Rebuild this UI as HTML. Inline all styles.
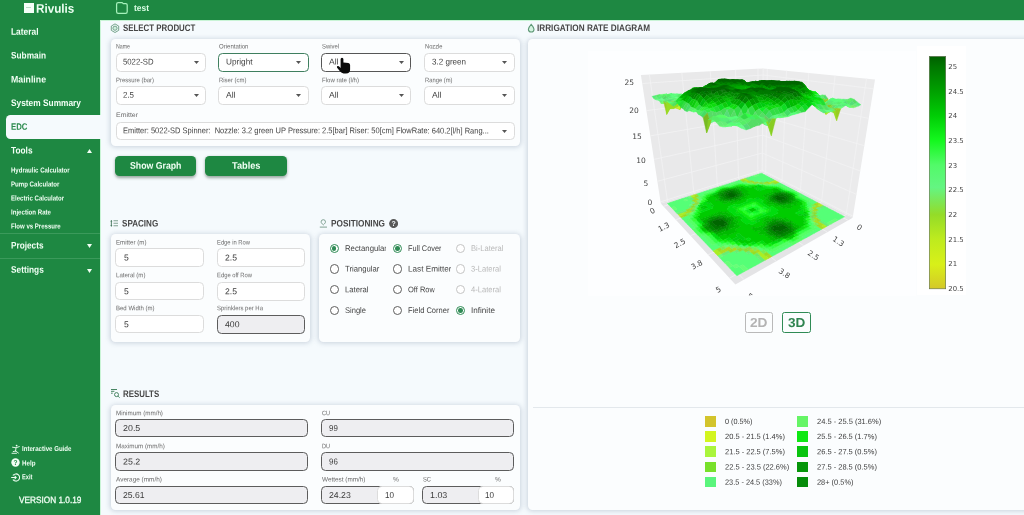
<!DOCTYPE html>
<html lang="en"><head><meta charset="utf-8"><title>Rivulis EDC</title><style>
html,body{margin:0;padding:0;background:#f5fafd;width:1024px;height:515px;overflow:hidden;}
#clip{position:absolute;left:0;top:0;width:1024px;height:515px;overflow:hidden;}
body{width:1024px;height:515px;overflow:hidden;position:relative;font-family:"Liberation Sans",sans-serif;}
#app{position:absolute;left:0;top:0;width:1024px;height:515px;will-change:transform;filter:blur(0.35px);}
.b{position:absolute;display:block;}
.t{position:absolute;white-space:pre;display:block;transform-origin:0 0;}
</style></head><body>
<div id="clip"><div id="app">
<div class="b " style="left:-6.00px;top:-6.00px;width:1040.00px;height:530.00px;background:#f5fafd;"></div>
<div class="b " style="left:-6.00px;top:-6.00px;width:1040.00px;height:25.60px;background:#1e8842;"></div>
<div class="b " style="left:100.00px;top:19.60px;width:934.00px;height:1.20px;background:#c9f4d6;"></div>
<div class="b " style="left:-6.00px;top:-6.00px;width:106.00px;height:530.00px;background:#1e8842;"></div>
<div class="b " style="left:100.00px;top:20.00px;width:1.20px;height:505.00px;background:#c9f4d6;"></div>
<div class="b " style="left:23.90px;top:2.90px;width:10.20px;height:10.20px;background:#f4fff7;"></div>
<div class="b " style="left:26.00px;top:7.20px;width:5.20px;height:0.90px;background:#b9dcc5;"></div>
<span class="t " style="left:35.80px;top:0px;font-size:12.50px;line-height:12.50px;font-weight:700;transform:translate(0,2.80px) scaleX(0.9345) rotate(0.03deg);color:#ecfff2;">Rivulis</span>
<svg class="b" style="left:115px;top:1px;width:14px;height:14px" viewBox="0 0 14 14"><path d="M3.2 1.6 H7.2 L8.2 2.6 H10.8 Q12.2 2.6 12.2 4 V10.8 Q12.2 12.4 10.6 12.4 H3.2 Q1.6 12.4 1.6 10.8 V3.2 Q1.6 1.6 3.2 1.6 Z" fill="none" stroke="#a6f2bb" stroke-width="1.25" stroke-linejoin="round"/></svg>
<span class="t " style="left:134.00px;top:1px;font-size:9.00px;line-height:9.00px;font-weight:700;transform:translate(0,2.90px) scaleX(0.9372) rotate(0.03deg);color:#dcffe6;">test</span>
<span class="t " style="left:10.80px;top:25px;font-size:9.50px;line-height:9.50px;font-weight:700;transform:translate(0,1.70px) scaleX(0.8827) rotate(0.03deg);color:#f1fff4;">Lateral</span>
<span class="t " style="left:10.80px;top:49px;font-size:9.50px;line-height:9.50px;font-weight:700;transform:translate(0,1.60px) scaleX(0.8725) rotate(0.03deg);color:#f1fff4;">Submain</span>
<span class="t " style="left:10.80px;top:72px;font-size:9.50px;line-height:9.50px;font-weight:700;transform:translate(0,2.40px) scaleX(0.9209) rotate(0.03deg);color:#f1fff4;">Mainline</span>
<span class="t " style="left:10.80px;top:96px;font-size:9.50px;line-height:9.50px;font-weight:700;transform:translate(0,1.90px) scaleX(0.8779) rotate(0.03deg);color:#f1fff4;">System Summary</span>
<div class="b " style="left:6.00px;top:115.20px;width:95.50px;height:23.80px;background:#f5fafd;border-radius:4.5px 0 0 4.5px;"></div>
<span class="t " style="left:11.00px;top:120px;font-size:9.30px;line-height:9.30px;font-weight:700;transform:translate(0,2.80px) scaleX(0.8403) rotate(0.03deg);color:#2a8a4c;">EDC</span>
<span class="t " style="left:11.00px;top:143px;font-size:9.50px;line-height:9.50px;font-weight:700;transform:translate(0,2.40px) scaleX(0.8730) rotate(0.03deg);color:#f1fff4;">Tools</span>
<svg class="b" style="left:87px;top:149.3px;width:5px;height:4px" viewBox="0 0 5 4"><path d="M0 4 L2.5 0 L5 4Z" fill="#f1fff4"/></svg>
<span class="t " style="left:10.90px;top:165px;font-size:7.20px;line-height:7.20px;font-weight:700;transform:translate(0,1.50px) scaleX(0.8383) rotate(0.03deg);color:#f1fff4;">Hydraulic Calculator</span>
<span class="t " style="left:10.90px;top:179px;font-size:7.20px;line-height:7.20px;font-weight:700;transform:translate(0,1.40px) scaleX(0.8477) rotate(0.03deg);color:#f1fff4;">Pump Calculator</span>
<span class="t " style="left:10.90px;top:193px;font-size:7.20px;line-height:7.20px;font-weight:700;transform:translate(0,1.40px) scaleX(0.8414) rotate(0.03deg);color:#f1fff4;">Electric Calculator</span>
<span class="t " style="left:10.90px;top:207px;font-size:7.20px;line-height:7.20px;font-weight:700;transform:translate(0,1.60px) scaleX(0.8473) rotate(0.03deg);color:#f1fff4;">Injection Rate</span>
<span class="t " style="left:10.90px;top:221px;font-size:7.20px;line-height:7.20px;font-weight:700;transform:translate(0,1.40px) scaleX(0.8408) rotate(0.03deg);color:#f1fff4;">Flow vs Pressure</span>
<div class="b " style="left:-6.00px;top:233.20px;width:106.00px;height:0.90px;background:#3b9a5b;"></div>
<span class="t " style="left:11.00px;top:238px;font-size:9.50px;line-height:9.50px;font-weight:700;transform:translate(0,2.40px) scaleX(0.8669) rotate(0.03deg);color:#f1fff4;">Projects</span>
<svg class="b" style="left:87px;top:244.3px;width:5px;height:4px" viewBox="0 0 5 4"><path d="M0 0 L2.5 4 L5 0Z" fill="#f1fff4"/></svg>
<div class="b " style="left:-6.00px;top:257.50px;width:106.00px;height:0.90px;background:#3b9a5b;"></div>
<span class="t " style="left:11.00px;top:263px;font-size:9.50px;line-height:9.50px;font-weight:700;transform:translate(0,1.70px) scaleX(0.8752) rotate(0.03deg);color:#f1fff4;">Settings</span>
<svg class="b" style="left:87px;top:268.6px;width:5px;height:4px" viewBox="0 0 5 4"><path d="M0 0 L2.5 4 L5 0Z" fill="#f1fff4"/></svg>
<span class="t " style="left:21.70px;top:443px;font-size:7.20px;line-height:7.20px;font-weight:700;transform:translate(0,2.00px) scaleX(0.8473) rotate(0.03deg);color:#f1fff4;">Interactive Guide</span>
<span class="t " style="left:21.70px;top:458px;font-size:7.20px;line-height:7.20px;font-weight:700;transform:translate(0,1.40px) scaleX(0.8652) rotate(0.03deg);color:#f1fff4;">Help</span>
<span class="t " style="left:21.70px;top:472px;font-size:7.20px;line-height:7.20px;font-weight:700;transform:translate(0,1.20px) scaleX(0.7951) rotate(0.03deg);color:#f1fff4;">Exit</span>
<span class="t " style="left:18.80px;top:493px;font-size:9.20px;line-height:9.20px;transform:translate(0,3.00px) scaleX(0.8987) rotate(0.03deg);color:#f1fff4;-webkit-text-stroke:0.3px #f1fff4;">VERSION 1.0.19</span>
<svg class="b" style="left:10.5px;top:443.5px;width:10px;height:10px" viewBox="0 0 10 10" fill="none" stroke="#f1fff4" stroke-width="0.9" stroke-linecap="round"><circle cx="5.6" cy="1.6" r="0.9" fill="#f1fff4" stroke="none"/><path d="M1.5 3.2 L5 3.8 L8.3 2.6 M5 3.8 L4.6 7 M4.6 7 L2.2 7.6 M4.6 7 L7.4 9 M1 9.3 H5.5"/></svg>
<svg class="b" style="left:10.5px;top:458px;width:9px;height:9px" viewBox="0 0 9 9"><circle cx="4.5" cy="4.5" r="4.2" fill="#f1fff4"/><text x="4.5" y="7" font-size="6.6" font-weight="700" text-anchor="middle" fill="#1e8842" font-family="Liberation Sans, sans-serif">?</text></svg>
<svg class="b" style="left:10.5px;top:472.5px;width:9px;height:9px" viewBox="0 0 9 9" fill="none" stroke="#f1fff4" stroke-width="1.05" stroke-linecap="round" stroke-linejoin="round"><path d="M2.2 2.2 A3.6 3.6 0 1 1 2.2 6.8"/><path d="M0.6 4.5 H5.2 M3.8 3 L5.3 4.5 L3.8 6"/></svg>
<span class="t " style="left:123.40px;top:21px;font-size:9.50px;line-height:9.50px;font-weight:700;transform:translate(0,2.00px) scaleX(0.8302) rotate(0.03deg);color:#454545;">SELECT PRODUCT</span>
<span class="t " style="left:121.90px;top:216px;font-size:9.50px;line-height:9.50px;font-weight:700;transform:translate(0,2.40px) scaleX(0.8502) rotate(0.03deg);color:#454545;">SPACING</span>
<span class="t " style="left:330.80px;top:216px;font-size:9.50px;line-height:9.50px;font-weight:700;transform:translate(0,2.40px) scaleX(0.8670) rotate(0.03deg);color:#454545;">POSITIONING</span>
<span class="t " style="left:123.40px;top:387px;font-size:9.50px;line-height:9.50px;font-weight:700;transform:translate(0,1.90px) scaleX(0.8296) rotate(0.03deg);color:#454545;">RESULTS</span>
<span class="t " style="left:537.30px;top:21px;font-size:9.50px;line-height:9.50px;font-weight:700;transform:translate(0,2.00px) scaleX(0.8622) rotate(0.03deg);color:#454545;">IRRIGATION RATE DIAGRAM</span>
<div class="b " style="left:110.50px;top:38.80px;width:409.50px;height:107.40px;background:#fbfdfe;border-radius:4.5px;box-shadow:0 0.5px 5px 0.5px rgba(100,120,145,.30);"></div>
<span class="t " style="left:116.10px;top:42px;font-size:6.60px;line-height:6.60px;transform:translate(0,1.60px) scaleX(0.7952) rotate(0.03deg);color:#6a6a6a;">Name</span>
<div class="b " style="left:115.70px;top:52.90px;width:90.20px;height:18.80px;background:#fff;border:1px solid #dcdcdc;border-radius:4.5px;box-sizing:border-box;"></div>
<span class="t " style="left:123.40px;top:56px;font-size:8.30px;line-height:8.30px;transform:translate(0,1.50px) scaleX(0.9341) rotate(0.03deg);color:#444;">5022-SD</span>
<svg class="b" style="left:193.70px;top:61.10px;width:5px;height:3px" viewBox="0 0 5 3"><path d="M0 0 H5 L2.5 3Z" fill="#555"/></svg>
<span class="t " style="left:218.80px;top:42px;font-size:6.60px;line-height:6.60px;transform:translate(0,1.60px) scaleX(0.9137) rotate(0.03deg);color:#6a6a6a;">Orientation</span>
<div class="b " style="left:218.40px;top:52.90px;width:90.20px;height:18.80px;background:#fff;border:1.5px solid #3f7f5f;border-radius:4.5px;box-sizing:border-box;"></div>
<span class="t " style="left:226.10px;top:56px;font-size:8.30px;line-height:8.30px;transform:translate(0,1.50px) scaleX(0.9904) rotate(0.03deg);color:#444;">Upright</span>
<svg class="b" style="left:296.40px;top:61.10px;width:5px;height:3px" viewBox="0 0 5 3"><path d="M0 0 H5 L2.5 3Z" fill="#555"/></svg>
<span class="t " style="left:321.50px;top:42px;font-size:6.60px;line-height:6.60px;transform:translate(0,1.60px) scaleX(0.8913) rotate(0.03deg);color:#6a6a6a;">Swivel</span>
<div class="b " style="left:321.10px;top:52.90px;width:90.20px;height:18.80px;background:#fff;border:1.25px solid #565656;border-radius:4.5px;box-sizing:border-box;"></div>
<span class="t " style="left:328.80px;top:56px;font-size:8.30px;line-height:8.30px;transform:translate(0,1.50px) scaleX(1.0298) rotate(0.03deg);color:#444;">All</span>
<svg class="b" style="left:399.10px;top:61.10px;width:5px;height:3px" viewBox="0 0 5 3"><path d="M0 0 H5 L2.5 3Z" fill="#555"/></svg>
<span class="t " style="left:424.80px;top:42px;font-size:6.60px;line-height:6.60px;transform:translate(0,1.60px) scaleX(0.8674) rotate(0.03deg);color:#6a6a6a;">Nozzle</span>
<div class="b " style="left:424.40px;top:52.90px;width:90.20px;height:18.80px;background:#fff;border:1px solid #dcdcdc;border-radius:4.5px;box-sizing:border-box;"></div>
<span class="t " style="left:432.10px;top:56px;font-size:8.30px;line-height:8.30px;transform:translate(0,1.50px) scaleX(0.9694) rotate(0.03deg);color:#444;">3.2 green</span>
<svg class="b" style="left:502.40px;top:61.10px;width:5px;height:3px" viewBox="0 0 5 3"><path d="M0 0 H5 L2.5 3Z" fill="#555"/></svg>
<span class="t " style="left:116.10px;top:75px;font-size:6.60px;line-height:6.60px;transform:translate(0,2.20px) scaleX(0.9009) rotate(0.03deg);color:#6a6a6a;">Pressure (bar)</span>
<div class="b " style="left:115.70px;top:86.10px;width:90.20px;height:18.70px;background:#fff;border:1px solid #dcdcdc;border-radius:4.5px;box-sizing:border-box;"></div>
<span class="t " style="left:123.40px;top:89px;font-size:8.30px;line-height:8.30px;transform:translate(0,1.70px) scaleX(0.9533) rotate(0.03deg);color:#444;">2.5</span>
<svg class="b" style="left:193.70px;top:94.30px;width:5px;height:3px" viewBox="0 0 5 3"><path d="M0 0 H5 L2.5 3Z" fill="#555"/></svg>
<span class="t " style="left:218.80px;top:75px;font-size:6.60px;line-height:6.60px;transform:translate(0,2.20px) scaleX(0.9037) rotate(0.03deg);color:#6a6a6a;">Riser (cm)</span>
<div class="b " style="left:218.40px;top:86.10px;width:90.20px;height:18.70px;background:#fff;border:1px solid #dcdcdc;border-radius:4.5px;box-sizing:border-box;"></div>
<span class="t " style="left:226.10px;top:89px;font-size:8.30px;line-height:8.30px;transform:translate(0,1.70px) scaleX(1.0298) rotate(0.03deg);color:#444;">All</span>
<svg class="b" style="left:296.40px;top:94.30px;width:5px;height:3px" viewBox="0 0 5 3"><path d="M0 0 H5 L2.5 3Z" fill="#555"/></svg>
<span class="t " style="left:321.50px;top:75px;font-size:6.60px;line-height:6.60px;transform:translate(0,2.20px) scaleX(0.9171) rotate(0.03deg);color:#6a6a6a;">Flow rate (l/h)</span>
<div class="b " style="left:321.10px;top:86.10px;width:90.20px;height:18.70px;background:#fff;border:1px solid #dcdcdc;border-radius:4.5px;box-sizing:border-box;"></div>
<span class="t " style="left:328.80px;top:89px;font-size:8.30px;line-height:8.30px;transform:translate(0,1.70px) scaleX(1.0298) rotate(0.03deg);color:#444;">All</span>
<svg class="b" style="left:399.10px;top:94.30px;width:5px;height:3px" viewBox="0 0 5 3"><path d="M0 0 H5 L2.5 3Z" fill="#555"/></svg>
<span class="t " style="left:424.80px;top:75px;font-size:6.60px;line-height:6.60px;transform:translate(0,2.20px) scaleX(0.8821) rotate(0.03deg);color:#6a6a6a;">Range (m)</span>
<div class="b " style="left:424.40px;top:86.10px;width:90.20px;height:18.70px;background:#fff;border:1px solid #dcdcdc;border-radius:4.5px;box-sizing:border-box;"></div>
<span class="t " style="left:432.10px;top:89px;font-size:8.30px;line-height:8.30px;transform:translate(0,1.70px) scaleX(1.0298) rotate(0.03deg);color:#444;">All</span>
<svg class="b" style="left:502.40px;top:94.30px;width:5px;height:3px" viewBox="0 0 5 3"><path d="M0 0 H5 L2.5 3Z" fill="#555"/></svg>
<span class="t " style="left:116.10px;top:110px;font-size:6.60px;line-height:6.60px;transform:translate(0,1.90px) scaleX(1.0525) rotate(0.03deg);color:#6a6a6a;">Emitter</span>
<div class="b " style="left:115.70px;top:121.60px;width:398.90px;height:18.20px;background:#fff;border:1px solid #dcdcdc;border-radius:4.5px;box-sizing:border-box;"></div>
<span class="t " style="left:123.40px;top:124px;font-size:8.30px;line-height:8.30px;transform:translate(0,2.20px) scaleX(0.9039) rotate(0.03deg);color:#444;">Emitter: 5022-SD Spinner:  Nozzle: 3.2 green UP Pressure: 2.5[bar] Riser: 50[cm] FlowRate: 640.2[l/h] Rang...</span>
<svg class="b" style="left:502.40px;top:129.80px;width:5px;height:3px" viewBox="0 0 5 3"><path d="M0 0 H5 L2.5 3Z" fill="#555"/></svg>
<div class="b " style="left:115.00px;top:155.50px;width:81.00px;height:20.40px;background:#1e8842;border-radius:4.5px;box-shadow:0 1.5px 3px rgba(40,70,50,.45);"></div>
<span class="t " style="left:129.70px;top:159px;font-size:9.60px;line-height:9.60px;font-weight:700;transform:translate(0,1.80px) scaleX(0.9109) rotate(0.03deg);color:#f1fff4;">Show Graph</span>
<div class="b " style="left:205.20px;top:155.50px;width:81.80px;height:20.40px;background:#1e8842;border-radius:4.5px;box-shadow:0 1.5px 3px rgba(40,70,50,.45);"></div>
<span class="t " style="left:231.70px;top:159px;font-size:9.60px;line-height:9.60px;font-weight:700;transform:translate(0,1.80px) scaleX(0.9596) rotate(0.03deg);color:#f1fff4;">Tables</span>
<svg class="b" style="left:110px;top:23px;width:10px;height:10.5px" viewBox="0 0 10 10.5" fill="none" stroke="#6f9f86" stroke-width="0.95"><path d="M5 0.9 L8.7 3.05 V7.35 L5 9.5 L1.3 7.35 V3.05 Z"/><circle cx="5" cy="5.2" r="2.1" fill="#cfeedd"/></svg>
<svg class="b" style="left:110px;top:219px;width:9px;height:9px" viewBox="0 0 9 9" fill="none"><path d="M1.35 1.6 V7.2" stroke="#3f7358" stroke-width="0.9"/><path d="M0.3 2.5 L1.35 1.1 L2.4 2.5 Z M0.3 6.3 L1.35 7.7 L2.4 6.3 Z" fill="#3f7358"/><path d="M3.5 1.75 H8 M3.5 4.25 H8 M3.5 6.75 H8" stroke="#7b9d8c" stroke-width="0.95"/></svg>
<svg class="b" style="left:319px;top:219px;width:9px;height:9px" viewBox="0 0 9 9" fill="none" stroke="#7a9d8d" stroke-width="0.95"><path d="M4.3 5.9 C2.6 4.4 2.1 3.6 2.1 2.9 A2.2 2.2 0 0 1 6.5 2.9 C6.5 3.6 6 4.4 4.3 5.9 Z"/><path d="M0.8 8.1 H8"/></svg>
<svg class="b" style="left:110px;top:388px;width:11px;height:11px" viewBox="0 0 11 11" fill="none" stroke="#3f7f5c" stroke-width="0.95"><path d="M1 1.5 H7 M1 3.3 H4.4 M1 5.2 H2.7"/><circle cx="6.5" cy="6.6" r="2"/><path d="M8 8.1 L9.6 9.7"/></svg>
<svg class="b" style="left:527px;top:23px;width:9px;height:10px" viewBox="0 0 9 10" fill="#d4f3e0" stroke="#5f9977" stroke-width="1.1"><path d="M4.2 1.4 C5.6 3 7 4.6 7 6.2 A2.8 2.8 0 0 1 1.4 6.2 C1.4 4.6 2.8 3 4.2 1.4 Z"/></svg>
<svg class="b" style="left:335px;top:56px;width:17px;height:19px" viewBox="335 56 17 19"><path d="M340.6 59.2 Q340.6 57.7 342 57.7 Q343.4 57.7 343.4 59.2 L343.4 62.5 L348.4 63.1 Q350.1 63.4 350.1 65.1 L350.1 69.4 Q350.1 73.4 346 73.4 L343.6 73.4 Q341.5 73.4 340.2 71.6 L337.1 67.7 Q336.5 66.6 337.5 66.1 Q338.6 65.8 339.4 66.7 L340.6 67.9 Z" fill="#0a0a0a"/></svg>
<div class="b " style="left:110.50px;top:234.20px;width:199.60px;height:108.00px;background:#fbfdfe;border-radius:4.5px;box-shadow:0 0.5px 5px 0.5px rgba(100,120,145,.30);"></div>
<span class="t " style="left:116.00px;top:237px;font-size:6.60px;line-height:6.60px;transform:translate(0,2.40px) scaleX(0.9347) rotate(0.03deg);color:#6a6a6a;">Emitter (m)</span>
<span class="t " style="left:217.00px;top:237px;font-size:6.60px;line-height:6.60px;transform:translate(0,2.40px) scaleX(0.8818) rotate(0.03deg);color:#6a6a6a;">Edge in Row</span>
<div class="b " style="left:115.20px;top:248.20px;width:88.70px;height:18.40px;background:#fff;border:1px solid #dcdcdc;border-radius:4.5px;box-sizing:border-box;"></div>
<span class="t " style="left:123.50px;top:251px;font-size:8.60px;line-height:8.60px;transform:translate(0,2.40px) scaleX(1.0000) rotate(0.03deg);color:#3c3c3c;">5</span>
<div class="b " style="left:216.50px;top:248.20px;width:88.70px;height:18.50px;background:#fff;border:1px solid #dcdcdc;border-radius:4.5px;box-sizing:border-box;"></div>
<span class="t " style="left:224.60px;top:251px;font-size:8.60px;line-height:8.60px;transform:translate(0,2.45px) scaleX(1.0037) rotate(0.03deg);color:#3c3c3c;">2.5</span>
<span class="t " style="left:116.00px;top:270px;font-size:6.60px;line-height:6.60px;transform:translate(0,2.30px) scaleX(0.9245) rotate(0.03deg);color:#6a6a6a;">Lateral (m)</span>
<span class="t " style="left:217.00px;top:270px;font-size:6.60px;line-height:6.60px;transform:translate(0,2.30px) scaleX(0.8860) rotate(0.03deg);color:#6a6a6a;">Edge off Row</span>
<div class="b " style="left:115.20px;top:282.10px;width:88.70px;height:18.40px;background:#fff;border:1px solid #dcdcdc;border-radius:4.5px;box-sizing:border-box;"></div>
<span class="t " style="left:123.50px;top:285px;font-size:8.60px;line-height:8.60px;transform:translate(0,2.30px) scaleX(1.0000) rotate(0.03deg);color:#3c3c3c;">5</span>
<div class="b " style="left:216.50px;top:282.10px;width:88.70px;height:18.50px;background:#fff;border:1px solid #dcdcdc;border-radius:4.5px;box-sizing:border-box;"></div>
<span class="t " style="left:224.60px;top:285px;font-size:8.60px;line-height:8.60px;transform:translate(0,2.35px) scaleX(1.0037) rotate(0.03deg);color:#3c3c3c;">2.5</span>
<span class="t " style="left:116.00px;top:303px;font-size:6.60px;line-height:6.60px;transform:translate(0,2.20px) scaleX(0.9128) rotate(0.03deg);color:#6a6a6a;">Bed Width (m)</span>
<span class="t " style="left:217.00px;top:303px;font-size:6.60px;line-height:6.60px;transform:translate(0,2.20px) scaleX(0.9022) rotate(0.03deg);color:#6a6a6a;">Sprinklers per Ha</span>
<div class="b " style="left:115.20px;top:315.10px;width:88.70px;height:18.40px;background:#fff;border:1px solid #dcdcdc;border-radius:4.5px;box-sizing:border-box;"></div>
<span class="t " style="left:123.50px;top:318px;font-size:8.60px;line-height:8.60px;transform:translate(0,2.30px) scaleX(1.0000) rotate(0.03deg);color:#3c3c3c;">5</span>
<div class="b " style="left:216.50px;top:315.10px;width:88.70px;height:18.50px;background:#eeeef1;border:1.1px solid #5c5c5c;border-radius:4.5px;box-sizing:border-box;"></div>
<span class="t " style="left:224.60px;top:318px;font-size:8.60px;line-height:8.60px;transform:translate(0,2.35px) scaleX(1.0105) rotate(0.03deg);color:#3c3c3c;">400</span>
<div class="b " style="left:319.00px;top:234.20px;width:201.00px;height:108.00px;background:#fbfdfe;border-radius:4.5px;box-shadow:0 0.5px 5px 0.5px rgba(100,120,145,.30);"></div>
<div class="b " style="left:329.60px;top:243.70px;width:9.20px;height:9.20px;border:1.1px solid #2f8b55;border-radius:50%;box-sizing:border-box;background:#fff;"></div>
<div class="b " style="left:331.90px;top:246.00px;width:4.60px;height:4.60px;border-radius:50%;background:#2f8b55;"></div>
<span class="t " style="left:344.70px;top:242px;font-size:8.20px;line-height:8.20px;transform:translate(0,2.90px) scaleX(0.9499) rotate(0.03deg);color:#444;max-width:43.48px;overflow:hidden;">Rectangular</span>
<div class="b " style="left:392.70px;top:243.70px;width:9.20px;height:9.20px;border:1.1px solid #2f8b55;border-radius:50%;box-sizing:border-box;background:#fff;"></div>
<div class="b " style="left:395.00px;top:246.00px;width:4.60px;height:4.60px;border-radius:50%;background:#2f8b55;"></div>
<span class="t " style="left:408.00px;top:242px;font-size:8.20px;line-height:8.20px;transform:translate(0,2.90px) scaleX(0.8965) rotate(0.03deg);color:#444;max-width:47.29px;overflow:hidden;">Full Cover</span>
<div class="b " style="left:456.00px;top:243.70px;width:9.20px;height:9.20px;border:1.1px solid #c4c4c4;border-radius:50%;box-sizing:border-box;background:#fff;"></div>
<span class="t " style="left:471.00px;top:242px;font-size:8.20px;line-height:8.20px;transform:translate(0,2.90px) scaleX(0.9260) rotate(0.03deg);color:#b9b9b9;">Bi-Lateral</span>
<div class="b " style="left:329.60px;top:264.40px;width:9.20px;height:9.20px;border:1.1px solid #5e5e5e;border-radius:50%;box-sizing:border-box;background:#fff;"></div>
<span class="t " style="left:344.70px;top:263px;font-size:8.20px;line-height:8.20px;transform:translate(0,2.60px) scaleX(0.9423) rotate(0.03deg);color:#444;max-width:43.83px;overflow:hidden;">Triangular</span>
<div class="b " style="left:392.70px;top:264.40px;width:9.20px;height:9.20px;border:1.1px solid #5e5e5e;border-radius:50%;box-sizing:border-box;background:#fff;"></div>
<span class="t " style="left:408.00px;top:263px;font-size:8.20px;line-height:8.20px;transform:translate(0,2.60px) scaleX(0.9966) rotate(0.03deg);color:#444;max-width:42.54px;overflow:hidden;">Last Emitter</span>
<div class="b " style="left:456.00px;top:264.40px;width:9.20px;height:9.20px;border:1.1px solid #c4c4c4;border-radius:50%;box-sizing:border-box;background:#fff;"></div>
<span class="t " style="left:471.00px;top:263px;font-size:8.20px;line-height:8.20px;transform:translate(0,2.60px) scaleX(0.9269) rotate(0.03deg);color:#b9b9b9;">3-Lateral</span>
<div class="b " style="left:329.60px;top:285.10px;width:9.20px;height:9.20px;border:1.1px solid #5e5e5e;border-radius:50%;box-sizing:border-box;background:#fff;"></div>
<span class="t " style="left:344.70px;top:284px;font-size:8.20px;line-height:8.20px;transform:translate(0,2.30px) scaleX(0.9372) rotate(0.03deg);color:#444;max-width:44.07px;overflow:hidden;">Lateral</span>
<div class="b " style="left:392.70px;top:285.10px;width:9.20px;height:9.20px;border:1.1px solid #5e5e5e;border-radius:50%;box-sizing:border-box;background:#fff;"></div>
<span class="t " style="left:408.00px;top:284px;font-size:8.20px;line-height:8.20px;transform:translate(0,2.30px) scaleX(0.9162) rotate(0.03deg);color:#444;max-width:46.28px;overflow:hidden;">Off Row</span>
<div class="b " style="left:456.00px;top:285.10px;width:9.20px;height:9.20px;border:1.1px solid #c4c4c4;border-radius:50%;box-sizing:border-box;background:#fff;"></div>
<span class="t " style="left:471.00px;top:284px;font-size:8.20px;line-height:8.20px;transform:translate(0,2.30px) scaleX(0.9269) rotate(0.03deg);color:#b9b9b9;">4-Lateral</span>
<div class="b " style="left:329.60px;top:305.80px;width:9.20px;height:9.20px;border:1.1px solid #5e5e5e;border-radius:50%;box-sizing:border-box;background:#fff;"></div>
<span class="t " style="left:344.70px;top:304px;font-size:8.20px;line-height:8.20px;transform:translate(0,3.00px) scaleX(0.9212) rotate(0.03deg);color:#444;max-width:44.83px;overflow:hidden;">Single</span>
<div class="b " style="left:392.70px;top:305.80px;width:9.20px;height:9.20px;border:1.1px solid #5e5e5e;border-radius:50%;box-sizing:border-box;background:#fff;"></div>
<span class="t " style="left:408.00px;top:304px;font-size:8.20px;line-height:8.20px;transform:translate(0,3.00px) scaleX(0.9198) rotate(0.03deg);color:#444;max-width:46.10px;overflow:hidden;">Field Corner</span>
<div class="b " style="left:456.00px;top:305.80px;width:9.20px;height:9.20px;border:1.1px solid #2f8b55;border-radius:50%;box-sizing:border-box;background:#fff;"></div>
<div class="b " style="left:458.30px;top:308.10px;width:4.60px;height:4.60px;border-radius:50%;background:#2f8b55;"></div>
<span class="t " style="left:471.00px;top:304px;font-size:8.20px;line-height:8.20px;transform:translate(0,3.00px) scaleX(0.9934) rotate(0.03deg);color:#444;">Infinite</span>
<svg class="b" style="left:388.5px;top:219.2px;width:9.2px;height:9.2px" viewBox="0 0 9 9"><circle cx="4.5" cy="4.5" r="4.4" fill="#595959"/><text x="4.5" y="7" font-size="6.8" font-weight="700" text-anchor="middle" fill="#f5fafd" font-family="Liberation Sans, sans-serif">?</text></svg>
<div class="b " style="left:110.50px;top:405.00px;width:409.00px;height:105.40px;background:#fbfdfe;border-radius:4.5px;box-shadow:0 0.5px 5px 0.5px rgba(100,120,145,.30);"></div>
<span class="t " style="left:116.00px;top:408px;font-size:6.60px;line-height:6.60px;transform:translate(0,2.20px) scaleX(0.9495) rotate(0.03deg);color:#6a6a6a;">Minimum (mm/h)</span>
<div class="b " style="left:115.20px;top:418.60px;width:193.20px;height:18.90px;background:#eeeef1;border:1.1px solid #5c5c5c;border-radius:4.5px;box-sizing:border-box;"></div>
<span class="t " style="left:123.40px;top:422px;font-size:8.60px;line-height:8.60px;transform:translate(0,2.05px) scaleX(1.0336) rotate(0.03deg);color:#3c3c3c;">20.5</span>
<span class="t " style="left:321.60px;top:408px;font-size:6.60px;line-height:6.60px;transform:translate(0,2.20px) scaleX(0.8392) rotate(0.03deg);color:#6a6a6a;">CU</span>
<div class="b " style="left:320.80px;top:418.60px;width:193.60px;height:18.90px;background:#eeeef1;border:1.1px solid #5c5c5c;border-radius:4.5px;box-sizing:border-box;"></div>
<span class="t " style="left:328.90px;top:422px;font-size:8.60px;line-height:8.60px;transform:translate(0,2.05px) scaleX(0.9199) rotate(0.03deg);color:#3c3c3c;">99</span>
<span class="t " style="left:116.00px;top:441px;font-size:6.60px;line-height:6.60px;transform:translate(0,2.30px) scaleX(0.9546) rotate(0.03deg);color:#6a6a6a;">Maximum (mm/h)</span>
<div class="b " style="left:115.20px;top:452.10px;width:193.20px;height:18.90px;background:#eeeef1;border:1.1px solid #5c5c5c;border-radius:4.5px;box-sizing:border-box;"></div>
<span class="t " style="left:123.40px;top:455px;font-size:8.60px;line-height:8.60px;transform:translate(0,2.55px) scaleX(1.0336) rotate(0.03deg);color:#3c3c3c;">25.2</span>
<span class="t " style="left:321.60px;top:441px;font-size:6.60px;line-height:6.60px;transform:translate(0,2.30px) scaleX(0.8392) rotate(0.03deg);color:#6a6a6a;">DU</span>
<div class="b " style="left:320.80px;top:452.10px;width:193.60px;height:18.90px;background:#eeeef1;border:1.1px solid #5c5c5c;border-radius:4.5px;box-sizing:border-box;"></div>
<span class="t " style="left:328.90px;top:455px;font-size:8.60px;line-height:8.60px;transform:translate(0,2.55px) scaleX(0.9199) rotate(0.03deg);color:#3c3c3c;">96</span>
<span class="t " style="left:116.00px;top:474px;font-size:6.60px;line-height:6.60px;transform:translate(0,2.40px) scaleX(0.9747) rotate(0.03deg);color:#6a6a6a;">Average (mm/h)</span>
<div class="b " style="left:115.20px;top:485.60px;width:193.20px;height:18.90px;background:#eeeef1;border:1.1px solid #5c5c5c;border-radius:4.5px;box-sizing:border-box;"></div>
<span class="t " style="left:123.40px;top:489px;font-size:8.60px;line-height:8.60px;transform:translate(0,2.05px) scaleX(0.9990) rotate(0.03deg);color:#3c3c3c;">25.61</span>
<span class="t " style="left:321.60px;top:474px;font-size:6.60px;line-height:6.60px;transform:translate(0,2.40px) scaleX(0.9670) rotate(0.03deg);color:#6a6a6a;">Wettest (mm/h)</span>
<span class="t " style="left:393.30px;top:474px;font-size:6.60px;line-height:6.60px;transform:translate(0,2.40px) scaleX(1.0000) rotate(0.03deg);color:#6a6a6a;">%</span>
<span class="t " style="left:422.60px;top:474px;font-size:6.60px;line-height:6.60px;transform:translate(0,2.40px) scaleX(0.8725) rotate(0.03deg);color:#6a6a6a;">SC</span>
<span class="t " style="left:495.20px;top:474px;font-size:6.60px;line-height:6.60px;transform:translate(0,2.40px) scaleX(1.0000) rotate(0.03deg);color:#6a6a6a;">%</span>
<div class="b " style="left:320.80px;top:485.60px;width:92.80px;height:18.90px;background:#eeeef1;border:1.1px solid #5c5c5c;border-radius:4.5px;box-sizing:border-box;"></div>
<span class="t " style="left:328.90px;top:489px;font-size:8.60px;line-height:8.60px;transform:translate(0,2.05px) scaleX(1.0129) rotate(0.03deg);color:#3c3c3c;">24.23</span>
<div class="b " style="left:377.30px;top:485.60px;width:36.30px;height:18.90px;background:#fff;border:1px solid #dcdcdc;border-radius:4.5px;box-sizing:border-box;"></div>
<span class="t " style="left:384.60px;top:489px;font-size:8.60px;line-height:8.60px;transform:translate(0,2.10px) scaleX(0.9408) rotate(0.03deg);color:#3c3c3c;">10</span>
<div class="b " style="left:422.00px;top:485.60px;width:92.40px;height:18.90px;background:#eeeef1;border:1.1px solid #5c5c5c;border-radius:4.5px;box-sizing:border-box;"></div>
<span class="t " style="left:430.10px;top:489px;font-size:8.60px;line-height:8.60px;transform:translate(0,2.05px) scaleX(1.0336) rotate(0.03deg);color:#3c3c3c;">1.03</span>
<div class="b " style="left:478.10px;top:485.60px;width:36.30px;height:18.90px;background:#fff;border:1px solid #dcdcdc;border-radius:4.5px;box-sizing:border-box;"></div>
<span class="t " style="left:485.40px;top:489px;font-size:8.60px;line-height:8.60px;transform:translate(0,2.10px) scaleX(0.9408) rotate(0.03deg);color:#3c3c3c;">10</span>
<div class="b " style="left:527.70px;top:38.80px;width:510.00px;height:471.40px;background:#fbfdfe;border-radius:4.5px;box-shadow:0 0.5px 5px 0.5px rgba(100,120,145,.30);"></div>
<div class="b " style="left:587.50px;top:50.50px;width:328.50px;height:245.50px;background:#fdfeff;"></div>
<div class="b " style="left:917.00px;top:46.00px;width:49.00px;height:249.00px;background:#fff;"></div>
<div class="b " style="left:744.60px;top:312.20px;width:28.50px;height:20.50px;border:1.1px solid #b9b9b9;border-radius:2.5px;box-sizing:border-box;"></div>
<span class="t " style="left:750.00px;top:314px;font-size:13.00px;line-height:13.00px;font-weight:700;transform:translate(0,2.00px) scaleX(1.0530) rotate(0.03deg);color:#b3b3b3;">2D</span>
<div class="b " style="left:781.80px;top:312.20px;width:29.40px;height:20.50px;border:1.5px solid #2f8b55;border-radius:2.5px;box-sizing:border-box;"></div>
<span class="t " style="left:787.80px;top:314px;font-size:13.00px;line-height:13.00px;font-weight:700;transform:translate(0,2.00px) scaleX(1.0410) rotate(0.03deg);color:#2f8450;">3D</span>
<div class="b " style="left:533.00px;top:406.70px;width:500.00px;height:1.00px;background:#e3e8ec;"></div>
<div class="b " style="left:704.80px;top:416.00px;width:11.10px;height:10.70px;background:#d3c42c;"></div>
<span class="t " style="left:724.70px;top:416px;font-size:7.70px;line-height:7.70px;transform:translate(0,1.90px) scaleX(0.9450) rotate(0.03deg);color:#3c3c3c;">0 (0.5%)</span>
<div class="b " style="left:797.40px;top:416.00px;width:11.10px;height:10.70px;background:#66f566;"></div>
<span class="t " style="left:817.30px;top:416px;font-size:7.70px;line-height:7.70px;transform:translate(0,1.90px) scaleX(0.9755) rotate(0.03deg);color:#3c3c3c;">24.5 - 25.5 (31.6%)</span>
<div class="b " style="left:704.80px;top:431.20px;width:11.10px;height:10.70px;background:#d3f51f;"></div>
<span class="t " style="left:724.70px;top:431px;font-size:7.70px;line-height:7.70px;transform:translate(0,2.10px) scaleX(0.9735) rotate(0.03deg);color:#3c3c3c;">20.5 - 21.5 (1.4%)</span>
<div class="b " style="left:797.40px;top:431.20px;width:11.10px;height:10.70px;background:#0fe814;"></div>
<span class="t " style="left:817.30px;top:431px;font-size:7.70px;line-height:7.70px;transform:translate(0,2.10px) scaleX(0.9735) rotate(0.03deg);color:#3c3c3c;">25.5 - 26.5 (1.7%)</span>
<div class="b " style="left:704.80px;top:446.40px;width:11.10px;height:10.70px;background:#aaf53c;"></div>
<span class="t " style="left:724.70px;top:446px;font-size:7.70px;line-height:7.70px;transform:translate(0,2.30px) scaleX(0.9735) rotate(0.03deg);color:#3c3c3c;">21.5 - 22.5 (7.5%)</span>
<div class="b " style="left:797.40px;top:446.40px;width:11.10px;height:10.70px;background:#0ac40f;"></div>
<span class="t " style="left:817.30px;top:446px;font-size:7.70px;line-height:7.70px;transform:translate(0,2.30px) scaleX(0.9735) rotate(0.03deg);color:#3c3c3c;">26.5 - 27.5 (0.5%)</span>
<div class="b " style="left:704.80px;top:461.60px;width:11.10px;height:10.70px;background:#78e02a;"></div>
<span class="t " style="left:724.70px;top:461px;font-size:7.70px;line-height:7.70px;transform:translate(0,2.50px) scaleX(0.9755) rotate(0.03deg);color:#3c3c3c;">22.5 - 23.5 (22.6%)</span>
<div class="b " style="left:797.40px;top:461.60px;width:11.10px;height:10.70px;background:#06960a;"></div>
<span class="t " style="left:817.30px;top:461px;font-size:7.70px;line-height:7.70px;transform:translate(0,2.50px) scaleX(0.9735) rotate(0.03deg);color:#3c3c3c;">27.5 - 28.5 (0.5%)</span>
<div class="b " style="left:704.80px;top:476.80px;width:11.10px;height:10.70px;background:#5af57c;"></div>
<span class="t " style="left:724.70px;top:477px;font-size:7.70px;line-height:7.70px;transform:translate(0,1.70px) scaleX(0.9581) rotate(0.03deg);color:#3c3c3c;">23.5 - 24.5 (33%)</span>
<div class="b " style="left:797.40px;top:476.80px;width:11.10px;height:10.70px;background:#068c0a;"></div>
<span class="t " style="left:817.30px;top:477px;font-size:7.70px;line-height:7.70px;transform:translate(0,1.70px) scaleX(0.9636) rotate(0.03deg);color:#3c3c3c;">28+ (0.5%)</span>
<svg class="b" style="left:0;top:0;width:1024px;height:515px" viewBox="0 0 1024 515"><defs><filter id="pb" x="-5%" y="-5%" width="110%" height="110%"><feGaussianBlur stdDeviation="0.7"/></filter></defs><g filter="url(#pb)"><path d="M762.1 171.3 L763.1 68.4 L640.9 74.9 L660.8 203.4 Z" fill="#e9e9ea"/><path d="M762.1 171.3 L763.1 68.4 L875.0 79.4 L852.7 217.8 Z" fill="#ebebec"/><path d="M762.1 171.3 L852.7 217.8 L735.4 284.5 L660.8 203.4 Z" fill="#e4e4e6"/><path d="M762.1 170.0 L660.6 201.8 M762.1 170.0 L853.0 216.2 M762.3 153.0 L657.4 181.3 M762.3 153.0 L856.5 194.4 M762.5 135.1 L654.0 159.4 M762.5 135.1 L860.3 171.0 M762.6 116.2 L650.3 135.9 M762.6 116.2 L864.3 145.7 M762.8 96.2 L646.4 110.6 M762.8 96.2 L868.7 118.4 M763.0 75.0 L642.2 83.5 M763.0 75.0 L873.5 88.8 M757.8 172.7 L758.0 68.7 M765.7 173.2 L767.3 68.9 M757.8 172.7 L848.2 220.4 M765.7 173.2 L663.5 206.4 M738.5 178.8 L735.5 69.9 M782.0 181.5 L786.5 70.7 M738.5 178.8 L827.4 232.2 M782.0 181.5 L675.9 219.8 M717.3 185.5 L710.3 71.2 M800.4 191.0 L808.8 72.9 M717.3 185.5 L803.7 245.7 M800.4 191.0 L690.5 235.7 M693.8 193.0 L681.8 72.8 M821.6 201.9 L835.1 75.5 M693.8 193.0 L776.2 261.3 M821.6 201.9 L708.1 254.8 M667.5 201.3 L649.4 74.5 M846.2 214.5 L866.5 78.6 M667.5 201.3 L744.0 279.6 M846.2 214.5 L729.5 278.1 M762.1 171.3 L763.1 68.4" stroke="#f3f3f4" stroke-width="0.8" fill="none"/><g><path d="M761.4 173.3 L763.0 174.1 L761.0 174.8 L759.4 173.9 ZM759.4 173.9 L761.0 174.8 L759.0 175.4 L757.3 174.5 ZM753.2 175.9 L754.9 176.8 L752.8 177.4 L751.1 176.5 ZM751.1 176.5 L752.8 177.4 L750.6 178.1 L749.0 177.2 ZM749.0 177.2 L750.6 178.1 L748.5 178.8 L746.9 177.9 ZM740.4 180.0 L742.0 181.0 L739.7 181.7 L738.1 180.7 ZM738.1 180.7 L739.7 181.7 L737.5 182.4 L735.9 181.4 ZM735.9 181.4 L737.5 182.4 L735.2 183.2 L733.6 182.2 ZM733.6 182.2 L735.2 183.2 L732.9 183.9 L731.3 182.9 ZM731.3 182.9 L732.9 183.9 L730.5 184.7 L729.0 183.7 ZM729.0 183.7 L730.5 184.7 L728.2 185.4 L726.6 184.4 ZM726.6 184.4 L728.2 185.4 L725.8 186.2 L724.3 185.2 ZM712.0 189.1 L713.5 190.2 L710.9 191.0 L709.4 189.9 ZM709.4 189.9 L710.9 191.0 L708.3 191.9 L706.8 190.8 ZM706.8 190.8 L708.3 191.9 L705.7 192.7 L704.2 191.6 ZM704.2 191.6 L705.7 192.7 L703.1 193.6 L701.6 192.4 ZM701.6 192.4 L703.1 193.6 L700.4 194.5 L698.9 193.3 ZM698.9 193.3 L700.4 194.5 L697.7 195.3 L696.2 194.2 ZM688.0 196.8 L689.3 198.0 L686.5 199.0 L685.1 197.7 ZM685.1 197.7 L686.5 199.0 L683.6 199.9 L682.3 198.6 ZM682.3 198.6 L683.6 199.9 L680.7 200.8 L679.4 199.6 ZM679.4 199.6 L680.7 200.8 L677.7 201.8 L676.4 200.5 ZM676.4 200.5 L677.7 201.8 L674.8 202.8 L673.4 201.5 ZM673.4 201.5 L674.8 202.8 L671.7 203.7 L670.4 202.4 ZM670.4 202.4 L671.7 203.7 L668.7 204.7 L667.4 203.4 ZM763.0 174.1 L764.7 175.0 L762.7 175.7 L761.0 174.8 ZM761.0 174.8 L762.7 175.7 L760.6 176.3 L759.0 175.4 ZM759.0 175.4 L760.6 176.3 L758.6 177.0 L756.9 176.1 ZM756.9 176.1 L758.6 177.0 L756.5 177.7 L754.9 176.8 ZM754.9 176.8 L756.5 177.7 L754.4 178.4 L752.8 177.4 ZM752.8 177.4 L754.4 178.4 L752.3 179.1 L750.6 178.1 ZM750.6 178.1 L752.3 179.1 L750.1 179.8 L748.5 178.8 ZM742.0 181.0 L743.6 181.9 L741.3 182.7 L739.7 181.7 ZM739.7 181.7 L741.3 182.7 L739.1 183.4 L737.5 182.4 ZM703.1 193.6 L704.5 194.7 L701.8 195.6 L700.4 194.5 ZM700.4 194.5 L701.8 195.6 L699.1 196.5 L697.7 195.3 ZM689.3 198.0 L690.7 199.3 L687.9 200.2 L686.5 199.0 ZM683.6 199.9 L685.0 201.2 L682.1 202.1 L680.7 200.8 ZM680.7 200.8 L682.1 202.1 L679.1 203.1 L677.7 201.8 ZM677.7 201.8 L679.1 203.1 L676.1 204.1 L674.8 202.8 ZM674.8 202.8 L676.1 204.1 L673.0 205.1 L671.7 203.7 ZM671.7 203.7 L673.0 205.1 L670.0 206.1 L668.7 204.7 ZM764.7 175.0 L766.4 175.9 L764.4 176.5 L762.7 175.7 ZM762.7 175.7 L764.4 176.5 L762.3 177.2 L760.6 176.3 ZM760.6 176.3 L762.3 177.2 L760.3 177.9 L758.6 177.0 ZM758.6 177.0 L760.3 177.9 L758.2 178.6 L756.5 177.7 ZM756.5 177.7 L758.2 178.6 L756.1 179.3 L754.4 178.4 ZM754.4 178.4 L756.1 179.3 L753.9 180.0 L752.3 179.1 ZM752.3 179.1 L753.9 180.0 L751.8 180.7 L750.1 179.8 ZM690.7 199.3 L692.2 200.5 L689.3 201.5 L687.9 200.2 ZM687.9 200.2 L689.3 201.5 L686.4 202.4 L685.0 201.2 ZM685.0 201.2 L686.4 202.4 L683.4 203.4 L682.1 202.1 ZM682.1 202.1 L683.4 203.4 L680.4 204.4 L679.1 203.1 ZM679.1 203.1 L680.4 204.4 L677.4 205.4 L676.1 204.1 ZM676.1 204.1 L677.4 205.4 L674.4 206.4 L673.0 205.1 ZM673.0 205.1 L674.4 206.4 L671.3 207.4 L670.0 206.1 ZM766.4 175.9 L768.1 176.8 L766.1 177.5 L764.4 176.5 ZM764.4 176.5 L766.1 177.5 L764.0 178.1 L762.3 177.2 ZM762.3 177.2 L764.0 178.1 L762.0 178.8 L760.3 177.9 ZM760.3 177.9 L762.0 178.8 L759.9 179.5 L758.2 178.6 ZM758.2 178.6 L759.9 179.5 L757.8 180.2 L756.1 179.3 ZM756.1 179.3 L757.8 180.2 L755.6 181.0 L753.9 180.0 ZM753.9 180.0 L755.6 181.0 L753.5 181.7 L751.8 180.7 ZM700.6 197.7 L702.1 198.9 L699.3 199.9 L697.8 198.6 ZM692.2 200.5 L693.6 201.8 L690.7 202.8 L689.3 201.5 ZM689.3 201.5 L690.7 202.8 L687.8 203.7 L686.4 202.4 ZM686.4 202.4 L687.8 203.7 L684.8 204.7 L683.4 203.4 ZM683.4 203.4 L684.8 204.7 L681.8 205.7 L680.4 204.4 ZM680.4 204.4 L681.8 205.7 L678.8 206.8 L677.4 205.4 ZM677.4 205.4 L678.8 206.8 L675.7 207.8 L674.4 206.4 ZM768.1 176.8 L769.8 177.7 L767.8 178.4 L766.1 177.5 ZM766.1 177.5 L767.8 178.4 L765.8 179.1 L764.0 178.1 ZM764.0 178.1 L765.8 179.1 L763.7 179.8 L762.0 178.8 ZM762.0 178.8 L763.7 179.8 L761.6 180.5 L759.9 179.5 ZM759.9 179.5 L761.6 180.5 L759.5 181.2 L757.8 180.2 ZM757.8 180.2 L759.5 181.2 L757.3 181.9 L755.6 181.0 ZM690.7 202.8 L692.2 204.1 L689.2 205.1 L687.8 203.7 ZM687.8 203.7 L689.2 205.1 L686.3 206.1 L684.8 204.7 ZM684.8 204.7 L686.3 206.1 L683.2 207.1 L681.8 205.7 ZM681.8 205.7 L683.2 207.1 L680.2 208.1 L678.8 206.8 ZM678.8 206.8 L680.2 208.1 L677.1 209.2 L675.7 207.8 ZM769.8 177.7 L771.6 178.6 L769.6 179.3 L767.8 178.4 ZM767.8 178.4 L769.6 179.3 L767.5 180.0 L765.8 179.1 ZM765.8 179.1 L767.5 180.0 L765.4 180.7 L763.7 179.8 ZM763.7 179.8 L765.4 180.7 L763.3 181.4 L761.6 180.5 ZM761.6 180.5 L763.3 181.4 L761.2 182.2 L759.5 181.2 ZM689.2 205.1 L690.7 206.4 L687.7 207.4 L686.3 206.1 ZM686.3 206.1 L687.7 207.4 L684.7 208.5 L683.2 207.1 ZM683.2 207.1 L684.7 208.5 L681.6 209.5 L680.2 208.1 ZM680.2 208.1 L681.6 209.5 L678.5 210.6 L677.1 209.2 ZM677.1 209.2 L678.5 210.6 L675.3 211.7 L674.0 210.2 ZM771.6 178.6 L773.4 179.5 L771.4 180.2 L769.6 179.3 ZM769.6 179.3 L771.4 180.2 L769.3 181.0 L767.5 180.0 ZM767.5 180.0 L769.3 181.0 L767.2 181.7 L765.4 180.7 ZM765.4 180.7 L767.2 181.7 L765.1 182.4 L763.3 181.4 ZM687.7 207.4 L689.2 208.8 L686.1 209.9 L684.7 208.5 ZM684.7 208.5 L686.1 209.9 L683.0 211.0 L681.6 209.5 ZM681.6 209.5 L683.0 211.0 L679.9 212.0 L678.5 210.6 ZM678.5 210.6 L679.9 212.0 L676.7 213.1 L675.3 211.7 ZM778.9 182.4 L780.8 183.4 L778.7 184.2 L776.9 183.2 ZM776.9 183.2 L778.7 184.2 L776.7 184.9 L774.8 183.9 ZM687.5 215.4 L689.1 216.9 L685.9 218.1 L684.3 216.5 ZM684.3 216.5 L685.9 218.1 L682.6 219.2 L681.1 217.7 ZM780.8 183.4 L782.7 184.4 L780.7 185.2 L778.7 184.2 ZM689.1 216.9 L690.6 218.4 L687.4 219.6 L685.9 218.1 ZM685.9 218.1 L687.4 219.6 L684.2 220.8 L682.6 219.2 ZM782.7 184.4 L784.7 185.4 L782.6 186.2 L780.7 185.2 ZM687.4 219.6 L689.0 221.2 L685.7 222.5 L684.2 220.8 ZM784.7 185.4 L786.6 186.5 L784.6 187.2 L782.6 186.2 ZM689.0 221.2 L690.6 222.9 L687.3 224.1 L685.7 222.5 ZM786.6 186.5 L788.6 187.5 L786.6 188.3 L784.6 187.2 ZM690.6 222.9 L692.2 224.5 L688.9 225.8 L687.3 224.1 ZM788.6 187.5 L790.7 188.6 L788.6 189.4 L786.6 188.3 ZM692.2 224.5 L693.9 226.2 L690.6 227.5 L688.9 225.8 ZM790.7 188.6 L792.7 189.6 L790.6 190.5 L788.6 189.4 ZM693.9 226.2 L695.6 228.0 L692.3 229.3 L690.6 227.5 ZM801.3 194.1 L803.5 195.3 L801.4 196.2 L799.2 195.0 ZM702.8 235.2 L704.7 237.1 L701.2 238.6 L699.3 236.6 ZM803.5 195.3 L805.8 196.5 L803.7 197.4 L801.4 196.2 ZM704.7 237.1 L706.6 239.0 L703.1 240.5 L701.2 238.6 ZM805.8 196.5 L808.1 197.7 L806.0 198.6 L803.7 197.4 ZM706.6 239.0 L708.5 241.0 L705.0 242.5 L703.1 240.5 ZM808.1 197.7 L810.4 198.9 L808.3 199.8 L806.0 198.6 ZM708.5 241.0 L710.5 243.0 L707.0 244.6 L705.0 242.5 ZM810.4 198.9 L812.8 200.1 L810.7 201.1 L808.3 199.8 ZM710.5 243.0 L712.5 245.1 L709.0 246.7 L707.0 244.6 ZM812.8 200.1 L815.2 201.4 L813.1 202.3 L810.7 201.1 ZM810.7 201.1 L813.1 202.3 L810.9 203.3 L808.5 202.0 ZM716.0 243.5 L718.1 245.6 L714.6 247.2 L712.5 245.1 ZM712.5 245.1 L714.6 247.2 L711.1 248.8 L709.0 246.7 ZM815.2 201.4 L817.6 202.7 L815.5 203.6 L813.1 202.3 ZM813.1 202.3 L815.5 203.6 L813.4 204.6 L810.9 203.3 ZM718.1 245.6 L720.3 247.7 L716.7 249.3 L714.6 247.2 ZM714.6 247.2 L716.7 249.3 L713.2 251.0 L711.1 248.8 ZM811.2 205.6 L813.7 207.0 L811.5 208.0 L809.0 206.6 ZM825.2 206.6 L827.8 208.0 L825.7 209.0 L823.1 207.6 ZM823.1 207.6 L825.7 209.0 L823.6 210.1 L821.0 208.7 ZM821.0 208.7 L823.6 210.1 L821.4 211.2 L818.8 209.7 ZM818.8 209.7 L821.4 211.2 L819.2 212.2 L816.6 210.8 ZM733.9 250.9 L736.3 253.2 L732.8 254.9 L730.5 252.6 ZM730.5 252.6 L732.8 254.9 L729.3 256.6 L727.0 254.3 ZM727.0 254.3 L729.3 256.6 L725.7 258.4 L723.4 256.1 ZM723.4 256.1 L725.7 258.4 L722.0 260.2 L719.7 257.8 ZM827.8 208.0 L830.5 209.4 L828.4 210.4 L825.7 209.0 ZM825.7 209.0 L828.4 210.4 L826.2 211.5 L823.6 210.1 ZM823.6 210.1 L826.2 211.5 L824.1 212.6 L821.4 211.2 ZM821.4 211.2 L824.1 212.6 L821.9 213.7 L819.2 212.2 ZM819.2 212.2 L821.9 213.7 L819.6 214.8 L817.0 213.3 ZM817.0 213.3 L819.6 214.8 L817.4 216.0 L814.7 214.5 ZM743.1 249.8 L745.5 252.0 L742.2 253.7 L739.7 251.5 ZM739.7 251.5 L742.2 253.7 L738.7 255.4 L736.3 253.2 ZM736.3 253.2 L738.7 255.4 L735.2 257.2 L732.8 254.9 ZM732.8 254.9 L735.2 257.2 L731.7 259.0 L729.3 256.6 ZM729.3 256.6 L731.7 259.0 L728.1 260.8 L725.7 258.4 ZM725.7 258.4 L728.1 260.8 L724.4 262.7 L722.0 260.2 ZM830.5 209.4 L833.2 210.8 L831.1 211.9 L828.4 210.4 ZM828.4 210.4 L831.1 211.9 L828.9 213.0 L826.2 211.5 ZM826.2 211.5 L828.9 213.0 L826.8 214.1 L824.1 212.6 ZM824.1 212.6 L826.8 214.1 L824.6 215.2 L821.9 213.7 ZM821.9 213.7 L824.6 215.2 L822.3 216.3 L819.6 214.8 ZM819.6 214.8 L822.3 216.3 L820.1 217.5 L817.4 216.0 ZM745.5 252.0 L748.1 254.3 L744.7 256.0 L742.2 253.7 ZM742.2 253.7 L744.7 256.0 L741.2 257.8 L738.7 255.4 ZM738.7 255.4 L741.2 257.8 L737.7 259.6 L735.2 257.2 ZM735.2 257.2 L737.7 259.6 L734.1 261.4 L731.7 259.0 ZM731.7 259.0 L734.1 261.4 L730.5 263.3 L728.1 260.8 ZM833.2 210.8 L835.9 212.2 L833.8 213.3 L831.1 211.9 ZM831.1 211.9 L833.8 213.3 L831.7 214.4 L828.9 213.0 ZM828.9 213.0 L831.7 214.4 L829.5 215.6 L826.8 214.1 ZM826.8 214.1 L829.5 215.6 L827.3 216.7 L824.6 215.2 ZM824.6 215.2 L827.3 216.7 L825.1 217.9 L822.3 216.3 ZM822.3 216.3 L825.1 217.9 L822.8 219.0 L820.1 217.5 ZM820.1 217.5 L822.8 219.0 L820.5 220.2 L817.8 218.7 ZM761.1 247.6 L763.7 249.8 L760.5 251.4 L757.9 249.2 ZM751.4 252.6 L754.0 254.8 L750.6 256.6 L748.1 254.3 ZM748.1 254.3 L750.6 256.6 L747.2 258.3 L744.7 256.0 ZM744.7 256.0 L747.2 258.3 L743.7 260.2 L741.2 257.8 ZM741.2 257.8 L743.7 260.2 L740.2 262.0 L737.7 259.6 ZM737.7 259.6 L740.2 262.0 L736.6 263.9 L734.1 261.4 ZM734.1 261.4 L736.6 263.9 L732.9 265.8 L730.5 263.3 ZM835.9 212.2 L838.7 213.7 L836.6 214.8 L833.8 213.3 ZM833.8 213.3 L836.6 214.8 L834.5 215.9 L831.7 214.4 ZM831.7 214.4 L834.5 215.9 L832.3 217.1 L829.5 215.6 ZM829.5 215.6 L832.3 217.1 L830.1 218.2 L827.3 216.7 ZM827.3 216.7 L830.1 218.2 L827.9 219.4 L825.1 217.9 ZM825.1 217.9 L827.9 219.4 L825.6 220.6 L822.8 219.0 ZM822.8 219.0 L825.6 220.6 L823.3 221.8 L820.5 220.2 ZM754.0 254.8 L756.6 257.1 L753.2 258.9 L750.6 256.6 ZM750.6 256.6 L753.2 258.9 L749.8 260.7 L747.2 258.3 ZM747.2 258.3 L749.8 260.7 L746.3 262.6 L743.7 260.2 ZM743.7 260.2 L746.3 262.6 L742.8 264.5 L740.2 262.0 ZM740.2 262.0 L742.8 264.5 L739.1 266.4 L736.6 263.9 ZM732.9 265.8 L735.5 268.3 L731.7 270.3 L729.2 267.7 ZM838.7 213.7 L841.6 215.2 L839.5 216.3 L836.6 214.8 ZM836.6 214.8 L839.5 216.3 L837.3 217.5 L834.5 215.9 ZM834.5 215.9 L837.3 217.5 L835.1 218.6 L832.3 217.1 ZM832.3 217.1 L835.1 218.6 L832.9 219.8 L830.1 218.2 ZM830.1 218.2 L832.9 219.8 L830.7 221.0 L827.9 219.4 ZM827.9 219.4 L830.7 221.0 L828.4 222.2 L825.6 220.6 ZM825.6 220.6 L828.4 222.2 L826.2 223.5 L823.3 221.8 ZM816.2 225.6 L819.1 227.3 L816.6 228.6 L813.8 226.9 ZM769.5 250.3 L772.3 252.5 L769.1 254.2 L766.4 252.0 ZM756.6 257.1 L759.3 259.5 L755.9 261.3 L753.2 258.9 ZM753.2 258.9 L755.9 261.3 L752.5 263.2 L749.8 260.7 ZM749.8 260.7 L752.5 263.2 L749.0 265.1 L746.3 262.6 ZM746.3 262.6 L749.0 265.1 L745.4 267.0 L742.8 264.5 ZM739.1 266.4 L741.8 268.9 L738.1 270.9 L735.5 268.3 ZM735.5 268.3 L738.1 270.9 L734.3 273.0 L731.7 270.3 ZM841.6 215.2 L844.5 216.7 L842.4 217.8 L839.5 216.3 ZM839.5 216.3 L842.4 217.8 L840.2 219.0 L837.3 217.5 ZM837.3 217.5 L840.2 219.0 L838.0 220.2 L835.1 218.6 ZM819.1 227.3 L822.0 229.0 L819.5 230.4 L816.6 228.6 ZM816.6 228.6 L819.5 230.4 L817.1 231.7 L814.2 229.9 ZM814.2 229.9 L817.1 231.7 L814.6 233.1 L811.7 231.3 ZM811.7 231.3 L814.6 233.1 L812.0 234.5 L809.1 232.7 ZM809.1 232.7 L812.0 234.5 L809.4 235.9 L806.5 234.0 ZM806.5 234.0 L809.4 235.9 L806.8 237.4 L803.9 235.5 ZM803.9 235.5 L806.8 237.4 L804.1 238.8 L801.3 236.9 ZM790.2 242.8 L793.1 244.9 L790.2 246.5 L787.3 244.4 ZM787.3 244.4 L790.2 246.5 L787.3 248.1 L784.4 246.0 ZM784.4 246.0 L787.3 248.1 L784.3 249.7 L781.5 247.6 ZM781.5 247.6 L784.3 249.7 L781.3 251.4 L778.4 249.2 ZM778.4 249.2 L781.3 251.4 L778.2 253.0 L775.4 250.8 ZM775.4 250.8 L778.2 253.0 L775.1 254.8 L772.3 252.5 ZM772.3 252.5 L775.1 254.8 L771.9 256.5 L769.1 254.2 ZM759.3 259.5 L762.0 261.9 L758.6 263.8 L755.9 261.3 ZM755.9 261.3 L758.6 263.8 L755.2 265.7 L752.5 263.2 ZM752.5 263.2 L755.2 265.7 L751.7 267.6 L749.0 265.1 ZM749.0 265.1 L751.7 267.6 L748.1 269.6 L745.4 267.0 ZM741.8 268.9 L744.4 271.6 L740.7 273.6 L738.1 270.9 ZM738.1 270.9 L740.7 273.6 L736.9 275.7 L734.3 273.0 Z" fill="#5f7" stroke="#5f7" stroke-width="0.5"/><path d="M757.3 174.5 L759.0 175.4 L756.9 176.1 L755.3 175.2 ZM755.3 175.2 L756.9 176.1 L754.9 176.8 L753.2 175.9 ZM690.8 195.9 L692.1 197.1 L689.3 198.0 L688.0 196.8 ZM686.5 199.0 L687.9 200.2 L685.0 201.2 L683.6 199.9 ZM747.4 182.2 L749.1 183.2 L746.9 183.9 L745.2 182.9 ZM674.4 206.4 L675.7 207.8 L672.6 208.8 L671.3 207.4 ZM675.7 207.8 L677.1 209.2 L674.0 210.2 L672.6 208.8 ZM759.5 181.2 L761.2 182.2 L759.1 182.9 L757.3 181.9 ZM692.2 204.1 L693.6 205.4 L690.7 206.4 L689.2 205.1 ZM770.8 183.7 L772.7 184.7 L770.6 185.4 L768.7 184.4 ZM692.2 211.7 L693.7 213.1 L690.7 214.2 L689.1 212.8 ZM727.1 244.5 L729.4 246.6 L725.9 248.2 L723.7 246.1 ZM721.1 253.8 L723.4 256.1 L719.7 257.8 L717.5 255.5 ZM728.1 260.8 L730.5 263.3 L726.8 265.1 L724.4 262.7 ZM813.1 221.0 L815.8 222.7 L813.4 223.9 L810.7 222.3 ZM730.5 263.3 L732.9 265.8 L729.2 267.7 L726.8 265.1 ZM736.6 263.9 L739.1 266.4 L735.5 268.3 L732.9 265.8 ZM742.8 264.5 L745.4 267.0 L741.8 268.9 L739.1 266.4 ZM835.1 218.6 L838.0 220.2 L835.8 221.4 L832.9 219.8 ZM832.9 219.8 L835.8 221.4 L833.6 222.6 L830.7 221.0 ZM830.7 221.0 L833.6 222.6 L831.3 223.9 L828.4 222.2 ZM828.4 222.2 L831.3 223.9 L829.0 225.1 L826.2 223.5 ZM745.4 267.0 L748.1 269.6 L744.4 271.6 L741.8 268.9 Z" fill="#6f7" stroke="#6f7" stroke-width="0.5"/><path d="M746.9 177.9 L748.5 178.8 L746.3 179.5 L744.7 178.6 ZM748.5 178.8 L750.1 179.8 L748.0 180.5 L746.3 179.5 ZM692.1 197.1 L693.6 198.3 L690.7 199.3 L689.3 198.0 ZM750.1 179.8 L751.8 180.7 L749.6 181.4 L748.0 180.5 ZM693.6 198.3 L695.0 199.6 L692.2 200.5 L690.7 199.3 ZM755.6 181.0 L757.3 181.9 L755.2 182.7 L753.5 181.7 ZM763.3 181.4 L765.1 182.4 L763.0 183.2 L761.2 182.2 ZM690.7 206.4 L692.2 207.8 L689.2 208.8 L687.7 207.4 ZM773.4 179.5 L775.2 180.5 L773.2 181.2 L771.4 180.2 ZM771.4 180.2 L773.2 181.2 L771.1 181.9 L769.3 181.0 ZM769.3 181.0 L771.1 181.9 L769.0 182.7 L767.2 181.7 ZM686.1 209.9 L687.6 211.3 L684.5 212.4 L683.0 211.0 ZM683.0 211.0 L684.5 212.4 L681.4 213.5 L679.9 212.0 ZM679.9 212.0 L681.4 213.5 L678.2 214.6 L676.7 213.1 ZM822.6 205.3 L825.2 206.6 L823.1 207.6 L820.5 206.3 ZM820.5 206.3 L823.1 207.6 L821.0 208.7 L818.4 207.3 ZM728.2 250.4 L730.5 252.6 L727.0 254.3 L724.7 252.1 ZM724.7 252.1 L727.0 254.3 L723.4 256.1 L721.1 253.8 ZM816.6 210.8 L819.2 212.2 L817.0 213.3 L814.4 211.9 ZM737.3 249.3 L739.7 251.5 L736.3 253.2 L733.9 250.9 ZM817.4 216.0 L820.1 217.5 L817.8 218.7 L815.1 217.1 ZM748.9 250.4 L751.4 252.6 L748.1 254.3 L745.5 252.0 ZM820.5 220.2 L823.3 221.8 L821.0 223.1 L818.2 221.4 ZM823.3 221.8 L826.2 223.5 L823.8 224.7 L821.0 223.1 ZM759.9 255.4 L762.6 257.7 L759.3 259.5 L756.6 257.1 ZM826.2 223.5 L829.0 225.1 L826.7 226.4 L823.8 224.7 ZM762.6 257.7 L765.4 260.1 L762.0 261.9 L759.3 259.5 Z" fill="#6e7" stroke="#6e7" stroke-width="0.5"/><path d="M744.7 178.6 L746.3 179.5 L744.2 180.2 L742.6 179.3 Z" fill="#be2" stroke="#be2" stroke-width="0.5"/><path d="M742.6 179.3 L744.2 180.2 L742.0 181.0 L740.4 180.0 ZM696.2 194.2 L697.7 195.3 L694.9 196.2 L693.5 195.0 ZM694.9 196.2 L696.3 197.4 L693.6 198.3 L692.1 197.1 ZM748.0 180.5 L749.6 181.4 L747.4 182.2 L745.8 181.2 ZM696.3 197.4 L697.8 198.6 L695.0 199.6 L693.6 198.3 ZM749.6 181.4 L751.3 182.4 L749.1 183.2 L747.4 182.2 ZM697.8 198.6 L699.3 199.9 L696.5 200.8 L695.0 199.6 ZM753.5 181.7 L755.2 182.7 L753.0 183.4 L751.3 182.4 ZM696.5 200.8 L697.9 202.1 L695.1 203.1 L693.6 201.8 ZM765.1 182.4 L766.9 183.4 L764.8 184.2 L763.0 183.2 ZM692.2 207.8 L693.7 209.2 L690.7 210.2 L689.2 208.8 ZM769.0 182.7 L770.8 183.7 L768.7 184.4 L766.9 183.4 ZM690.7 210.2 L692.2 211.7 L689.1 212.8 L687.6 211.3 ZM687.6 211.3 L689.1 212.8 L686.0 213.9 L684.5 212.4 ZM777.0 181.4 L778.9 182.4 L776.9 183.2 L775.0 182.2 ZM682.8 215.0 L684.3 216.5 L681.1 217.7 L679.6 216.1 ZM817.6 202.7 L820.1 204.0 L818.0 204.9 L815.5 203.6 ZM818.0 204.9 L820.5 206.3 L818.4 207.3 L815.9 206.0 ZM815.9 206.0 L818.4 207.3 L816.2 208.3 L813.7 207.0 ZM813.7 207.0 L816.2 208.3 L814.0 209.4 L811.5 208.0 ZM729.4 246.6 L731.6 248.8 L728.2 250.4 L725.9 248.2 ZM725.9 248.2 L728.2 250.4 L724.7 252.1 L722.4 249.9 ZM722.4 249.9 L724.7 252.1 L721.1 253.8 L718.9 251.5 ZM814.0 209.4 L816.6 210.8 L814.4 211.9 L811.8 210.5 ZM735.0 247.1 L737.3 249.3 L733.9 250.9 L731.6 248.8 ZM815.1 217.1 L817.8 218.7 L815.4 219.8 L812.8 218.3 ZM752.1 248.7 L754.7 250.9 L751.4 252.6 L748.9 250.4 ZM815.4 219.8 L818.2 221.4 L815.8 222.7 L813.1 221.0 ZM757.9 249.2 L760.5 251.4 L757.3 253.1 L754.7 250.9 ZM818.2 221.4 L821.0 223.1 L818.6 224.3 L815.8 222.7 ZM821.0 223.1 L823.8 224.7 L821.5 226.0 L818.6 224.3 ZM821.5 226.0 L824.4 227.7 L822.0 229.0 L819.1 227.3 ZM769.1 254.2 L771.9 256.5 L768.7 258.3 L765.9 255.9 Z" fill="#ad2" stroke="#ad2" stroke-width="0.5"/><path d="M724.3 185.2 L725.8 186.2 L723.4 187.0 L721.9 185.9 ZM721.9 185.9 L723.4 187.0 L720.9 187.8 L719.4 186.7 ZM719.4 186.7 L720.9 187.8 L718.5 188.6 L717.0 187.5 ZM717.0 187.5 L718.5 188.6 L716.0 189.4 L714.5 188.3 ZM714.5 188.3 L716.0 189.4 L713.5 190.2 L712.0 189.1 ZM737.5 182.4 L739.1 183.4 L736.8 184.2 L735.2 183.2 ZM735.2 183.2 L736.8 184.2 L734.5 184.9 L732.9 183.9 ZM732.9 183.9 L734.5 184.9 L732.1 185.7 L730.5 184.7 ZM730.5 184.7 L732.1 185.7 L729.7 186.5 L728.2 185.4 ZM728.2 185.4 L729.7 186.5 L727.4 187.2 L725.8 186.2 ZM716.0 189.4 L717.5 190.5 L715.0 191.3 L713.5 190.2 ZM713.5 190.2 L715.0 191.3 L712.4 192.2 L710.9 191.0 ZM710.9 191.0 L712.4 192.2 L709.8 193.0 L708.3 191.9 ZM708.3 191.9 L709.8 193.0 L707.2 193.9 L705.7 192.7 ZM705.7 192.7 L707.2 193.9 L704.5 194.7 L703.1 193.6 ZM743.6 181.9 L745.2 182.9 L743.0 183.7 L741.3 182.7 ZM741.3 182.7 L743.0 183.7 L740.7 184.4 L739.1 183.4 ZM704.5 194.7 L706.0 195.9 L703.3 196.8 L701.8 195.6 ZM701.8 195.6 L703.3 196.8 L700.6 197.7 L699.1 196.5 ZM749.1 183.2 L750.8 184.2 L748.5 184.9 L746.9 183.9 ZM702.1 198.9 L703.6 200.2 L700.8 201.1 L699.3 199.9 ZM753.0 183.4 L754.7 184.4 L752.5 185.2 L750.8 184.2 ZM700.8 201.1 L702.3 202.4 L699.4 203.4 L697.9 202.1 ZM699.4 203.4 L701.0 204.7 L698.1 205.7 L696.6 204.4 ZM764.8 184.2 L766.6 185.2 L764.4 185.9 L762.6 184.9 ZM696.7 208.1 L698.2 209.5 L695.2 210.6 L693.7 209.2 ZM768.7 184.4 L770.6 185.4 L768.4 186.2 L766.6 185.2 ZM695.2 210.6 L696.8 212.0 L693.7 213.1 L692.2 211.7 ZM774.8 183.9 L776.7 184.9 L774.6 185.7 L772.7 184.7 ZM693.7 213.1 L695.3 214.6 L692.2 215.7 L690.7 214.2 ZM690.7 214.2 L692.2 215.7 L689.1 216.9 L687.5 215.4 ZM778.7 184.2 L780.7 185.2 L778.6 185.9 L776.7 184.9 ZM692.2 215.7 L693.8 217.3 L690.6 218.4 L689.1 216.9 ZM780.7 185.2 L782.6 186.2 L780.5 187.0 L778.6 185.9 ZM690.6 218.4 L692.2 220.0 L689.0 221.2 L687.4 219.6 ZM782.6 186.2 L784.6 187.2 L782.5 188.0 L780.5 187.0 ZM692.2 220.0 L693.9 221.6 L690.6 222.9 L689.0 221.2 ZM784.6 187.2 L786.6 188.3 L784.5 189.1 L782.5 188.0 ZM693.9 221.6 L695.5 223.3 L692.2 224.5 L690.6 222.9 ZM786.6 188.3 L788.6 189.4 L786.5 190.2 L784.5 189.1 ZM695.5 223.3 L697.2 224.9 L693.9 226.2 L692.2 224.5 ZM788.6 189.4 L790.6 190.5 L788.5 191.3 L786.5 190.2 ZM697.2 224.9 L698.9 226.6 L695.6 228.0 L693.9 226.2 ZM792.7 189.6 L794.8 190.7 L792.7 191.6 L790.6 190.5 ZM695.6 228.0 L697.4 229.7 L694.0 231.1 L692.3 229.3 ZM794.8 190.7 L796.9 191.8 L794.9 192.7 L792.7 191.6 ZM697.4 229.7 L699.1 231.5 L695.7 232.9 L694.0 231.1 ZM796.9 191.8 L799.1 193.0 L797.0 193.8 L794.9 192.7 ZM699.1 231.5 L700.9 233.3 L697.5 234.7 L695.7 232.9 ZM799.1 193.0 L801.3 194.1 L799.2 195.0 L797.0 193.8 ZM700.9 233.3 L702.8 235.2 L699.3 236.6 L697.5 234.7 ZM799.2 195.0 L801.4 196.2 L799.3 197.1 L797.1 195.9 ZM706.2 233.8 L708.1 235.7 L704.7 237.1 L702.8 235.2 ZM801.4 196.2 L803.7 197.4 L801.6 198.3 L799.3 197.1 ZM708.1 235.7 L710.0 237.6 L706.6 239.0 L704.7 237.1 ZM803.7 197.4 L806.0 198.6 L803.8 199.5 L801.6 198.3 ZM710.0 237.6 L712.0 239.5 L708.5 241.0 L706.6 239.0 ZM806.0 198.6 L808.3 199.8 L806.2 200.8 L803.8 199.5 ZM712.0 239.5 L714.0 241.5 L710.5 243.0 L708.5 241.0 ZM808.3 199.8 L810.7 201.1 L808.5 202.0 L806.2 200.8 ZM714.0 241.5 L716.0 243.5 L712.5 245.1 L710.5 243.0 ZM810.9 203.3 L813.4 204.6 L811.2 205.6 L808.8 204.3 ZM725.0 242.5 L727.1 244.5 L723.7 246.1 L721.6 244.0 ZM721.6 244.0 L723.7 246.1 L720.3 247.7 L718.1 245.6 ZM809.0 206.6 L811.5 208.0 L809.3 209.0 L806.8 207.7 ZM730.5 243.0 L732.7 245.0 L729.4 246.6 L727.1 244.5 ZM809.3 209.0 L811.8 210.5 L809.6 211.5 L807.0 210.1 ZM736.0 243.5 L738.3 245.6 L735.0 247.1 L732.7 245.0 ZM809.8 214.1 L812.4 215.6 L810.1 216.7 L807.5 215.2 ZM810.1 216.7 L812.8 218.3 L810.4 219.5 L807.8 217.9 ZM752.9 245.0 L755.4 247.1 L752.1 248.7 L749.7 246.6 ZM810.4 219.5 L813.1 221.0 L810.7 222.3 L808.0 220.7 ZM758.5 245.5 L761.1 247.6 L757.9 249.2 L755.4 247.1 ZM813.4 223.9 L816.2 225.6 L813.8 226.9 L811.0 225.2 ZM811.0 225.2 L813.8 226.9 L811.3 228.2 L808.6 226.5 ZM766.9 248.1 L769.5 250.3 L766.4 252.0 L763.7 249.8 ZM813.8 226.9 L816.6 228.6 L814.2 229.9 L811.3 228.2 ZM811.3 228.2 L814.2 229.9 L811.7 231.3 L808.8 229.5 ZM808.8 229.5 L811.7 231.3 L809.1 232.7 L806.3 230.8 ZM806.3 230.8 L809.1 232.7 L806.5 234.0 L803.7 232.2 ZM803.7 232.2 L806.5 234.0 L803.9 235.5 L801.1 233.6 ZM801.1 233.6 L803.9 235.5 L801.3 236.9 L798.5 235.0 ZM787.4 240.8 L790.2 242.8 L787.3 244.4 L784.6 242.3 ZM784.6 242.3 L787.3 244.4 L784.4 246.0 L781.7 243.9 ZM781.7 243.9 L784.4 246.0 L781.5 247.6 L778.7 245.4 ZM778.7 245.4 L781.5 247.6 L778.4 249.2 L775.7 247.0 ZM775.7 247.0 L778.4 249.2 L775.4 250.8 L772.6 248.7 ZM772.6 248.7 L775.4 250.8 L772.3 252.5 L769.5 250.3 ZM801.3 236.9 L804.1 238.8 L801.4 240.3 L798.6 238.3 ZM798.6 238.3 L801.4 240.3 L798.7 241.8 L795.8 239.8 ZM795.8 239.8 L798.7 241.8 L795.9 243.3 L793.0 241.3 ZM793.0 241.3 L795.9 243.3 L793.1 244.9 L790.2 242.8 Z" fill="#5f6" stroke="#5f6" stroke-width="0.5"/><path d="M693.5 195.0 L694.9 196.2 L692.1 197.1 L690.8 195.9 ZM746.3 179.5 L748.0 180.5 L745.8 181.2 L744.2 180.2 ZM775.2 180.5 L777.0 181.4 L775.0 182.2 L773.2 181.2 ZM773.2 181.2 L775.0 182.2 L772.9 182.9 L771.1 181.9 ZM771.1 181.9 L772.9 182.9 L770.8 183.7 L769.0 182.7 ZM684.5 212.4 L686.0 213.9 L682.8 215.0 L681.4 213.5 ZM681.4 213.5 L682.8 215.0 L679.6 216.1 L678.2 214.6 ZM716.7 249.3 L718.9 251.5 L715.3 253.2 L713.2 251.0 ZM820.1 204.0 L822.6 205.3 L820.5 206.3 L818.0 204.9 ZM718.9 251.5 L721.1 253.8 L717.5 255.5 L715.3 253.2 ZM760.5 251.4 L763.2 253.7 L759.9 255.4 L757.3 253.1 ZM763.2 253.7 L765.9 255.9 L762.6 257.7 L759.9 255.4 ZM823.8 224.7 L826.7 226.4 L824.4 227.7 L821.5 226.0 ZM765.9 255.9 L768.7 258.3 L765.4 260.1 L762.6 257.7 Z" fill="#ae2" stroke="#ae2" stroke-width="0.5"/><path d="M744.2 180.2 L745.8 181.2 L743.6 181.9 L742.0 181.0 ZM697.7 195.3 L699.1 196.5 L696.3 197.4 L694.9 196.2 ZM751.8 180.7 L753.5 181.7 L751.3 182.4 L749.6 181.4 ZM695.0 199.6 L696.5 200.8 L693.6 201.8 L692.2 200.5 ZM757.3 181.9 L759.1 182.9 L756.9 183.7 L755.2 182.7 ZM695.1 203.1 L696.6 204.4 L693.6 205.4 L692.2 204.1 ZM767.2 181.7 L769.0 182.7 L766.9 183.4 L765.1 182.4 ZM689.2 208.8 L690.7 210.2 L687.6 211.3 L686.1 209.9 ZM775.0 182.2 L776.9 183.2 L774.8 183.9 L772.9 182.9 ZM686.0 213.9 L687.5 215.4 L684.3 216.5 L682.8 215.0 ZM815.5 203.6 L818.0 204.9 L815.9 206.0 L813.4 204.6 ZM720.3 247.7 L722.4 249.9 L718.9 251.5 L716.7 249.3 ZM816.2 208.3 L818.8 209.7 L816.6 210.8 L814.0 209.4 ZM731.6 248.8 L733.9 250.9 L730.5 252.6 L728.2 250.4 ZM817.8 218.7 L820.5 220.2 L818.2 221.4 L815.4 219.8 ZM754.7 250.9 L757.3 253.1 L754.0 254.8 L751.4 252.6 ZM818.6 224.3 L821.5 226.0 L819.1 227.3 L816.2 225.6 ZM766.4 252.0 L769.1 254.2 L765.9 255.9 L763.2 253.7 Z" fill="#9d2" stroke="#9d2" stroke-width="0.5"/><path d="M725.8 186.2 L727.4 187.2 L724.9 188.0 L723.4 187.0 ZM703.3 196.8 L704.8 198.0 L702.1 198.9 L700.6 197.7 ZM704.3 232.0 L706.2 233.8 L702.8 235.2 L700.9 233.3 ZM806.2 200.8 L808.5 202.0 L806.4 203.0 L804.0 201.7 ZM764.2 246.0 L766.9 248.1 L763.7 249.8 L761.1 247.6 ZM769.9 246.5 L772.6 248.7 L769.5 250.3 L766.9 248.1 ZM798.5 235.0 L801.3 236.9 L798.6 238.3 L795.8 236.4 ZM790.2 239.3 L793.0 241.3 L790.2 242.8 L787.4 240.8 Z" fill="#4f5" stroke="#4f5" stroke-width="0.5"/><path d="M723.4 187.0 L724.9 188.0 L722.5 188.8 L720.9 187.8 ZM720.9 187.8 L722.5 188.8 L720.0 189.7 L718.5 188.6 ZM729.7 186.5 L731.3 187.5 L728.9 188.3 L727.4 187.2 ZM743.0 183.7 L744.6 184.7 L742.3 185.4 L740.7 184.4 ZM706.0 195.9 L707.5 197.1 L704.8 198.0 L703.3 196.8 ZM750.8 184.2 L752.5 185.2 L750.2 185.9 L748.5 184.9 ZM766.6 185.2 L768.4 186.2 L766.3 187.0 L764.4 185.9 ZM698.2 209.5 L699.8 210.9 L696.8 212.0 L695.2 210.6 ZM696.8 212.0 L698.4 213.5 L695.3 214.6 L693.7 213.1 ZM774.6 185.7 L776.5 186.7 L774.3 187.5 L772.4 186.5 ZM695.3 214.6 L696.9 216.1 L693.8 217.3 L692.2 215.7 ZM751.8 203.7 L753.8 205.0 L751.2 206.0 L749.3 204.7 ZM744.1 206.7 L746.0 208.1 L743.4 209.1 L741.5 207.7 ZM756.3 204.0 L758.3 205.3 L755.8 206.3 L753.8 205.0 ZM743.4 209.1 L745.3 210.5 L742.6 211.6 L740.7 210.2 ZM792.7 191.6 L794.9 192.7 L792.8 193.5 L790.6 192.4 ZM758.3 205.3 L760.4 206.7 L757.8 207.7 L755.8 206.3 ZM700.7 228.4 L702.5 230.2 L699.1 231.5 L697.4 229.7 ZM794.9 192.7 L797.0 193.8 L794.9 194.7 L792.8 193.5 ZM760.4 206.7 L762.4 208.1 L759.9 209.1 L757.8 207.7 ZM702.5 230.2 L704.3 232.0 L700.9 233.3 L699.1 231.5 ZM762.4 208.1 L764.5 209.4 L762.0 210.5 L759.9 209.1 ZM749.4 213.4 L751.4 214.9 L748.7 216.0 L746.6 214.5 ZM759.4 211.6 L761.5 213.0 L758.9 214.2 L756.8 212.7 ZM756.8 212.7 L758.9 214.2 L756.2 215.3 L754.1 213.8 ZM754.1 213.8 L756.2 215.3 L753.5 216.4 L751.4 214.9 ZM806.4 203.0 L808.8 204.3 L806.6 205.3 L804.2 204.0 ZM722.8 240.5 L725.0 242.5 L721.6 244.0 L719.5 242.0 ZM806.8 207.7 L809.3 209.0 L807.0 210.1 L804.6 208.7 ZM756.0 243.4 L758.5 245.5 L755.4 247.1 L752.9 245.0 ZM808.0 220.7 L810.7 222.3 L808.3 223.5 L805.6 221.9 ZM808.3 223.5 L811.0 225.2 L808.6 226.5 L805.8 224.8 ZM767.3 244.4 L769.9 246.5 L766.9 248.1 L764.2 246.0 ZM798.3 231.8 L801.1 233.6 L798.5 235.0 L795.7 233.1 ZM793.0 237.9 L795.8 239.8 L793.0 241.3 L790.2 239.3 Z" fill="#2f3" stroke="#2f3" stroke-width="0.5"/><path d="M718.5 188.6 L720.0 189.7 L717.5 190.5 L716.0 189.4 ZM736.8 184.2 L738.4 185.2 L736.1 185.9 L734.5 184.9 ZM734.5 184.9 L736.1 185.9 L733.7 186.7 L732.1 185.7 ZM732.1 185.7 L733.7 186.7 L731.3 187.5 L729.7 186.5 ZM715.0 191.3 L716.5 192.4 L713.9 193.3 L712.4 192.2 ZM712.4 192.2 L713.9 193.3 L711.3 194.2 L709.8 193.0 ZM709.8 193.0 L711.3 194.2 L708.7 195.0 L707.2 193.9 ZM707.2 193.9 L708.7 195.0 L706.0 195.9 L704.5 194.7 ZM770.6 185.4 L772.4 186.5 L770.3 187.2 L768.4 186.2 ZM778.6 185.9 L780.5 187.0 L778.4 187.8 L776.5 186.7 ZM693.8 217.3 L695.4 218.8 L692.2 220.0 L690.6 218.4 ZM780.5 187.0 L782.5 188.0 L780.4 188.8 L778.4 187.8 ZM782.5 188.0 L784.5 189.1 L782.3 189.9 L780.4 188.8 ZM697.1 220.4 L698.7 222.0 L695.5 223.3 L693.9 221.6 ZM784.5 189.1 L786.5 190.2 L784.4 191.0 L782.3 189.9 ZM698.7 222.0 L700.5 223.7 L697.2 224.9 L695.5 223.3 ZM790.6 190.5 L792.7 191.6 L790.6 192.4 L788.5 191.3 ZM753.8 205.0 L755.8 206.3 L753.2 207.4 L751.2 206.0 ZM746.0 208.1 L748.0 209.5 L745.3 210.5 L743.4 209.1 ZM698.9 226.6 L700.7 228.4 L697.4 229.7 L695.6 228.0 ZM797.0 193.8 L799.2 195.0 L797.1 195.9 L794.9 194.7 ZM752.0 212.3 L754.1 213.8 L751.4 214.9 L749.4 213.4 ZM799.3 197.1 L801.6 198.3 L799.4 199.2 L797.2 198.0 ZM711.4 234.2 L713.4 236.1 L710.0 237.6 L708.1 235.7 ZM801.6 198.3 L803.8 199.5 L801.7 200.4 L799.4 199.2 ZM713.4 236.1 L715.3 238.0 L712.0 239.5 L710.0 237.6 ZM803.8 199.5 L806.2 200.8 L804.0 201.7 L801.7 200.4 ZM715.3 238.0 L717.4 240.0 L714.0 241.5 L712.0 239.5 ZM717.4 240.0 L719.5 242.0 L716.0 243.5 L714.0 241.5 ZM806.6 205.3 L809.0 206.6 L806.8 207.7 L804.4 206.3 ZM728.3 241.0 L730.5 243.0 L727.1 244.5 L725.0 242.5 ZM808.6 226.5 L811.3 228.2 L808.8 229.5 L806.1 227.8 ZM806.1 227.8 L808.8 229.5 L806.3 230.8 L803.5 229.1 ZM803.5 229.1 L806.3 230.8 L803.7 232.2 L800.9 230.4 ZM800.9 230.4 L803.7 232.2 L801.1 233.6 L798.3 231.8 ZM781.8 240.3 L784.6 242.3 L781.7 243.9 L778.9 241.9 ZM778.9 241.9 L781.7 243.9 L778.7 245.4 L776.0 243.4 ZM773.0 244.9 L775.7 247.0 L772.6 248.7 L769.9 246.5 Z" fill="#3f4" stroke="#3f4" stroke-width="0.5"/><path d="M745.8 181.2 L747.4 182.2 L745.2 182.9 L743.6 181.9 ZM751.3 182.4 L753.0 183.4 L750.8 184.2 L749.1 183.2 ZM763.0 183.2 L764.8 184.2 L762.6 184.9 L760.8 183.9 ZM695.2 206.7 L696.7 208.1 L693.7 209.2 L692.2 207.8 ZM766.9 183.4 L768.7 184.4 L766.6 185.2 L764.8 184.2 ZM772.9 182.9 L774.8 183.9 L772.7 184.7 L770.8 183.7 ZM689.1 212.8 L690.7 214.2 L687.5 215.4 L686.0 213.9 ZM813.4 204.6 L815.9 206.0 L813.7 207.0 L811.2 205.6 ZM723.7 246.1 L725.9 248.2 L722.4 249.9 L720.3 247.7 ZM811.8 210.5 L814.4 211.9 L812.1 213.0 L809.6 211.5 ZM738.3 245.6 L740.7 247.7 L737.3 249.3 L735.0 247.1 ZM812.8 218.3 L815.4 219.8 L813.1 221.0 L810.4 219.5 ZM755.4 247.1 L757.9 249.2 L754.7 250.9 L752.1 248.7 ZM815.8 222.7 L818.6 224.3 L816.2 225.6 L813.4 223.9 ZM763.7 249.8 L766.4 252.0 L763.2 253.7 L760.5 251.4 Z" fill="#7e5" stroke="#7e5" stroke-width="0.5"/><path d="M739.1 183.4 L740.7 184.4 L738.4 185.2 L736.8 184.2 Z" fill="#3f5" stroke="#3f5" stroke-width="0.5"/><path d="M727.4 187.2 L728.9 188.3 L726.5 189.1 L724.9 188.0 ZM720.0 189.7 L721.6 190.8 L719.0 191.6 L717.5 190.5 ZM738.4 185.2 L740.0 186.2 L737.7 187.0 L736.1 185.9 ZM736.1 185.9 L737.7 187.0 L735.3 187.8 L733.7 186.7 ZM711.3 194.2 L712.8 195.3 L710.2 196.2 L708.7 195.0 ZM707.5 197.1 L709.0 198.3 L706.3 199.3 L704.8 198.0 ZM752.5 185.2 L754.2 186.2 L752.0 187.0 L750.2 185.9 ZM764.4 185.9 L766.3 187.0 L764.1 187.8 L762.2 186.7 ZM701.2 208.5 L702.8 209.9 L699.8 210.9 L698.2 209.5 ZM778.4 187.8 L780.4 188.8 L778.2 189.6 L776.3 188.6 ZM735.0 206.0 L736.9 207.4 L734.2 208.4 L732.3 207.0 ZM754.9 200.5 L756.8 201.7 L754.3 202.7 L752.4 201.4 ZM736.9 207.4 L738.8 208.8 L736.1 209.8 L734.2 208.4 ZM738.0 211.3 L739.9 212.7 L737.1 213.8 L735.2 212.3 ZM702.2 225.4 L704.0 227.1 L700.7 228.4 L698.9 226.6 ZM707.6 230.6 L709.5 232.4 L706.2 233.8 L704.3 232.0 ZM769.6 207.4 L771.7 208.7 L769.2 209.8 L767.1 208.4 ZM769.2 209.8 L771.4 211.2 L768.9 212.3 L766.7 210.9 ZM755.7 218.0 L757.9 219.5 L755.1 220.7 L752.9 219.1 ZM752.9 219.1 L755.1 220.7 L752.3 222.0 L750.1 220.3 ZM801.7 200.4 L804.0 201.7 L801.8 202.7 L799.5 201.4 ZM804.6 208.7 L807.0 210.1 L804.8 211.2 L802.3 209.8 ZM807.3 212.6 L809.8 214.1 L807.5 215.2 L805.0 213.7 ZM805.4 219.1 L808.0 220.7 L805.6 221.9 L803.0 220.3 ZM805.6 221.9 L808.3 223.5 L805.8 224.8 L803.1 223.1 ZM764.7 242.4 L767.3 244.4 L764.2 246.0 L761.7 243.9 ZM803.3 226.0 L806.1 227.8 L803.5 229.1 L800.8 227.3 ZM800.8 227.3 L803.5 229.1 L800.9 230.4 L798.2 228.6 ZM787.5 237.4 L790.2 239.3 L787.4 240.8 L784.7 238.9 Z" fill="#1d1" stroke="#1d1" stroke-width="0.5"/><path d="M724.9 188.0 L726.5 189.1 L724.0 189.9 L722.5 188.8 ZM722.5 188.8 L724.0 189.9 L721.6 190.8 L720.0 189.7 ZM731.3 187.5 L732.9 188.6 L730.5 189.4 L728.9 188.3 ZM742.3 185.4 L744.0 186.5 L741.7 187.2 L740.0 186.2 ZM740.0 186.2 L741.7 187.2 L739.3 188.0 L737.7 187.0 ZM712.8 195.3 L714.4 196.5 L711.7 197.4 L710.2 196.2 ZM710.2 196.2 L711.7 197.4 L709.0 198.3 L707.5 197.1 ZM744.0 186.5 L745.7 187.5 L743.4 188.3 L741.7 187.2 ZM714.4 196.5 L716.0 197.7 L713.3 198.6 L711.7 197.4 ZM711.7 197.4 L713.3 198.6 L710.6 199.6 L709.0 198.3 ZM709.0 198.3 L710.6 199.6 L707.9 200.5 L706.3 199.3 ZM748.0 186.7 L749.7 187.8 L747.4 188.6 L745.7 187.5 ZM745.7 187.5 L747.4 188.6 L745.1 189.4 L743.4 188.3 ZM716.0 197.7 L717.6 198.9 L714.9 199.9 L713.3 198.6 ZM713.3 198.6 L714.9 199.9 L712.2 200.8 L710.6 199.6 ZM710.6 199.6 L712.2 200.8 L709.4 201.8 L707.9 200.5 ZM707.9 200.5 L709.4 201.8 L706.7 202.7 L705.1 201.5 ZM756.5 185.4 L758.2 186.5 L756.0 187.2 L754.2 186.2 ZM754.2 186.2 L756.0 187.2 L753.7 188.0 L752.0 187.0 ZM752.0 187.0 L753.7 188.0 L751.5 188.8 L749.7 187.8 ZM749.7 187.8 L751.5 188.8 L749.1 189.7 L747.4 188.6 ZM747.4 188.6 L749.1 189.7 L746.8 190.5 L745.1 189.4 ZM714.9 199.9 L716.5 201.1 L713.8 202.1 L712.2 200.8 ZM712.2 200.8 L713.8 202.1 L711.0 203.1 L709.4 201.8 ZM753.7 188.0 L755.5 189.1 L753.2 189.9 L751.5 188.8 ZM751.5 188.8 L753.2 189.9 L750.9 190.7 L749.1 189.7 ZM749.1 189.7 L750.9 190.7 L748.6 191.6 L746.8 190.5 ZM719.2 200.2 L720.9 201.4 L718.2 202.4 L716.5 201.1 ZM716.5 201.1 L718.2 202.4 L715.4 203.4 L713.8 202.1 ZM713.8 202.1 L715.4 203.4 L712.7 204.4 L711.0 203.1 ZM705.4 205.0 L707.0 206.4 L704.1 207.4 L702.5 206.1 ZM702.5 206.1 L704.1 207.4 L701.2 208.5 L699.6 207.1 ZM755.5 189.1 L757.3 190.2 L755.0 191.0 L753.2 189.9 ZM753.2 189.9 L755.0 191.0 L752.7 191.9 L750.9 190.7 ZM750.9 190.7 L752.7 191.9 L750.4 192.7 L748.6 191.6 ZM748.6 191.6 L750.4 192.7 L748.0 193.6 L746.2 192.4 ZM720.9 201.4 L722.6 202.7 L719.9 203.7 L718.2 202.4 ZM718.2 202.4 L719.9 203.7 L717.1 204.7 L715.4 203.4 ZM715.4 203.4 L717.1 204.7 L714.3 205.7 L712.7 204.4 ZM707.0 206.4 L708.6 207.8 L705.7 208.8 L704.1 207.4 ZM757.3 190.2 L759.2 191.3 L756.9 192.1 L755.0 191.0 ZM755.0 191.0 L756.9 192.1 L754.5 193.0 L752.7 191.9 ZM752.7 191.9 L754.5 193.0 L752.2 193.9 L750.4 192.7 ZM750.4 192.7 L752.2 193.9 L749.8 194.7 L748.0 193.6 ZM722.6 202.7 L724.3 204.0 L721.6 205.0 L719.9 203.7 ZM719.9 203.7 L721.6 205.0 L718.8 206.0 L717.1 204.7 ZM717.1 204.7 L718.8 206.0 L716.0 207.1 L714.3 205.7 ZM714.3 205.7 L716.0 207.1 L713.2 208.1 L711.5 206.7 ZM768.1 188.0 L770.0 189.1 L767.8 189.9 L765.9 188.8 ZM765.9 188.8 L767.8 189.9 L765.6 190.7 L763.7 189.6 ZM763.7 189.6 L765.6 190.7 L763.3 191.6 L761.4 190.5 ZM761.4 190.5 L763.3 191.6 L761.0 192.4 L759.2 191.3 ZM759.2 191.3 L761.0 192.4 L758.7 193.3 L756.9 192.1 ZM756.9 192.1 L758.7 193.3 L756.4 194.1 L754.5 193.0 ZM754.5 193.0 L756.4 194.1 L754.0 195.0 L752.2 193.9 ZM752.2 193.9 L754.0 195.0 L751.6 195.9 L749.8 194.7 ZM749.8 194.7 L751.6 195.9 L749.2 196.8 L747.4 195.6 ZM747.4 195.6 L749.2 196.8 L746.8 197.7 L744.9 196.5 ZM729.6 202.1 L731.4 203.4 L728.7 204.4 L727.0 203.1 ZM727.0 203.1 L728.7 204.4 L726.0 205.4 L724.3 204.0 ZM724.3 204.0 L726.0 205.4 L723.3 206.4 L721.6 205.0 ZM721.6 205.0 L723.3 206.4 L720.5 207.4 L718.8 206.0 ZM718.8 206.0 L720.5 207.4 L717.7 208.4 L716.0 207.1 ZM716.0 207.1 L717.7 208.4 L714.9 209.5 L713.2 208.1 ZM713.2 208.1 L714.9 209.5 L712.0 210.6 L710.3 209.1 ZM710.3 209.1 L712.0 210.6 L709.0 211.6 L707.4 210.2 ZM707.4 210.2 L709.0 211.6 L706.1 212.7 L704.4 211.3 ZM704.4 211.3 L706.1 212.7 L703.1 213.9 L701.4 212.4 ZM701.4 212.4 L703.1 213.9 L700.0 215.0 L698.4 213.5 ZM774.3 187.5 L776.3 188.6 L774.1 189.4 L772.2 188.3 ZM772.2 188.3 L774.1 189.4 L771.9 190.2 L770.0 189.1 ZM770.0 189.1 L771.9 190.2 L769.7 191.0 L767.8 189.9 ZM767.8 189.9 L769.7 191.0 L767.5 191.9 L765.6 190.7 ZM765.6 190.7 L767.5 191.9 L765.2 192.7 L763.3 191.6 ZM763.3 191.6 L765.2 192.7 L762.9 193.6 L761.0 192.4 ZM761.0 192.4 L762.9 193.6 L760.6 194.4 L758.7 193.3 ZM758.7 193.3 L760.6 194.4 L758.3 195.3 L756.4 194.1 ZM756.4 194.1 L758.3 195.3 L755.9 196.2 L754.0 195.0 ZM754.0 195.0 L755.9 196.2 L753.5 197.1 L751.6 195.9 ZM751.6 195.9 L753.5 197.1 L751.1 198.0 L749.2 196.8 ZM749.2 196.8 L751.1 198.0 L748.6 198.9 L746.8 197.7 ZM746.8 197.7 L748.6 198.9 L746.1 199.9 L744.3 198.6 ZM744.3 198.6 L746.1 199.9 L743.6 200.8 L741.8 199.5 ZM741.8 199.5 L743.6 200.8 L741.1 201.7 L739.2 200.5 ZM739.2 200.5 L741.1 201.7 L738.5 202.7 L736.7 201.4 ZM736.7 201.4 L738.5 202.7 L735.9 203.7 L734.0 202.4 ZM734.0 202.4 L735.9 203.7 L733.2 204.7 L731.4 203.4 ZM731.4 203.4 L733.2 204.7 L730.5 205.7 L728.7 204.4 ZM728.7 204.4 L730.5 205.7 L727.8 206.7 L726.0 205.4 ZM726.0 205.4 L727.8 206.7 L725.1 207.7 L723.3 206.4 ZM723.3 206.4 L725.1 207.7 L722.3 208.8 L720.5 207.4 ZM720.5 207.4 L722.3 208.8 L719.4 209.8 L717.7 208.4 ZM717.7 208.4 L719.4 209.8 L716.6 210.9 L714.9 209.5 ZM714.9 209.5 L716.6 210.9 L713.7 212.0 L712.0 210.6 ZM712.0 210.6 L713.7 212.0 L710.7 213.1 L709.0 211.6 ZM709.0 211.6 L710.7 213.1 L707.8 214.2 L706.1 212.7 ZM706.1 212.7 L707.8 214.2 L704.7 215.3 L703.1 213.9 ZM703.1 213.9 L704.7 215.3 L701.7 216.5 L700.0 215.0 ZM700.0 215.0 L701.7 216.5 L698.6 217.7 L696.9 216.1 ZM771.9 190.2 L773.9 191.3 L771.7 192.1 L769.7 191.0 ZM769.7 191.0 L771.7 192.1 L769.4 193.0 L767.5 191.9 ZM767.5 191.9 L769.4 193.0 L767.1 193.8 L765.2 192.7 ZM765.2 192.7 L767.1 193.8 L764.9 194.7 L762.9 193.6 ZM762.9 193.6 L764.9 194.7 L762.5 195.6 L760.6 194.4 ZM760.6 194.4 L762.5 195.6 L760.2 196.5 L758.3 195.3 ZM758.3 195.3 L760.2 196.5 L757.8 197.4 L755.9 196.2 ZM755.9 196.2 L757.8 197.4 L755.4 198.3 L753.5 197.1 ZM753.5 197.1 L755.4 198.3 L753.0 199.2 L751.1 198.0 ZM746.1 199.9 L748.0 201.1 L745.5 202.1 L743.6 200.8 ZM743.6 200.8 L745.5 202.1 L742.9 203.0 L741.1 201.7 ZM741.1 201.7 L742.9 203.0 L740.3 204.0 L738.5 202.7 ZM738.5 202.7 L740.3 204.0 L737.7 205.0 L735.9 203.7 ZM727.8 206.7 L729.6 208.1 L726.8 209.1 L725.1 207.7 ZM725.1 207.7 L726.8 209.1 L724.0 210.2 L722.3 208.8 ZM722.3 208.8 L724.0 210.2 L721.2 211.3 L719.4 209.8 ZM719.4 209.8 L721.2 211.3 L718.3 212.4 L716.6 210.9 ZM716.6 210.9 L718.3 212.4 L715.4 213.5 L713.7 212.0 ZM713.7 212.0 L715.4 213.5 L712.5 214.6 L710.7 213.1 ZM710.7 213.1 L712.5 214.6 L709.5 215.7 L707.8 214.2 ZM707.8 214.2 L709.5 215.7 L706.4 216.9 L704.7 215.3 ZM704.7 215.3 L706.4 216.9 L703.4 218.0 L701.7 216.5 ZM701.7 216.5 L703.4 218.0 L700.2 219.2 L698.6 217.7 ZM762.5 195.6 L764.5 196.8 L762.1 197.7 L760.2 196.5 ZM760.2 196.5 L762.1 197.7 L759.7 198.6 L757.8 197.4 ZM726.8 209.1 L728.7 210.5 L725.9 211.6 L724.0 210.2 ZM724.0 210.2 L725.9 211.6 L723.0 212.7 L721.2 211.3 ZM764.5 196.8 L766.5 198.0 L764.1 198.9 L762.1 197.7 ZM762.1 197.7 L764.1 198.9 L761.7 199.8 L759.7 198.6 ZM728.7 210.5 L730.5 212.0 L727.7 213.1 L725.9 211.6 ZM764.1 198.9 L766.1 200.2 L763.7 201.1 L761.7 199.8 ZM730.5 212.0 L732.4 213.4 L729.6 214.6 L727.7 213.1 ZM703.7 222.4 L705.4 224.1 L702.2 225.4 L700.5 223.7 ZM766.1 200.2 L768.1 201.4 L765.7 202.4 L763.7 201.1 ZM763.7 201.1 L765.7 202.4 L763.3 203.3 L761.3 202.1 ZM732.4 213.4 L734.3 214.9 L731.5 216.1 L729.6 214.6 ZM790.6 192.4 L792.8 193.5 L790.6 194.4 L788.5 193.3 ZM765.7 202.4 L767.8 203.7 L765.3 204.7 L763.3 203.3 ZM753.2 207.4 L755.3 208.8 L752.6 209.8 L750.6 208.4 ZM750.6 208.4 L752.6 209.8 L750.0 210.9 L748.0 209.5 ZM734.3 214.9 L736.3 216.4 L733.4 217.6 L731.5 216.1 ZM704.0 227.1 L705.8 228.8 L702.5 230.2 L700.7 228.4 ZM792.8 193.5 L794.9 194.7 L792.8 195.6 L790.6 194.4 ZM767.8 203.7 L769.9 205.0 L767.4 206.0 L765.3 204.7 ZM755.3 208.8 L757.3 210.2 L754.7 211.2 L752.6 209.8 ZM752.6 209.8 L754.7 211.2 L752.0 212.3 L750.0 210.9 ZM739.1 215.3 L741.1 216.8 L738.3 218.0 L736.3 216.4 ZM705.8 228.8 L707.6 230.6 L704.3 232.0 L702.5 230.2 ZM772.3 204.0 L774.4 205.3 L772.0 206.3 L769.9 205.0 ZM769.9 205.0 L772.0 206.3 L769.6 207.4 L767.4 206.0 ZM741.1 216.8 L743.1 218.4 L740.3 219.6 L738.3 218.0 ZM738.3 218.0 L740.3 219.6 L737.4 220.8 L735.4 219.2 ZM794.9 196.8 L797.2 198.0 L795.0 198.9 L792.8 197.7 ZM774.4 205.3 L776.6 206.7 L774.2 207.7 L772.0 206.3 ZM740.3 219.6 L742.3 221.2 L739.4 222.4 L737.4 220.8 ZM712.8 231.0 L714.7 232.8 L711.4 234.2 L709.5 232.4 ZM779.0 205.7 L781.2 207.0 L778.8 208.0 L776.6 206.7 ZM776.6 206.7 L778.8 208.0 L776.4 209.1 L774.2 207.7 ZM742.3 221.2 L744.4 222.8 L741.5 224.0 L739.4 222.4 ZM739.4 222.4 L741.5 224.0 L738.6 225.3 L736.5 223.6 ZM781.2 207.0 L783.5 208.4 L781.1 209.4 L778.8 208.0 ZM778.8 208.0 L781.1 209.4 L778.6 210.5 L776.4 209.1 ZM744.4 222.8 L746.6 224.4 L743.7 225.7 L741.5 224.0 ZM741.5 224.0 L743.7 225.7 L740.7 227.0 L738.6 225.3 ZM799.5 201.4 L801.8 202.7 L799.6 203.6 L797.3 202.4 ZM797.3 202.4 L799.6 203.6 L797.4 204.6 L795.1 203.3 ZM792.8 204.3 L795.1 205.6 L792.8 206.7 L790.5 205.3 ZM785.9 207.3 L788.2 208.7 L785.8 209.8 L783.5 208.4 ZM783.5 208.4 L785.8 209.8 L783.4 210.8 L781.1 209.4 ZM781.1 209.4 L783.4 210.8 L780.9 211.9 L778.6 210.5 ZM778.6 210.5 L780.9 211.9 L778.4 213.0 L776.1 211.6 ZM768.5 214.9 L770.8 216.4 L768.1 217.6 L765.9 216.0 ZM765.9 216.0 L768.1 217.6 L765.5 218.7 L763.3 217.2 ZM763.3 217.2 L765.5 218.7 L762.8 219.9 L760.6 218.3 ZM760.6 218.3 L762.8 219.9 L760.1 221.1 L757.9 219.5 ZM749.5 223.2 L751.6 224.9 L748.8 226.1 L746.6 224.4 ZM746.6 224.4 L748.8 226.1 L745.8 227.4 L743.7 225.7 ZM743.7 225.7 L745.8 227.4 L742.8 228.7 L740.7 227.0 ZM740.7 227.0 L742.8 228.7 L739.8 230.1 L737.7 228.3 ZM737.7 228.3 L739.8 230.1 L736.8 231.4 L734.6 229.6 ZM725.2 233.7 L727.3 235.6 L724.0 237.1 L722.0 235.2 ZM722.0 235.2 L724.0 237.1 L720.7 238.5 L718.7 236.6 ZM801.8 202.7 L804.2 204.0 L802.0 205.0 L799.6 203.6 ZM799.6 203.6 L802.0 205.0 L799.7 206.0 L797.4 204.6 ZM797.4 204.6 L799.7 206.0 L797.5 207.0 L795.1 205.6 ZM795.1 205.6 L797.5 207.0 L795.2 208.0 L792.8 206.7 ZM792.8 206.7 L795.2 208.0 L792.8 209.1 L790.5 207.7 ZM790.5 207.7 L792.8 209.1 L790.5 210.1 L788.2 208.7 ZM788.2 208.7 L790.5 210.1 L788.1 211.2 L785.8 209.8 ZM785.8 209.8 L788.1 211.2 L785.7 212.3 L783.4 210.8 ZM783.4 210.8 L785.7 212.3 L783.2 213.4 L780.9 211.9 ZM780.9 211.9 L783.2 213.4 L780.7 214.5 L778.4 213.0 ZM778.4 213.0 L780.7 214.5 L778.2 215.6 L775.9 214.1 ZM775.9 214.1 L778.2 215.6 L775.7 216.8 L773.4 215.3 ZM773.4 215.3 L775.7 216.8 L773.1 217.9 L770.8 216.4 ZM770.8 216.4 L773.1 217.9 L770.4 219.1 L768.1 217.6 ZM762.8 219.9 L765.1 221.5 L762.3 222.8 L760.1 221.1 ZM760.1 221.1 L762.3 222.8 L759.5 224.0 L757.3 222.4 ZM757.3 222.4 L759.5 224.0 L756.7 225.3 L754.5 223.6 ZM754.5 223.6 L756.7 225.3 L753.9 226.6 L751.6 224.9 ZM751.6 224.9 L753.9 226.6 L751.0 227.9 L748.8 226.1 ZM748.8 226.1 L751.0 227.9 L748.0 229.2 L745.8 227.4 ZM745.8 227.4 L748.0 229.2 L745.0 230.5 L742.8 228.7 ZM742.8 228.7 L745.0 230.5 L742.0 231.9 L739.8 230.1 ZM739.8 230.1 L742.0 231.9 L738.9 233.3 L736.8 231.4 ZM736.8 231.4 L738.9 233.3 L735.8 234.7 L733.7 232.8 ZM733.7 232.8 L735.8 234.7 L732.6 236.1 L730.5 234.2 ZM730.5 234.2 L732.6 236.1 L729.4 237.5 L727.3 235.6 ZM727.3 235.6 L729.4 237.5 L726.1 239.0 L724.0 237.1 ZM724.0 237.1 L726.1 239.0 L722.8 240.5 L720.7 238.5 ZM799.7 206.0 L802.1 207.3 L799.9 208.4 L797.5 207.0 ZM797.5 207.0 L799.9 208.4 L797.6 209.4 L795.2 208.0 ZM795.2 208.0 L797.6 209.4 L795.2 210.5 L792.8 209.1 ZM792.8 209.1 L795.2 210.5 L792.9 211.5 L790.5 210.1 ZM790.5 210.1 L792.9 211.5 L790.5 212.6 L788.1 211.2 ZM788.1 211.2 L790.5 212.6 L788.0 213.7 L785.7 212.3 ZM785.7 212.3 L788.0 213.7 L785.6 214.9 L783.2 213.4 ZM783.2 213.4 L785.6 214.9 L783.1 216.0 L780.7 214.5 ZM780.7 214.5 L783.1 216.0 L780.6 217.2 L778.2 215.6 ZM778.2 215.6 L780.6 217.2 L778.0 218.3 L775.7 216.8 ZM762.3 222.8 L764.6 224.4 L761.8 225.7 L759.5 224.0 ZM759.5 224.0 L761.8 225.7 L759.0 227.0 L756.7 225.3 ZM756.7 225.3 L759.0 227.0 L756.1 228.3 L753.9 226.6 ZM751.0 227.9 L753.2 229.6 L750.3 231.0 L748.0 229.2 ZM748.0 229.2 L750.3 231.0 L747.3 232.3 L745.0 230.5 ZM745.0 230.5 L747.3 232.3 L744.2 233.7 L742.0 231.9 ZM742.0 231.9 L744.2 233.7 L741.1 235.1 L738.9 233.3 ZM735.8 234.7 L738.0 236.5 L734.8 238.0 L732.6 236.1 ZM732.6 236.1 L734.8 238.0 L731.6 239.5 L729.4 237.5 ZM797.6 209.4 L800.0 210.8 L797.6 211.9 L795.2 210.5 ZM795.2 210.5 L797.6 211.9 L795.3 213.0 L792.9 211.5 ZM792.9 211.5 L795.3 213.0 L792.9 214.1 L790.5 212.6 ZM790.5 212.6 L792.9 214.1 L790.4 215.2 L788.0 213.7 ZM788.0 213.7 L790.4 215.2 L788.0 216.4 L785.6 214.9 ZM785.6 214.9 L788.0 216.4 L785.5 217.5 L783.1 216.0 ZM783.1 216.0 L785.5 217.5 L782.9 218.7 L780.6 217.2 ZM753.2 229.6 L755.5 231.4 L752.6 232.8 L750.3 231.0 ZM750.3 231.0 L752.6 232.8 L749.6 234.2 L747.3 232.3 ZM747.3 232.3 L749.6 234.2 L746.5 235.6 L744.2 233.7 ZM744.2 233.7 L746.5 235.6 L743.4 237.0 L741.1 235.1 ZM795.3 213.0 L797.7 214.5 L795.3 215.6 L792.9 214.1 ZM792.9 214.1 L795.3 215.6 L792.9 216.8 L790.4 215.2 ZM790.4 215.2 L792.9 216.8 L790.4 217.9 L788.0 216.4 ZM788.0 216.4 L790.4 217.9 L787.9 219.1 L785.5 217.5 ZM758.5 230.0 L760.8 231.8 L757.9 233.2 L755.5 231.4 ZM755.5 231.4 L757.9 233.2 L754.9 234.6 L752.6 232.8 ZM752.6 232.8 L754.9 234.6 L751.9 236.0 L749.6 234.2 ZM749.6 234.2 L751.9 236.0 L748.8 237.5 L746.5 235.6 ZM746.5 235.6 L748.8 237.5 L745.7 238.9 L743.4 237.0 ZM740.2 238.5 L742.5 240.4 L739.3 241.9 L737.0 240.0 ZM804.8 211.2 L807.3 212.6 L805.0 213.7 L802.4 212.3 ZM797.7 214.5 L800.2 216.0 L797.8 217.1 L795.3 215.6 ZM795.3 215.6 L797.8 217.1 L795.4 218.3 L792.9 216.8 ZM792.9 216.8 L795.4 218.3 L792.9 219.5 L790.4 217.9 ZM790.4 217.9 L792.9 219.5 L790.4 220.7 L787.9 219.1 ZM757.9 233.2 L760.3 235.1 L757.3 236.5 L754.9 234.6 ZM754.9 234.6 L757.3 236.5 L754.3 238.0 L751.9 236.0 ZM751.9 236.0 L754.3 238.0 L751.2 239.4 L748.8 237.5 ZM745.7 238.9 L748.0 240.9 L744.9 242.4 L742.5 240.4 ZM742.5 240.4 L744.9 242.4 L741.6 244.0 L739.3 241.9 ZM802.6 214.8 L805.2 216.4 L802.8 217.5 L800.2 216.0 ZM800.2 216.0 L802.8 217.5 L800.4 218.7 L797.8 217.1 ZM797.8 217.1 L800.4 218.7 L797.9 219.9 L795.4 218.3 ZM795.4 218.3 L797.9 219.9 L795.4 221.1 L792.9 219.5 ZM792.9 219.5 L795.4 221.1 L792.9 222.3 L790.4 220.7 ZM763.2 233.7 L765.7 235.5 L762.7 237.0 L760.3 235.1 ZM760.3 235.1 L762.7 237.0 L759.7 238.4 L757.3 236.5 ZM757.3 236.5 L759.7 238.4 L756.7 239.9 L754.3 238.0 ZM754.3 238.0 L756.7 239.9 L753.6 241.4 L751.2 239.4 ZM751.2 239.4 L753.6 241.4 L750.4 242.9 L748.0 240.9 ZM748.0 240.9 L750.4 242.9 L747.2 244.5 L744.9 242.4 ZM802.8 217.5 L805.4 219.1 L803.0 220.3 L800.4 218.7 ZM800.4 218.7 L803.0 220.3 L800.5 221.5 L797.9 219.9 ZM797.9 219.9 L800.5 221.5 L798.0 222.7 L795.4 221.1 ZM795.4 221.1 L798.0 222.7 L795.5 223.9 L792.9 222.3 ZM765.7 235.5 L768.2 237.4 L765.2 238.9 L762.7 237.0 ZM762.7 237.0 L765.2 238.9 L762.2 240.4 L759.7 238.4 ZM759.7 238.4 L762.2 240.4 L759.1 241.9 L756.7 239.9 ZM756.7 239.9 L759.1 241.9 L756.0 243.4 L753.6 241.4 ZM803.0 220.3 L805.6 221.9 L803.1 223.1 L800.5 221.5 ZM800.5 221.5 L803.1 223.1 L800.7 224.4 L798.0 222.7 ZM798.0 222.7 L800.7 224.4 L798.1 225.6 L795.5 223.9 ZM768.2 237.4 L770.7 239.4 L767.7 240.9 L765.2 238.9 ZM765.2 238.9 L767.7 240.9 L764.7 242.4 L762.2 240.4 ZM803.1 223.1 L805.8 224.8 L803.3 226.0 L800.7 224.4 ZM800.7 224.4 L803.3 226.0 L800.8 227.3 L798.1 225.6 ZM770.7 239.4 L773.3 241.4 L770.3 242.9 L767.7 240.9 ZM767.7 240.9 L770.3 242.9 L767.3 244.4 L764.7 242.4 ZM795.6 230.0 L798.3 231.8 L795.7 233.1 L793.0 231.3 ZM782.0 236.9 L784.7 238.9 L781.8 240.3 L779.2 238.4 ZM793.0 234.5 L795.8 236.4 L793.0 237.9 L790.3 236.0 ZM790.3 236.0 L793.0 237.9 L790.2 239.3 L787.5 237.4 Z" fill="#0c0" stroke="#0c0" stroke-width="0.5"/><path d="M717.5 190.5 L719.0 191.6 L716.5 192.4 L715.0 191.3 ZM786.5 190.2 L788.5 191.3 L786.4 192.1 L784.4 191.0 ZM700.5 223.7 L702.2 225.4 L698.9 226.6 L697.2 224.9 ZM751.2 206.0 L753.2 207.4 L750.6 208.4 L748.7 207.0 ZM748.7 207.0 L750.6 208.4 L748.0 209.5 L746.0 208.1 ZM755.8 206.3 L757.8 207.7 L755.3 208.8 L753.2 207.4 ZM754.7 211.2 L756.8 212.7 L754.1 213.8 L752.0 212.3 Z" fill="#1f2" stroke="#1f2" stroke-width="0.5"/><path d="M699.1 196.5 L700.6 197.7 L697.8 198.6 L696.3 197.4 ZM699.3 199.9 L700.8 201.1 L697.9 202.1 L696.5 200.8 ZM759.1 182.9 L760.8 183.9 L758.7 184.7 L756.9 183.7 ZM696.6 204.4 L698.1 205.7 L695.2 206.7 L693.6 205.4 ZM811.5 208.0 L814.0 209.4 L811.8 210.5 L809.3 209.0 ZM732.7 245.0 L735.0 247.1 L731.6 248.8 L729.4 246.6 ZM812.1 213.0 L814.7 214.5 L812.4 215.6 L809.8 214.1 ZM744.0 246.1 L746.4 248.2 L743.1 249.8 L740.7 247.7 Z" fill="#7e6" stroke="#7e6" stroke-width="0.5"/><path d="M745.2 182.9 L746.9 183.9 L744.6 184.7 L743.0 183.7 ZM756.9 183.7 L758.7 184.7 L756.5 185.4 L754.7 184.4 ZM760.8 183.9 L762.6 184.9 L760.4 185.7 L758.7 184.7 ZM698.1 205.7 L699.6 207.1 L696.7 208.1 L695.2 206.7 ZM772.7 184.7 L774.6 185.7 L772.4 186.5 L770.6 185.4 ZM776.7 184.9 L778.6 185.9 L776.5 186.7 L774.6 185.7 ZM808.5 202.0 L810.9 203.3 L808.8 204.3 L806.4 203.0 ZM719.5 242.0 L721.6 244.0 L718.1 245.6 L716.0 243.5 ZM808.8 204.3 L811.2 205.6 L809.0 206.6 L806.6 205.3 ZM809.6 211.5 L812.1 213.0 L809.8 214.1 L807.3 212.6 ZM741.6 244.0 L744.0 246.1 L740.7 247.7 L738.3 245.6 ZM747.2 244.5 L749.7 246.6 L746.4 248.2 L744.0 246.1 ZM810.7 222.3 L813.4 223.9 L811.0 225.2 L808.3 223.5 Z" fill="#4f6" stroke="#4f6" stroke-width="0.5"/><path d="M740.7 184.4 L742.3 185.4 L740.0 186.2 L738.4 185.2 ZM708.7 195.0 L710.2 196.2 L707.5 197.1 L706.0 195.9 ZM744.6 184.7 L746.3 185.7 L744.0 186.5 L742.3 185.4 ZM748.5 184.9 L750.2 185.9 L748.0 186.7 L746.3 185.7 ZM706.3 199.3 L707.9 200.5 L705.1 201.5 L703.6 200.2 ZM754.7 184.4 L756.5 185.4 L754.2 186.2 L752.5 185.2 ZM702.3 202.4 L703.8 203.7 L701.0 204.7 L699.4 203.4 ZM762.6 184.9 L764.4 185.9 L762.2 186.7 L760.4 185.7 ZM699.6 207.1 L701.2 208.5 L698.2 209.5 L696.7 208.1 ZM768.4 186.2 L770.3 187.2 L768.1 188.0 L766.3 187.0 ZM699.8 210.9 L701.4 212.4 L698.4 213.5 L696.8 212.0 ZM772.4 186.5 L774.3 187.5 L772.2 188.3 L770.3 187.2 ZM698.4 213.5 L700.0 215.0 L696.9 216.1 L695.3 214.6 ZM776.5 186.7 L778.4 187.8 L776.3 188.6 L774.3 187.5 ZM696.9 216.1 L698.6 217.7 L695.4 218.8 L693.8 217.3 ZM752.4 201.4 L754.3 202.7 L751.8 203.7 L749.9 202.4 ZM749.9 202.4 L751.8 203.7 L749.3 204.7 L747.4 203.4 ZM747.4 203.4 L749.3 204.7 L746.7 205.7 L744.8 204.3 ZM744.8 204.3 L746.7 205.7 L744.1 206.7 L742.2 205.3 ZM742.2 205.3 L744.1 206.7 L741.5 207.7 L739.6 206.4 ZM739.6 206.4 L741.5 207.7 L738.8 208.8 L736.9 207.4 ZM756.8 201.7 L758.8 203.0 L756.3 204.0 L754.3 202.7 ZM738.8 208.8 L740.7 210.2 L738.0 211.3 L736.1 209.8 ZM758.8 203.0 L760.8 204.3 L758.3 205.3 L756.3 204.0 ZM740.7 210.2 L742.6 211.6 L739.9 212.7 L738.0 211.3 ZM760.8 204.3 L762.9 205.7 L760.4 206.7 L758.3 205.3 ZM742.6 211.6 L744.6 213.1 L741.9 214.2 L739.9 212.7 ZM762.9 205.7 L765.0 207.0 L762.4 208.1 L760.4 206.7 ZM744.6 213.1 L746.6 214.5 L743.9 215.7 L741.9 214.2 ZM746.6 214.5 L748.7 216.0 L745.9 217.2 L743.9 215.7 ZM767.1 208.4 L769.2 209.8 L766.7 210.9 L764.5 209.4 ZM748.7 216.0 L750.8 217.6 L748.0 218.8 L745.9 217.2 ZM766.7 210.9 L768.9 212.3 L766.3 213.4 L764.1 211.9 ZM761.5 213.0 L763.7 214.5 L761.1 215.7 L758.9 214.2 ZM758.9 214.2 L761.1 215.7 L758.4 216.8 L756.2 215.3 ZM756.2 215.3 L758.4 216.8 L755.7 218.0 L753.5 216.4 ZM753.5 216.4 L755.7 218.0 L752.9 219.1 L750.8 217.6 ZM750.8 217.6 L752.9 219.1 L750.1 220.3 L748.0 218.8 ZM804.0 201.7 L806.4 203.0 L804.2 204.0 L801.8 202.7 ZM720.7 238.5 L722.8 240.5 L719.5 242.0 L717.4 240.0 ZM804.2 204.0 L806.6 205.3 L804.4 206.3 L802.0 205.0 ZM726.1 239.0 L728.3 241.0 L725.0 242.5 L722.8 240.5 ZM804.4 206.3 L806.8 207.7 L804.6 208.7 L802.1 207.3 ZM731.6 239.5 L733.8 241.5 L730.5 243.0 L728.3 241.0 ZM807.0 210.1 L809.6 211.5 L807.3 212.6 L804.8 211.2 ZM739.3 241.9 L741.6 244.0 L738.3 245.6 L736.0 243.5 ZM807.5 215.2 L810.1 216.7 L807.8 217.9 L805.2 216.4 ZM750.4 242.9 L752.9 245.0 L749.7 246.6 L747.2 244.5 ZM759.1 241.9 L761.7 243.9 L758.5 245.5 L756.0 243.4 ZM805.8 224.8 L808.6 226.5 L806.1 227.8 L803.3 226.0 ZM770.3 242.9 L773.0 244.9 L769.9 246.5 L767.3 244.4 ZM795.7 233.1 L798.5 235.0 L795.8 236.4 L793.0 234.5 Z" fill="#1e1" stroke="#1e1" stroke-width="0.5"/><path d="M733.7 186.7 L735.3 187.8 L732.9 188.6 L731.3 187.5 ZM713.9 193.3 L715.5 194.4 L712.8 195.3 L711.3 194.2 ZM746.3 185.7 L748.0 186.7 L745.7 187.5 L744.0 186.5 ZM750.2 185.9 L752.0 187.0 L749.7 187.8 L748.0 186.7 ZM705.1 201.5 L706.7 202.7 L703.8 203.7 L702.3 202.4 ZM758.7 184.7 L760.4 185.7 L758.2 186.5 L756.5 185.4 ZM706.7 202.7 L708.2 204.0 L705.4 205.0 L703.8 203.7 ZM703.8 203.7 L705.4 205.0 L702.5 206.1 L701.0 204.7 ZM701.0 204.7 L702.5 206.1 L699.6 207.1 L698.1 205.7 ZM758.2 186.5 L760.0 187.5 L757.8 188.3 L756.0 187.2 ZM711.0 203.1 L712.7 204.4 L709.9 205.4 L708.2 204.0 ZM708.2 204.0 L709.9 205.4 L707.0 206.4 L705.4 205.0 ZM762.2 186.7 L764.1 187.8 L761.8 188.6 L760.0 187.5 ZM760.0 187.5 L761.8 188.6 L759.6 189.4 L757.8 188.3 ZM757.8 188.3 L759.6 189.4 L757.3 190.2 L755.5 189.1 ZM709.9 205.4 L711.5 206.7 L708.6 207.8 L707.0 206.4 ZM766.3 187.0 L768.1 188.0 L765.9 188.8 L764.1 187.8 ZM764.1 187.8 L765.9 188.8 L763.7 189.6 L761.8 188.6 ZM761.8 188.6 L763.7 189.6 L761.4 190.5 L759.6 189.4 ZM711.5 206.7 L713.2 208.1 L710.3 209.1 L708.6 207.8 ZM708.6 207.8 L710.3 209.1 L707.4 210.2 L705.7 208.8 ZM705.7 208.8 L707.4 210.2 L704.4 211.3 L702.8 209.9 ZM702.8 209.9 L704.4 211.3 L701.4 212.4 L699.8 210.9 ZM770.3 187.2 L772.2 188.3 L770.0 189.1 L768.1 188.0 ZM751.1 198.0 L753.0 199.2 L750.5 200.2 L748.6 198.9 ZM748.6 198.9 L750.5 200.2 L748.0 201.1 L746.1 199.9 ZM735.9 203.7 L737.7 205.0 L735.0 206.0 L733.2 204.7 ZM733.2 204.7 L735.0 206.0 L732.3 207.0 L730.5 205.7 ZM730.5 205.7 L732.3 207.0 L729.6 208.1 L727.8 206.7 ZM698.6 217.7 L700.2 219.2 L697.1 220.4 L695.4 218.8 ZM780.4 188.8 L782.3 189.9 L780.2 190.7 L778.2 189.6 ZM755.4 198.3 L757.3 199.5 L754.9 200.5 L753.0 199.2 ZM753.0 199.2 L754.9 200.5 L752.4 201.4 L750.5 200.2 ZM750.5 200.2 L752.4 201.4 L749.9 202.4 L748.0 201.1 ZM748.0 201.1 L749.9 202.4 L747.4 203.4 L745.5 202.1 ZM745.5 202.1 L747.4 203.4 L744.8 204.3 L742.9 203.0 ZM742.9 203.0 L744.8 204.3 L742.2 205.3 L740.3 204.0 ZM740.3 204.0 L742.2 205.3 L739.6 206.4 L737.7 205.0 ZM737.7 205.0 L739.6 206.4 L736.9 207.4 L735.0 206.0 ZM732.3 207.0 L734.2 208.4 L731.4 209.5 L729.6 208.1 ZM729.6 208.1 L731.4 209.5 L728.7 210.5 L726.8 209.1 ZM700.2 219.2 L701.9 220.8 L698.7 222.0 L697.1 220.4 ZM759.7 198.6 L761.7 199.8 L759.3 200.8 L757.3 199.5 ZM757.3 199.5 L759.3 200.8 L756.8 201.7 L754.9 200.5 ZM734.2 208.4 L736.1 209.8 L733.3 210.9 L731.4 209.5 ZM731.4 209.5 L733.3 210.9 L730.5 212.0 L728.7 210.5 ZM701.9 220.8 L703.7 222.4 L700.5 223.7 L698.7 222.0 ZM761.7 199.8 L763.7 201.1 L761.3 202.1 L759.3 200.8 ZM759.3 200.8 L761.3 202.1 L758.8 203.0 L756.8 201.7 ZM736.1 209.8 L738.0 211.3 L735.2 212.3 L733.3 210.9 ZM733.3 210.9 L735.2 212.3 L732.4 213.4 L730.5 212.0 ZM788.5 191.3 L790.6 192.4 L788.5 193.3 L786.4 192.1 ZM761.3 202.1 L763.3 203.3 L760.8 204.3 L758.8 203.0 ZM735.2 212.3 L737.1 213.8 L734.3 214.9 L732.4 213.4 ZM763.3 203.3 L765.3 204.7 L762.9 205.7 L760.8 204.3 ZM739.9 212.7 L741.9 214.2 L739.1 215.3 L737.1 213.8 ZM737.1 213.8 L739.1 215.3 L736.3 216.4 L734.3 214.9 ZM765.3 204.7 L767.4 206.0 L765.0 207.0 L762.9 205.7 ZM741.9 214.2 L743.9 215.7 L741.1 216.8 L739.1 215.3 ZM794.9 194.7 L797.1 195.9 L794.9 196.8 L792.8 195.6 ZM767.4 206.0 L769.6 207.4 L767.1 208.4 L765.0 207.0 ZM743.9 215.7 L745.9 217.2 L743.1 218.4 L741.1 216.8 ZM772.0 206.3 L774.2 207.7 L771.7 208.7 L769.6 207.4 ZM745.9 217.2 L748.0 218.8 L745.2 220.0 L743.1 218.4 ZM743.1 218.4 L745.2 220.0 L742.3 221.2 L740.3 219.6 ZM797.2 198.0 L799.4 199.2 L797.2 200.1 L795.0 198.9 ZM774.2 207.7 L776.4 209.1 L773.9 210.1 L771.7 208.7 ZM771.7 208.7 L773.9 210.1 L771.4 211.2 L769.2 209.8 ZM748.0 218.8 L750.1 220.3 L747.3 221.6 L745.2 220.0 ZM745.2 220.0 L747.3 221.6 L744.4 222.8 L742.3 221.2 ZM714.7 232.8 L716.7 234.7 L713.4 236.1 L711.4 234.2 ZM799.4 199.2 L801.7 200.4 L799.5 201.4 L797.2 200.1 ZM776.4 209.1 L778.6 210.5 L776.1 211.6 L773.9 210.1 ZM773.9 210.1 L776.1 211.6 L773.6 212.7 L771.4 211.2 ZM771.4 211.2 L773.6 212.7 L771.1 213.8 L768.9 212.3 ZM768.9 212.3 L771.1 213.8 L768.5 214.9 L766.3 213.4 ZM766.3 213.4 L768.5 214.9 L765.9 216.0 L763.7 214.5 ZM763.7 214.5 L765.9 216.0 L763.3 217.2 L761.1 215.7 ZM761.1 215.7 L763.3 217.2 L760.6 218.3 L758.4 216.8 ZM758.4 216.8 L760.6 218.3 L757.9 219.5 L755.7 218.0 ZM750.1 220.3 L752.3 222.0 L749.5 223.2 L747.3 221.6 ZM747.3 221.6 L749.5 223.2 L746.6 224.4 L744.4 222.8 ZM716.7 234.7 L718.7 236.6 L715.3 238.0 L713.4 236.1 ZM776.1 211.6 L778.4 213.0 L775.9 214.1 L773.6 212.7 ZM773.6 212.7 L775.9 214.1 L773.4 215.3 L771.1 213.8 ZM771.1 213.8 L773.4 215.3 L770.8 216.4 L768.5 214.9 ZM755.1 220.7 L757.3 222.4 L754.5 223.6 L752.3 222.0 ZM752.3 222.0 L754.5 223.6 L751.6 224.9 L749.5 223.2 ZM718.7 236.6 L720.7 238.5 L717.4 240.0 L715.3 238.0 ZM802.0 205.0 L804.4 206.3 L802.1 207.3 L799.7 206.0 ZM729.4 237.5 L731.6 239.5 L728.3 241.0 L726.1 239.0 ZM802.1 207.3 L804.6 208.7 L802.3 209.8 L799.9 208.4 ZM802.3 209.8 L804.8 211.2 L802.4 212.3 L800.0 210.8 ZM800.0 210.8 L802.4 212.3 L800.1 213.4 L797.6 211.9 ZM797.6 211.9 L800.1 213.4 L797.7 214.5 L795.3 213.0 ZM737.0 240.0 L739.3 241.9 L736.0 243.5 L733.8 241.5 ZM802.4 212.3 L805.0 213.7 L802.6 214.8 L800.1 213.4 ZM748.8 237.5 L751.2 239.4 L748.0 240.9 L745.7 238.9 ZM744.9 242.4 L747.2 244.5 L744.0 246.1 L741.6 244.0 ZM805.2 216.4 L807.8 217.9 L805.4 219.1 L802.8 217.5 ZM753.6 241.4 L756.0 243.4 L752.9 245.0 L750.4 242.9 ZM762.2 240.4 L764.7 242.4 L761.7 243.9 L759.1 241.9 ZM798.2 228.6 L800.9 230.4 L798.3 231.8 L795.6 230.0 ZM776.3 239.9 L778.9 241.9 L776.0 243.4 L773.3 241.4 ZM773.3 241.4 L776.0 243.4 L773.0 244.9 L770.3 242.9 Z" fill="#0d1" stroke="#0d1" stroke-width="0.5"/><path d="M728.9 188.3 L730.5 189.4 L728.1 190.2 L726.5 189.1 ZM726.5 189.1 L728.1 190.2 L725.6 191.0 L724.0 189.9 ZM724.0 189.9 L725.6 191.0 L723.1 191.9 L721.6 190.8 ZM721.6 190.8 L723.1 191.9 L720.6 192.7 L719.0 191.6 ZM735.3 187.8 L737.0 188.8 L734.6 189.7 L732.9 188.6 ZM718.0 193.6 L719.6 194.7 L717.0 195.6 L715.5 194.4 ZM739.3 188.0 L741.0 189.1 L738.6 189.9 L737.0 188.8 ZM719.6 194.7 L721.2 195.9 L718.6 196.8 L717.0 195.6 ZM720.2 198.0 L721.9 199.2 L719.2 200.2 L717.6 198.9 ZM742.1 192.1 L743.8 193.3 L741.4 194.1 L739.6 193.0 ZM721.9 199.2 L723.6 200.5 L720.9 201.4 L719.2 200.2 ZM743.8 193.3 L745.6 194.4 L743.1 195.3 L741.4 194.1 ZM726.2 199.6 L727.9 200.8 L725.3 201.8 L723.6 200.5 ZM743.1 195.3 L744.9 196.5 L742.5 197.4 L740.7 196.2 ZM740.7 196.2 L742.5 197.4 L740.0 198.3 L738.2 197.1 ZM733.1 198.9 L734.9 200.2 L732.3 201.1 L730.5 199.9 ZM730.5 199.9 L732.3 201.1 L729.6 202.1 L727.9 200.8 ZM740.0 198.3 L741.8 199.5 L739.2 200.5 L737.4 199.2 ZM780.2 190.7 L782.2 191.9 L780.0 192.7 L778.0 191.6 ZM778.0 191.6 L780.0 192.7 L777.8 193.6 L775.8 192.4 ZM773.6 193.3 L775.6 194.4 L773.4 195.3 L771.4 194.1 ZM771.4 194.1 L773.4 195.3 L771.1 196.2 L769.1 195.0 ZM769.1 195.0 L771.1 196.2 L768.8 197.1 L766.8 195.9 ZM720.1 213.8 L721.9 215.3 L719.0 216.5 L717.2 215.0 ZM717.2 215.0 L719.0 216.5 L716.0 217.6 L714.2 216.1 ZM708.2 218.4 L709.9 220.0 L706.8 221.2 L705.1 219.6 ZM705.1 219.6 L706.8 221.2 L703.7 222.4 L701.9 220.8 ZM768.8 197.1 L770.8 198.3 L768.5 199.2 L766.5 198.0 ZM724.8 214.2 L726.7 215.7 L723.8 216.8 L721.9 215.3 ZM706.8 221.2 L708.6 222.8 L705.4 224.1 L703.7 222.4 ZM786.4 192.1 L788.5 193.3 L786.3 194.1 L784.3 193.0 ZM726.7 215.7 L728.6 217.2 L725.7 218.4 L723.8 216.8 ZM705.4 224.1 L707.2 225.8 L704.0 227.1 L702.2 225.4 ZM770.5 200.5 L772.6 201.7 L770.2 202.7 L768.1 201.4 ZM731.5 216.1 L733.4 217.6 L730.5 218.8 L728.6 217.2 ZM733.4 217.6 L735.4 219.2 L732.5 220.4 L730.5 218.8 ZM792.8 195.6 L794.9 196.8 L792.8 197.7 L790.6 196.5 ZM777.0 202.0 L779.2 203.3 L776.8 204.3 L774.7 203.0 ZM732.5 220.4 L734.5 222.0 L731.5 223.2 L729.5 221.6 ZM710.9 229.2 L712.8 231.0 L709.5 232.4 L707.6 230.6 ZM779.2 203.3 L781.4 204.6 L779.0 205.7 L776.8 204.3 ZM734.5 222.0 L736.5 223.6 L733.5 224.9 L731.5 223.2 ZM731.5 223.2 L733.5 224.9 L730.5 226.2 L728.5 224.5 ZM795.0 198.9 L797.2 200.1 L795.0 201.1 L792.8 199.8 ZM792.8 199.8 L795.0 201.1 L792.8 202.0 L790.6 200.8 ZM786.0 202.7 L788.3 204.0 L785.9 205.0 L783.7 203.7 ZM783.7 203.7 L785.9 205.0 L783.6 206.0 L781.4 204.6 ZM733.5 224.9 L735.6 226.6 L732.6 227.9 L730.5 226.2 ZM730.5 226.2 L732.6 227.9 L729.5 229.2 L727.4 227.5 ZM724.3 228.8 L726.3 230.6 L723.2 231.9 L721.2 230.1 ZM721.2 230.1 L723.2 231.9 L719.9 233.3 L718.0 231.5 ZM718.0 231.5 L719.9 233.3 L716.7 234.7 L714.7 232.8 ZM773.1 217.9 L775.4 219.5 L772.8 220.7 L770.4 219.1 ZM767.8 220.3 L770.1 221.9 L767.4 223.2 L765.1 221.5 ZM778.0 218.3 L780.4 219.9 L777.8 221.1 L775.4 219.5 ZM767.4 223.2 L769.7 224.8 L767.0 226.1 L764.6 224.4 ZM782.9 218.7 L785.4 220.3 L782.8 221.5 L780.4 219.9 ZM764.2 227.4 L766.6 229.1 L763.7 230.5 L761.3 228.7 ZM785.4 220.3 L787.9 221.9 L785.3 223.1 L782.8 221.5 ZM766.6 229.1 L769.0 230.9 L766.1 232.3 L763.7 230.5 ZM790.4 220.7 L792.9 222.3 L790.4 223.5 L787.9 221.9 ZM792.9 225.2 L795.6 226.9 L793.0 228.2 L790.4 226.5 ZM774.0 234.6 L776.5 236.5 L773.7 237.9 L771.1 236.0 ZM795.6 226.9 L798.2 228.6 L795.6 230.0 L793.0 228.2 ZM776.5 236.5 L779.2 238.4 L776.3 239.9 L773.7 237.9 ZM793.0 231.3 L795.7 233.1 L793.0 234.5 L790.3 232.7 ZM790.3 232.7 L793.0 234.5 L790.3 236.0 L787.6 234.1 ZM787.6 234.1 L790.3 236.0 L787.5 237.4 L784.8 235.5 ZM784.8 235.5 L787.5 237.4 L784.7 238.9 L782.0 236.9 Z" fill="#0a0" stroke="#0a0" stroke-width="0.5"/><path d="M719.0 191.6 L720.6 192.7 L718.0 193.6 L716.5 192.4 ZM737.7 187.0 L739.3 188.0 L737.0 188.8 L735.3 187.8 ZM715.5 194.4 L717.0 195.6 L714.4 196.5 L712.8 195.3 ZM741.7 187.2 L743.4 188.3 L741.0 189.1 L739.3 188.0 ZM717.0 195.6 L718.6 196.8 L716.0 197.7 L714.4 196.5 ZM743.4 188.3 L745.1 189.4 L742.7 190.2 L741.0 189.1 ZM741.0 189.1 L742.7 190.2 L740.3 191.0 L738.6 189.9 ZM718.6 196.8 L720.2 198.0 L717.6 198.9 L716.0 197.7 ZM745.1 189.4 L746.8 190.5 L744.5 191.3 L742.7 190.2 ZM742.7 190.2 L744.5 191.3 L742.1 192.1 L740.3 191.0 ZM717.6 198.9 L719.2 200.2 L716.5 201.1 L714.9 199.9 ZM746.8 190.5 L748.6 191.6 L746.2 192.4 L744.5 191.3 ZM744.5 191.3 L746.2 192.4 L743.8 193.3 L742.1 192.1 ZM746.2 192.4 L748.0 193.6 L745.6 194.4 L743.8 193.3 ZM723.6 200.5 L725.3 201.8 L722.6 202.7 L720.9 201.4 ZM748.0 193.6 L749.8 194.7 L747.4 195.6 L745.6 194.4 ZM745.6 194.4 L747.4 195.6 L744.9 196.5 L743.1 195.3 ZM727.9 200.8 L729.6 202.1 L727.0 203.1 L725.3 201.8 ZM725.3 201.8 L727.0 203.1 L724.3 204.0 L722.6 202.7 ZM744.9 196.5 L746.8 197.7 L744.3 198.6 L742.5 197.4 ZM742.5 197.4 L744.3 198.6 L741.8 199.5 L740.0 198.3 ZM737.4 199.2 L739.2 200.5 L736.7 201.4 L734.9 200.2 ZM734.9 200.2 L736.7 201.4 L734.0 202.4 L732.3 201.1 ZM732.3 201.1 L734.0 202.4 L731.4 203.4 L729.6 202.1 ZM776.3 188.6 L778.2 189.6 L776.1 190.5 L774.1 189.4 ZM774.1 189.4 L776.1 190.5 L773.9 191.3 L771.9 190.2 ZM778.2 189.6 L780.2 190.7 L778.0 191.6 L776.1 190.5 ZM776.1 190.5 L778.0 191.6 L775.8 192.4 L773.9 191.3 ZM773.9 191.3 L775.8 192.4 L773.6 193.3 L771.7 192.1 ZM771.7 192.1 L773.6 193.3 L771.4 194.1 L769.4 193.0 ZM769.4 193.0 L771.4 194.1 L769.1 195.0 L767.1 193.8 ZM767.1 193.8 L769.1 195.0 L766.8 195.9 L764.9 194.7 ZM764.9 194.7 L766.8 195.9 L764.5 196.8 L762.5 195.6 ZM721.2 211.3 L723.0 212.7 L720.1 213.8 L718.3 212.4 ZM718.3 212.4 L720.1 213.8 L717.2 215.0 L715.4 213.5 ZM715.4 213.5 L717.2 215.0 L714.2 216.1 L712.5 214.6 ZM712.5 214.6 L714.2 216.1 L711.2 217.3 L709.5 215.7 ZM709.5 215.7 L711.2 217.3 L708.2 218.4 L706.4 216.9 ZM706.4 216.9 L708.2 218.4 L705.1 219.6 L703.4 218.0 ZM703.4 218.0 L705.1 219.6 L701.9 220.8 L700.2 219.2 ZM766.8 195.9 L768.8 197.1 L766.5 198.0 L764.5 196.8 ZM725.9 211.6 L727.7 213.1 L724.8 214.2 L723.0 212.7 ZM723.0 212.7 L724.8 214.2 L721.9 215.3 L720.1 213.8 ZM784.4 191.0 L786.4 192.1 L784.3 193.0 L782.2 191.9 ZM766.5 198.0 L768.5 199.2 L766.1 200.2 L764.1 198.9 ZM727.7 213.1 L729.6 214.6 L726.7 215.7 L724.8 214.2 ZM768.5 199.2 L770.5 200.5 L768.1 201.4 L766.1 200.2 ZM729.6 214.6 L731.5 216.1 L728.6 217.2 L726.7 215.7 ZM768.1 201.4 L770.2 202.7 L767.8 203.7 L765.7 202.4 ZM772.6 201.7 L774.7 203.0 L772.3 204.0 L770.2 202.7 ZM770.2 202.7 L772.3 204.0 L769.9 205.0 L767.8 203.7 ZM736.3 216.4 L738.3 218.0 L735.4 219.2 L733.4 217.6 ZM774.7 203.0 L776.8 204.3 L774.4 205.3 L772.3 204.0 ZM735.4 219.2 L737.4 220.8 L734.5 222.0 L732.5 220.4 ZM776.8 204.3 L779.0 205.7 L776.6 206.7 L774.4 205.3 ZM737.4 220.8 L739.4 222.4 L736.5 223.6 L734.5 222.0 ZM781.4 204.6 L783.6 206.0 L781.2 207.0 L779.0 205.7 ZM736.5 223.6 L738.6 225.3 L735.6 226.6 L733.5 224.9 ZM797.2 200.1 L799.5 201.4 L797.3 202.4 L795.0 201.1 ZM795.0 201.1 L797.3 202.4 L795.1 203.3 L792.8 202.0 ZM792.8 202.0 L795.1 203.3 L792.8 204.3 L790.5 203.0 ZM790.5 203.0 L792.8 204.3 L790.5 205.3 L788.3 204.0 ZM788.3 204.0 L790.5 205.3 L788.2 206.3 L785.9 205.0 ZM785.9 205.0 L788.2 206.3 L785.9 207.3 L783.6 206.0 ZM783.6 206.0 L785.9 207.3 L783.5 208.4 L781.2 207.0 ZM738.6 225.3 L740.7 227.0 L737.7 228.3 L735.6 226.6 ZM735.6 226.6 L737.7 228.3 L734.6 229.6 L732.6 227.9 ZM732.6 227.9 L734.6 229.6 L731.5 231.0 L729.5 229.2 ZM729.5 229.2 L731.5 231.0 L728.4 232.4 L726.3 230.6 ZM726.3 230.6 L728.4 232.4 L725.2 233.7 L723.2 231.9 ZM723.2 231.9 L725.2 233.7 L722.0 235.2 L719.9 233.3 ZM719.9 233.3 L722.0 235.2 L718.7 236.6 L716.7 234.7 ZM795.1 203.3 L797.4 204.6 L795.1 205.6 L792.8 204.3 ZM790.5 205.3 L792.8 206.7 L790.5 207.7 L788.2 206.3 ZM788.2 206.3 L790.5 207.7 L788.2 208.7 L785.9 207.3 ZM734.6 229.6 L736.8 231.4 L733.7 232.8 L731.5 231.0 ZM731.5 231.0 L733.7 232.8 L730.5 234.2 L728.4 232.4 ZM728.4 232.4 L730.5 234.2 L727.3 235.6 L725.2 233.7 ZM768.1 217.6 L770.4 219.1 L767.8 220.3 L765.5 218.7 ZM765.5 218.7 L767.8 220.3 L765.1 221.5 L762.8 219.9 ZM775.7 216.8 L778.0 218.3 L775.4 219.5 L773.1 217.9 ZM770.4 219.1 L772.8 220.7 L770.1 221.9 L767.8 220.3 ZM765.1 221.5 L767.4 223.2 L764.6 224.4 L762.3 222.8 ZM753.9 226.6 L756.1 228.3 L753.2 229.6 L751.0 227.9 ZM780.6 217.2 L782.9 218.7 L780.4 219.9 L778.0 218.3 ZM764.6 224.4 L767.0 226.1 L764.2 227.4 L761.8 225.7 ZM761.8 225.7 L764.2 227.4 L761.3 228.7 L759.0 227.0 ZM759.0 227.0 L761.3 228.7 L758.5 230.0 L756.1 228.3 ZM756.1 228.3 L758.5 230.0 L755.5 231.4 L753.2 229.6 ZM785.5 217.5 L787.9 219.1 L785.4 220.3 L782.9 218.7 ZM761.3 228.7 L763.7 230.5 L760.8 231.8 L758.5 230.0 ZM787.9 219.1 L790.4 220.7 L787.9 221.9 L785.4 220.3 ZM763.7 230.5 L766.1 232.3 L763.2 233.7 L760.8 231.8 ZM760.8 231.8 L763.2 233.7 L760.3 235.1 L757.9 233.2 ZM766.1 232.3 L768.6 234.1 L765.7 235.5 L763.2 233.7 ZM792.9 222.3 L795.5 223.9 L792.9 225.2 L790.4 223.5 ZM768.6 234.1 L771.1 236.0 L768.2 237.4 L765.7 235.5 ZM795.5 223.9 L798.1 225.6 L795.6 226.9 L792.9 225.2 ZM771.1 236.0 L773.7 237.9 L770.7 239.4 L768.2 237.4 ZM798.1 225.6 L800.8 227.3 L798.2 228.6 L795.6 226.9 ZM773.7 237.9 L776.3 239.9 L773.3 241.4 L770.7 239.4 Z" fill="#0b0" stroke="#0b0" stroke-width="0.5"/><path d="M716.5 192.4 L718.0 193.6 L715.5 194.4 L713.9 193.3 ZM709.4 201.8 L711.0 203.1 L708.2 204.0 L706.7 202.7 ZM760.4 185.7 L762.2 186.7 L760.0 187.5 L758.2 186.5 ZM756.0 187.2 L757.8 188.3 L755.5 189.1 L753.7 188.0 ZM712.7 204.4 L714.3 205.7 L711.5 206.7 L709.9 205.4 ZM704.1 207.4 L705.7 208.8 L702.8 209.9 L701.2 208.5 ZM759.6 189.4 L761.4 190.5 L759.2 191.3 L757.3 190.2 ZM757.8 197.4 L759.7 198.6 L757.3 199.5 L755.4 198.3 ZM782.3 189.9 L784.4 191.0 L782.2 191.9 L780.2 190.7 ZM757.9 219.5 L760.1 221.1 L757.3 222.4 L755.1 220.7 ZM738.9 233.3 L741.1 235.1 L738.0 236.5 L735.8 234.7 ZM799.9 208.4 L802.3 209.8 L800.0 210.8 L797.6 209.4 ZM741.1 235.1 L743.4 237.0 L740.2 238.5 L738.0 236.5 ZM738.0 236.5 L740.2 238.5 L737.0 240.0 L734.8 238.0 ZM734.8 238.0 L737.0 240.0 L733.8 241.5 L731.6 239.5 ZM743.4 237.0 L745.7 238.9 L742.5 240.4 L740.2 238.5 ZM800.1 213.4 L802.6 214.8 L800.2 216.0 L797.7 214.5 ZM805.0 213.7 L807.5 215.2 L805.2 216.4 L802.6 214.8 ZM779.2 238.4 L781.8 240.3 L778.9 241.9 L776.3 239.9 Z" fill="#0c1" stroke="#0c1" stroke-width="0.5"/><path d="M746.9 183.9 L748.5 184.9 L746.3 185.7 L744.6 184.7 ZM704.8 198.0 L706.3 199.3 L703.6 200.2 L702.1 198.9 ZM695.4 218.8 L697.1 220.4 L693.9 221.6 L692.2 220.0 ZM759.9 209.1 L762.0 210.5 L759.4 211.6 L757.3 210.2 ZM762.0 210.5 L764.1 211.9 L761.5 213.0 L759.4 211.6 ZM761.7 243.9 L764.2 246.0 L761.1 247.6 L758.5 245.5 ZM776.0 243.4 L778.7 245.4 L775.7 247.0 L773.0 244.9 ZM795.8 236.4 L798.6 238.3 L795.8 239.8 L793.0 237.9 Z" fill="#3f3" stroke="#3f3" stroke-width="0.5"/><path d="M732.9 188.6 L734.6 189.7 L732.2 190.5 L730.5 189.4 ZM723.1 191.9 L724.7 193.0 L722.2 193.9 L720.6 192.7 ZM720.6 192.7 L722.2 193.9 L719.6 194.7 L718.0 193.6 ZM737.0 188.8 L738.6 189.9 L736.2 190.8 L734.6 189.7 ZM738.6 189.9 L740.3 191.0 L737.9 191.9 L736.2 190.8 ZM721.2 195.9 L722.9 197.1 L720.2 198.0 L718.6 196.8 ZM740.3 191.0 L742.1 192.1 L739.6 193.0 L737.9 191.9 ZM722.9 197.1 L724.5 198.3 L721.9 199.2 L720.2 198.0 ZM724.5 198.3 L726.2 199.6 L723.6 200.5 L721.9 199.2 ZM741.4 194.1 L743.1 195.3 L740.7 196.2 L738.9 195.0 ZM728.8 198.6 L730.5 199.9 L727.9 200.8 L726.2 199.6 ZM738.2 197.1 L740.0 198.3 L737.4 199.2 L735.7 198.0 ZM735.7 198.0 L737.4 199.2 L734.9 200.2 L733.1 198.9 ZM775.8 192.4 L777.8 193.6 L775.6 194.4 L773.6 193.3 ZM714.2 216.1 L716.0 217.6 L713.0 218.8 L711.2 217.3 ZM711.2 217.3 L713.0 218.8 L709.9 220.0 L708.2 218.4 ZM782.2 191.9 L784.3 193.0 L782.1 193.8 L780.0 192.7 ZM771.1 196.2 L773.1 197.4 L770.8 198.3 L768.8 197.1 ZM721.9 215.3 L723.8 216.8 L720.8 218.0 L719.0 216.5 ZM770.8 198.3 L772.9 199.5 L770.5 200.5 L768.5 199.2 ZM708.6 222.8 L710.4 224.5 L707.2 225.8 L705.4 224.1 ZM788.5 193.3 L790.6 194.4 L788.5 195.3 L786.3 194.1 ZM772.9 199.5 L774.9 200.8 L772.6 201.7 L770.5 200.5 ZM728.6 217.2 L730.5 218.8 L727.6 220.0 L725.7 218.4 ZM707.2 225.8 L709.0 227.5 L705.8 228.8 L704.0 227.1 ZM790.6 194.4 L792.8 195.6 L790.6 196.5 L788.5 195.3 ZM774.9 200.8 L777.0 202.0 L774.7 203.0 L772.6 201.7 ZM730.5 218.8 L732.5 220.4 L729.5 221.6 L727.6 220.0 ZM709.0 227.5 L710.9 229.2 L707.6 230.6 L705.8 228.8 ZM790.6 196.5 L792.8 197.7 L790.6 198.6 L788.4 197.4 ZM729.5 221.6 L731.5 223.2 L728.5 224.5 L726.5 222.8 ZM792.8 197.7 L795.0 198.9 L792.8 199.8 L790.6 198.6 ZM790.6 198.6 L792.8 199.8 L790.6 200.8 L788.4 199.5 ZM781.5 202.4 L783.7 203.7 L781.4 204.6 L779.2 203.3 ZM728.5 224.5 L730.5 226.2 L727.4 227.5 L725.4 225.7 ZM716.0 229.7 L718.0 231.5 L714.7 232.8 L712.8 231.0 ZM790.6 200.8 L792.8 202.0 L790.5 203.0 L788.3 201.7 ZM788.3 201.7 L790.5 203.0 L788.3 204.0 L786.0 202.7 ZM727.4 227.5 L729.5 229.2 L726.3 230.6 L724.3 228.8 ZM775.4 219.5 L777.8 221.1 L775.1 222.3 L772.8 220.7 ZM772.8 220.7 L775.1 222.3 L772.4 223.6 L770.1 221.9 ZM770.1 221.9 L772.4 223.6 L769.7 224.8 L767.4 223.2 ZM780.4 219.9 L782.8 221.5 L780.2 222.7 L777.8 221.1 ZM767.0 226.1 L769.4 227.8 L766.6 229.1 L764.2 227.4 ZM787.9 221.9 L790.4 223.5 L787.8 224.8 L785.3 223.1 ZM769.0 230.9 L771.4 232.7 L768.6 234.1 L766.1 232.3 ZM790.4 223.5 L792.9 225.2 L790.4 226.5 L787.8 224.8 ZM771.4 232.7 L774.0 234.6 L771.1 236.0 L768.6 234.1 ZM793.0 228.2 L795.6 230.0 L793.0 231.3 L790.3 229.5 ZM779.4 235.0 L782.0 236.9 L779.2 238.4 L776.5 236.5 Z" fill="#090" stroke="#090" stroke-width="0.5"/><path d="M730.5 189.4 L732.2 190.5 L729.7 191.3 L728.1 190.2 ZM728.1 190.2 L729.7 191.3 L727.2 192.1 L725.6 191.0 ZM725.6 191.0 L727.2 192.1 L724.7 193.0 L723.1 191.9 ZM734.6 189.7 L736.2 190.8 L733.8 191.6 L732.2 190.5 ZM724.7 193.0 L726.4 194.1 L723.8 195.0 L722.2 193.9 ZM722.2 193.9 L723.8 195.0 L721.2 195.9 L719.6 194.7 ZM736.2 190.8 L737.9 191.9 L735.5 192.7 L733.8 191.6 ZM723.8 195.0 L725.4 196.2 L722.9 197.1 L721.2 195.9 ZM737.9 191.9 L739.6 193.0 L737.2 193.9 L735.5 192.7 ZM725.4 196.2 L727.1 197.4 L724.5 198.3 L722.9 197.1 ZM739.6 193.0 L741.4 194.1 L738.9 195.0 L737.2 193.9 ZM727.1 197.4 L728.8 198.6 L726.2 199.6 L724.5 198.3 ZM738.9 195.0 L740.7 196.2 L738.2 197.1 L736.4 195.9 ZM736.4 195.9 L738.2 197.1 L735.7 198.0 L733.9 196.8 ZM733.9 196.8 L735.7 198.0 L733.1 198.9 L731.4 197.7 ZM731.4 197.7 L733.1 198.9 L730.5 199.9 L728.8 198.6 ZM780.0 192.7 L782.1 193.8 L779.9 194.7 L777.8 193.6 ZM777.8 193.6 L779.9 194.7 L777.7 195.6 L775.6 194.4 ZM775.6 194.4 L777.7 195.6 L775.4 196.5 L773.4 195.3 ZM773.4 195.3 L775.4 196.5 L773.1 197.4 L771.1 196.2 ZM719.0 216.5 L720.8 218.0 L717.8 219.2 L716.0 217.6 ZM716.0 217.6 L717.8 219.2 L714.8 220.4 L713.0 218.8 ZM713.0 218.8 L714.8 220.4 L711.7 221.6 L709.9 220.0 ZM709.9 220.0 L711.7 221.6 L708.6 222.8 L706.8 221.2 ZM784.3 193.0 L786.3 194.1 L784.2 195.0 L782.1 193.8 ZM773.1 197.4 L775.2 198.6 L772.9 199.5 L770.8 198.3 ZM723.8 216.8 L725.7 218.4 L722.7 219.6 L720.8 218.0 ZM786.3 194.1 L788.5 195.3 L786.3 196.2 L784.2 195.0 ZM775.2 198.6 L777.3 199.8 L774.9 200.8 L772.9 199.5 ZM725.7 218.4 L727.6 220.0 L724.6 221.2 L722.7 219.6 ZM710.4 224.5 L712.2 226.2 L709.0 227.5 L707.2 225.8 ZM788.5 195.3 L790.6 196.5 L788.4 197.4 L786.3 196.2 ZM777.3 199.8 L779.4 201.1 L777.0 202.0 L774.9 200.8 ZM727.6 220.0 L729.5 221.6 L726.5 222.8 L724.6 221.2 ZM712.2 226.2 L714.1 227.9 L710.9 229.2 L709.0 227.5 ZM788.4 197.4 L790.6 198.6 L788.4 199.5 L786.2 198.3 ZM779.4 201.1 L781.5 202.4 L779.2 203.3 L777.0 202.0 ZM714.1 227.9 L716.0 229.7 L712.8 231.0 L710.9 229.2 ZM788.4 199.5 L790.6 200.8 L788.3 201.7 L786.1 200.5 ZM786.1 200.5 L788.3 201.7 L786.0 202.7 L783.8 201.4 ZM783.8 201.4 L786.0 202.7 L783.7 203.7 L781.5 202.4 ZM725.4 225.7 L727.4 227.5 L724.3 228.8 L722.3 227.0 ZM722.3 227.0 L724.3 228.8 L721.2 230.1 L719.2 228.3 ZM719.2 228.3 L721.2 230.1 L718.0 231.5 L716.0 229.7 ZM777.8 221.1 L780.2 222.7 L777.5 224.0 L775.1 222.3 ZM775.1 222.3 L777.5 224.0 L774.9 225.2 L772.4 223.6 ZM772.4 223.6 L774.9 225.2 L772.1 226.5 L769.7 224.8 ZM769.7 224.8 L772.1 226.5 L769.4 227.8 L767.0 226.1 ZM782.8 221.5 L785.3 223.1 L782.7 224.4 L780.2 222.7 ZM769.4 227.8 L771.8 229.6 L769.0 230.9 L766.6 229.1 ZM785.3 223.1 L787.8 224.8 L785.2 226.1 L782.7 224.4 ZM771.8 229.6 L774.3 231.4 L771.4 232.7 L769.0 230.9 ZM787.8 224.8 L790.4 226.5 L787.7 227.8 L785.2 226.1 ZM774.3 231.4 L776.8 233.2 L774.0 234.6 L771.4 232.7 ZM790.4 226.5 L793.0 228.2 L790.3 229.5 L787.7 227.8 ZM776.8 233.2 L779.4 235.0 L776.5 236.5 L774.0 234.6 ZM790.3 229.5 L793.0 231.3 L790.3 232.7 L787.7 230.9 ZM787.7 230.9 L790.3 232.7 L787.6 234.1 L784.9 232.2 ZM784.9 232.2 L787.6 234.1 L784.8 235.5 L782.2 233.6 ZM782.2 233.6 L784.8 235.5 L782.0 236.9 L779.4 235.0 Z" fill="#080" stroke="#080" stroke-width="0.5"/><path d="M693.6 201.8 L695.1 203.1 L692.2 204.1 L690.7 202.8 ZM818.4 207.3 L821.0 208.7 L818.8 209.7 L816.2 208.3 Z" fill="#6e8" stroke="#6e8" stroke-width="0.5"/><path d="M755.2 182.7 L756.9 183.7 L754.7 184.4 L753.0 183.4 ZM697.9 202.1 L699.4 203.4 L696.6 204.4 L695.1 203.1 ZM749.7 246.6 L752.1 248.7 L748.9 250.4 L746.4 248.2 Z" fill="#8d4" stroke="#8d4" stroke-width="0.5"/><path d="M732.2 190.5 L733.8 191.6 L731.4 192.4 L729.7 191.3 ZM729.7 191.3 L731.4 192.4 L728.9 193.3 L727.2 192.1 ZM727.2 192.1 L728.9 193.3 L726.4 194.1 L724.7 193.0 ZM733.8 191.6 L735.5 192.7 L733.0 193.6 L731.4 192.4 ZM726.4 194.1 L728.0 195.3 L725.4 196.2 L723.8 195.0 ZM735.5 192.7 L737.2 193.9 L734.7 194.7 L733.0 193.6 ZM728.0 195.3 L729.7 196.5 L727.1 197.4 L725.4 196.2 ZM737.2 193.9 L738.9 195.0 L736.4 195.9 L734.7 194.7 ZM729.7 196.5 L731.4 197.7 L728.8 198.6 L727.1 197.4 ZM782.1 193.8 L784.2 195.0 L782.0 195.9 L779.9 194.7 ZM779.9 194.7 L782.0 195.9 L779.7 196.8 L777.7 195.6 ZM775.4 196.5 L777.5 197.7 L775.2 198.6 L773.1 197.4 ZM720.8 218.0 L722.7 219.6 L719.7 220.8 L717.8 219.2 ZM711.7 221.6 L713.5 223.2 L710.4 224.5 L708.6 222.8 ZM784.2 195.0 L786.3 196.2 L784.1 197.1 L782.0 195.9 ZM713.5 223.2 L715.4 224.9 L712.2 226.2 L710.4 224.5 ZM786.3 196.2 L788.4 197.4 L786.2 198.3 L784.1 197.1 ZM715.4 224.9 L717.3 226.6 L714.1 227.9 L712.2 226.2 ZM786.2 198.3 L788.4 199.5 L786.1 200.5 L783.9 199.2 ZM783.9 199.2 L786.1 200.5 L783.8 201.4 L781.7 200.1 ZM781.7 200.1 L783.8 201.4 L781.5 202.4 L779.4 201.1 ZM726.5 222.8 L728.5 224.5 L725.4 225.7 L723.5 224.1 ZM720.4 225.3 L722.3 227.0 L719.2 228.3 L717.3 226.6 ZM717.3 226.6 L719.2 228.3 L716.0 229.7 L714.1 227.9 ZM780.2 222.7 L782.7 224.4 L780.0 225.7 L777.5 224.0 ZM777.5 224.0 L780.0 225.7 L777.3 226.9 L774.9 225.2 ZM772.1 226.5 L774.6 228.2 L771.8 229.6 L769.4 227.8 ZM777.1 230.0 L779.6 231.8 L776.8 233.2 L774.3 231.4 ZM787.7 227.8 L790.3 229.5 L787.7 230.9 L785.1 229.1 ZM785.1 229.1 L787.7 230.9 L784.9 232.2 L782.3 230.4 ZM782.3 230.4 L784.9 232.2 L782.2 233.6 L779.6 231.8 ZM779.6 231.8 L782.2 233.6 L779.4 235.0 L776.8 233.2 Z" fill="#070" stroke="#070" stroke-width="0.5"/><path d="M703.6 200.2 L705.1 201.5 L702.3 202.4 L700.8 201.1 ZM754.3 202.7 L756.3 204.0 L753.8 205.0 L751.8 203.7 ZM749.3 204.7 L751.2 206.0 L748.7 207.0 L746.7 205.7 ZM746.7 205.7 L748.7 207.0 L746.0 208.1 L744.1 206.7 ZM741.5 207.7 L743.4 209.1 L740.7 210.2 L738.8 208.8 ZM745.3 210.5 L747.3 212.0 L744.6 213.1 L742.6 211.6 ZM747.3 212.0 L749.4 213.4 L746.6 214.5 L744.6 213.1 ZM797.1 195.9 L799.3 197.1 L797.2 198.0 L794.9 196.8 ZM764.5 209.4 L766.7 210.9 L764.1 211.9 L762.0 210.5 ZM751.4 214.9 L753.5 216.4 L750.8 217.6 L748.7 216.0 ZM709.5 232.4 L711.4 234.2 L708.1 235.7 L706.2 233.8 ZM733.8 241.5 L736.0 243.5 L732.7 245.0 L730.5 243.0 ZM807.8 217.9 L810.4 219.5 L808.0 220.7 L805.4 219.1 ZM784.7 238.9 L787.4 240.8 L784.6 242.3 L781.8 240.3 Z" fill="#2f2" stroke="#2f2" stroke-width="0.5"/><path d="M761.2 182.2 L763.0 183.2 L760.8 183.9 L759.1 182.9 ZM693.6 205.4 L695.2 206.7 L692.2 207.8 L690.7 206.4 ZM814.4 211.9 L817.0 213.3 L814.7 214.5 L812.1 213.0 ZM740.7 247.7 L743.1 249.8 L739.7 251.5 L737.3 249.3 ZM814.7 214.5 L817.4 216.0 L815.1 217.1 L812.4 215.6 ZM746.4 248.2 L748.9 250.4 L745.5 252.0 L743.1 249.8 Z" fill="#8d3" stroke="#8d3" stroke-width="0.5"/><path d="M731.4 192.4 L733.0 193.6 L730.5 194.4 L728.9 193.3 ZM728.9 193.3 L730.5 194.4 L728.0 195.3 L726.4 194.1 ZM733.0 193.6 L734.7 194.7 L732.2 195.6 L730.5 194.4 ZM730.5 194.4 L732.2 195.6 L729.7 196.5 L728.0 195.3 ZM734.7 194.7 L736.4 195.9 L733.9 196.8 L732.2 195.6 ZM732.2 195.6 L733.9 196.8 L731.4 197.7 L729.7 196.5 ZM777.7 195.6 L779.7 196.8 L777.5 197.7 L775.4 196.5 ZM717.8 219.2 L719.7 220.8 L716.6 222.0 L714.8 220.4 ZM714.8 220.4 L716.6 222.0 L713.5 223.2 L711.7 221.6 ZM782.0 195.9 L784.1 197.1 L781.8 198.0 L779.7 196.8 ZM779.7 196.8 L781.8 198.0 L779.6 198.9 L777.5 197.7 ZM777.5 197.7 L779.6 198.9 L777.3 199.8 L775.2 198.6 ZM722.7 219.6 L724.6 221.2 L721.6 222.4 L719.7 220.8 ZM719.7 220.8 L721.6 222.4 L718.5 223.7 L716.6 222.0 ZM716.6 222.0 L718.5 223.7 L715.4 224.9 L713.5 223.2 ZM784.1 197.1 L786.2 198.3 L783.9 199.2 L781.8 198.0 ZM781.8 198.0 L783.9 199.2 L781.7 200.1 L779.6 198.9 ZM779.6 198.9 L781.7 200.1 L779.4 201.1 L777.3 199.8 ZM724.6 221.2 L726.5 222.8 L723.5 224.1 L721.6 222.4 ZM721.6 222.4 L723.5 224.1 L720.4 225.3 L718.5 223.7 ZM718.5 223.7 L720.4 225.3 L717.3 226.6 L715.4 224.9 ZM723.5 224.1 L725.4 225.7 L722.3 227.0 L720.4 225.3 ZM774.9 225.2 L777.3 226.9 L774.6 228.2 L772.1 226.5 ZM782.7 224.4 L785.2 226.1 L782.5 227.4 L780.0 225.7 ZM780.0 225.7 L782.5 227.4 L779.8 228.7 L777.3 226.9 ZM777.3 226.9 L779.8 228.7 L777.1 230.0 L774.6 228.2 ZM774.6 228.2 L777.1 230.0 L774.3 231.4 L771.8 229.6 ZM785.2 226.1 L787.7 227.8 L785.1 229.1 L782.5 227.4 ZM782.5 227.4 L785.1 229.1 L782.3 230.4 L779.8 228.7 ZM779.8 228.7 L782.3 230.4 L779.6 231.8 L777.1 230.0 Z" fill="#060" stroke="#060" stroke-width="0.5"/><path d="M693.7 209.2 L695.2 210.6 L692.2 211.7 L690.7 210.2 ZM812.4 215.6 L815.1 217.1 L812.8 218.3 L810.1 216.7 Z" fill="#7d5" stroke="#7d5" stroke-width="0.5"/><path d="M748.0 209.5 L750.0 210.9 L747.3 212.0 L745.3 210.5 ZM757.8 207.7 L759.9 209.1 L757.3 210.2 L755.3 208.8 ZM750.0 210.9 L752.0 212.3 L749.4 213.4 L747.3 212.0 ZM765.0 207.0 L767.1 208.4 L764.5 209.4 L762.4 208.1 ZM757.3 210.2 L759.4 211.6 L756.8 212.7 L754.7 211.2 ZM764.1 211.9 L766.3 213.4 L763.7 214.5 L761.5 213.0 Z" fill="#1e2" stroke="#1e2" stroke-width="0.5"/><path d="M757.3 253.1 L759.9 255.4 L756.6 257.1 L754.0 254.8 Z" fill="#6e6" stroke="#6e6" stroke-width="0.5"/></g><g><path d="M762.1 86.2 L764.0 86.4 L761.7 88.4 L759.8 87.5 Z" fill="#5e7" stroke="#5e7" stroke-width="0.4"/><path d="M759.8 87.5 L761.7 88.4 L759.4 88.2 L757.5 87.9 Z" fill="#6f8" stroke="#6f8" stroke-width="0.4"/><path d="M764.0 86.4 L765.9 86.6 L763.6 87.9 L761.7 88.4 Z" fill="#5e7" stroke="#5e7" stroke-width="0.4"/><path d="M757.5 87.9 L759.4 88.2 L757.0 86.4 L755.2 86.3 Z" fill="#6f7" stroke="#6f7" stroke-width="0.4"/><path d="M761.7 88.4 L763.6 87.9 L761.3 89.0 L759.4 88.2 Z" fill="#6f8" stroke="#6f8" stroke-width="0.4"/><path d="M765.9 86.6 L767.8 87.0 L765.5 88.4 L763.6 87.9 Z" fill="#5e7" stroke="#5e7" stroke-width="0.4"/><path d="M755.2 86.3 L757.0 86.4 L754.7 85.9 L752.8 86.9 Z" fill="#5f7" stroke="#5f7" stroke-width="0.4"/><path d="M759.4 88.2 L761.3 89.0 L758.9 87.5 L757.0 86.4 Z" fill="#6f7" stroke="#6f7" stroke-width="0.4"/><path d="M763.6 87.9 L765.5 88.4 L763.2 89.3 L761.3 89.0 Z" fill="#6e7" stroke="#6e7" stroke-width="0.4"/><path d="M767.8 87.0 L769.8 86.8 L767.5 88.3 L765.5 88.4 Z" fill="#5e7" stroke="#5e7" stroke-width="0.4"/><path d="M752.8 86.9 L754.7 85.9 L752.3 86.1 L750.5 87.1 ZM757.0 86.4 L758.9 87.5 L756.6 87.6 L754.7 85.9 Z" fill="#5f7" stroke="#5f7" stroke-width="0.4"/><path d="M761.3 89.0 L763.2 89.3 L760.8 89.4 L758.9 87.5 ZM765.5 88.4 L767.5 88.3 L765.1 88.9 L763.2 89.3 Z" fill="#6f8" stroke="#6f8" stroke-width="0.4"/><path d="M769.8 86.8 L771.8 88.2 L769.5 88.3 L767.5 88.3 Z" fill="#5e7" stroke="#5e7" stroke-width="0.4"/><path d="M750.5 87.1 L752.3 86.1 L749.9 87.4 L748.0 87.1 Z" fill="#5f7" stroke="#5f7" stroke-width="0.4"/><path d="M754.7 85.9 L756.6 87.6 L754.2 87.7 L752.3 86.1 Z" fill="#5e6" stroke="#5e6" stroke-width="0.4"/><path d="M758.9 87.5 L760.8 89.4 L758.5 89.7 L756.6 87.6 Z" fill="#5e7" stroke="#5e7" stroke-width="0.4"/><path d="M763.2 89.3 L765.1 88.9 L762.8 91.1 L760.8 89.4 Z" fill="#6e7" stroke="#6e7" stroke-width="0.4"/><path d="M767.5 88.3 L769.5 88.3 L767.1 89.5 L765.1 88.9 ZM771.8 88.2 L773.8 88.3 L771.5 88.1 L769.5 88.3 Z" fill="#6f7" stroke="#6f7" stroke-width="0.4"/><path d="M748.0 87.1 L749.9 87.4 L747.4 88.1 L745.6 87.6 ZM752.3 86.1 L754.2 87.7 L751.7 87.2 L749.9 87.4 ZM756.6 87.6 L758.5 89.7 L756.1 88.7 L754.2 87.7 Z" fill="#5f7" stroke="#5f7" stroke-width="0.4"/><path d="M760.8 89.4 L762.8 91.1 L760.4 91.9 L758.5 89.7 Z" fill="#7d5" stroke="#7d5" stroke-width="0.4"/><path d="M765.1 88.9 L767.1 89.5 L764.8 89.5 L762.8 91.1 Z" fill="#6f8" stroke="#6f8" stroke-width="0.4"/><path d="M769.5 88.3 L771.5 88.1 L769.1 88.7 L767.1 89.5 ZM773.8 88.3 L775.8 88.6 L773.5 88.8 L771.5 88.1 Z" fill="#6f7" stroke="#6f7" stroke-width="0.4"/><path d="M745.6 87.6 L747.4 88.1 L745.0 90.2 L743.2 89.1 Z" fill="#5e7" stroke="#5e7" stroke-width="0.4"/><path d="M749.9 87.4 L751.7 87.2 L749.3 87.8 L747.4 88.1 ZM754.2 87.7 L756.1 88.7 L753.6 88.7 L751.7 87.2 Z" fill="#5f7" stroke="#5f7" stroke-width="0.4"/><path d="M758.5 89.7 L760.4 91.9 L758.0 91.1 L756.1 88.7 Z" fill="#6e7" stroke="#6e7" stroke-width="0.4"/><path d="M762.8 91.1 L764.8 89.5 L762.4 89.9 L760.4 91.9 Z" fill="#7e7" stroke="#7e7" stroke-width="0.4"/><path d="M767.1 89.5 L769.1 88.7 L766.8 89.3 L764.8 89.5 Z" fill="#6f8" stroke="#6f8" stroke-width="0.4"/><path d="M771.5 88.1 L773.5 88.8 L771.2 88.6 L769.1 88.7 ZM775.8 88.6 L777.9 88.4 L775.6 89.2 L773.5 88.8 Z" fill="#6f7" stroke="#6f7" stroke-width="0.4"/><path d="M743.2 89.1 L745.0 90.2 L742.6 94.8 L740.8 97.9 Z" fill="#9c2" stroke="#9c2" stroke-width="0.4"/><path d="M747.4 88.1 L749.3 87.8 L746.8 90.9 L745.0 90.2 Z" fill="#5d7" stroke="#5d7" stroke-width="0.4"/><path d="M751.7 87.2 L753.6 88.7 L751.2 88.7 L749.3 87.8 Z" fill="#5f7" stroke="#5f7" stroke-width="0.4"/><path d="M756.1 88.7 L758.0 91.1 L755.6 89.2 L753.6 88.7 Z" fill="#6f7" stroke="#6f7" stroke-width="0.4"/><path d="M760.4 91.9 L762.4 89.9 L760.0 89.5 L758.0 91.1 ZM764.8 89.5 L766.8 89.3 L764.4 88.4 L762.4 89.9 Z" fill="#6f8" stroke="#6f8" stroke-width="0.4"/><path d="M769.1 88.7 L771.2 88.6 L768.8 88.6 L766.8 89.3 Z" fill="#6f7" stroke="#6f7" stroke-width="0.4"/><path d="M773.5 88.8 L775.6 89.2 L773.2 90.9 L771.2 88.6 Z" fill="#5e7" stroke="#5e7" stroke-width="0.4"/><path d="M777.9 88.4 L779.7 99.0 L777.6 95.4 L775.6 89.2 Z" fill="#8c2" stroke="#8c2" stroke-width="0.4"/><path d="M740.8 97.9 L742.6 94.8 L739.9 90.6 L738.2 90.3 Z" fill="#be2" stroke="#be2" stroke-width="0.4"/><path d="M745.0 90.2 L746.8 90.9 L744.4 94.5 L742.6 94.8 Z" fill="#8c2" stroke="#8c2" stroke-width="0.4"/><path d="M749.3 87.8 L751.2 88.7 L748.7 93.7 L746.8 90.9 Z" fill="#5d7" stroke="#5d7" stroke-width="0.4"/><path d="M753.6 88.7 L755.6 89.2 L753.1 89.9 L751.2 88.7 Z" fill="#5f7" stroke="#5f7" stroke-width="0.4"/><path d="M758.0 91.1 L760.0 89.5 L757.5 88.8 L755.6 89.2 Z" fill="#6f8" stroke="#6f8" stroke-width="0.4"/><path d="M762.4 89.9 L764.4 88.4 L762.0 88.5 L760.0 89.5 ZM766.8 89.3 L768.8 88.6 L766.4 88.6 L764.4 88.4 Z" fill="#6f7" stroke="#6f7" stroke-width="0.4"/><path d="M771.2 88.6 L773.2 90.9 L770.8 92.0 L768.8 88.6 Z" fill="#5d7" stroke="#5d7" stroke-width="0.4"/><path d="M775.6 89.2 L777.6 95.4 L775.3 94.6 L773.2 90.9 Z" fill="#7b2" stroke="#7b2" stroke-width="0.4"/><path d="M779.7 99.0 L782.2 89.3 L779.9 90.1 L777.6 95.4 ZM742.6 94.8 L744.4 94.5 L741.7 89.3 L739.9 90.6 Z" fill="#9d2" stroke="#9d2" stroke-width="0.4"/><path d="M777.6 95.4 L779.9 90.1 L777.5 90.8 L775.3 94.6 Z" fill="#8d3" stroke="#8d3" stroke-width="0.4"/><path d="M738.2 90.3 L739.9 90.6 L737.4 90.6 L735.6 91.3 Z" fill="#6f8" stroke="#6f8" stroke-width="0.4"/><path d="M746.8 90.9 L748.7 93.7 L746.2 93.8 L744.4 94.5 Z" fill="#9c2" stroke="#9c2" stroke-width="0.4"/><path d="M751.2 88.7 L753.1 89.9 L750.6 94.8 L748.7 93.7 Z" fill="#6c4" stroke="#6c4" stroke-width="0.4"/><path d="M755.6 89.2 L757.5 88.8 L755.0 91.1 L753.1 89.9 Z" fill="#5e7" stroke="#5e7" stroke-width="0.4"/><path d="M760.0 89.5 L762.0 88.5 L759.5 89.2 L757.5 88.8 Z" fill="#6f7" stroke="#6f7" stroke-width="0.4"/><path d="M764.4 88.4 L766.4 88.6 L764.0 90.1 L762.0 88.5 Z" fill="#5e7" stroke="#5e7" stroke-width="0.4"/><path d="M768.8 88.6 L770.8 92.0 L768.4 93.6 L766.4 88.6 Z" fill="#5d6" stroke="#5d6" stroke-width="0.4"/><path d="M773.2 90.9 L775.3 94.6 L772.9 92.4 L770.8 92.0 Z" fill="#8d4" stroke="#8d4" stroke-width="0.4"/><path d="M782.2 89.3 L784.5 88.9 L782.1 89.6 L779.9 90.1 Z" fill="#5f7" stroke="#5f7" stroke-width="0.4"/><path d="M744.4 94.5 L746.2 93.8 L743.6 89.8 L741.7 89.3 Z" fill="#7e5" stroke="#7e5" stroke-width="0.4"/><path d="M775.3 94.6 L777.5 90.8 L775.2 89.1 L772.9 92.4 ZM735.6 91.3 L737.4 90.6 L734.7 89.4 L733.0 89.4 Z" fill="#6f8" stroke="#6f8" stroke-width="0.4"/><path d="M739.9 90.6 L741.7 89.3 L739.1 88.0 L737.4 90.6 Z" fill="#6f7" stroke="#6f7" stroke-width="0.4"/><path d="M748.7 93.7 L750.6 94.8 L748.1 90.2 L746.2 93.8 Z" fill="#ae2" stroke="#ae2" stroke-width="0.4"/><path d="M753.1 89.9 L755.0 91.1 L752.5 90.4 L750.6 94.8 Z" fill="#6e7" stroke="#6e7" stroke-width="0.4"/><path d="M757.5 88.8 L759.5 89.2 L757.0 89.7 L755.0 91.1 Z" fill="#5f7" stroke="#5f7" stroke-width="0.4"/><path d="M762.0 88.5 L764.0 90.1 L761.5 90.3 L759.5 89.2 ZM766.4 88.6 L768.4 93.6 L766.0 90.1 L764.0 90.1 Z" fill="#5e7" stroke="#5e7" stroke-width="0.4"/><path d="M770.8 92.0 L772.9 92.4 L770.6 89.2 L768.4 93.6 Z" fill="#6f8" stroke="#6f8" stroke-width="0.4"/><path d="M779.9 90.1 L782.1 89.6 L779.7 89.6 L777.5 90.8 Z" fill="#6f7" stroke="#6f7" stroke-width="0.4"/><path d="M784.5 88.9 L786.7 89.3 L784.3 90.0 L782.1 89.6 Z" fill="#5f7" stroke="#5f7" stroke-width="0.4"/><path d="M733.0 89.4 L734.7 89.4 L732.0 87.9 L730.3 88.3 Z" fill="#6f7" stroke="#6f7" stroke-width="0.4"/><path d="M737.4 90.6 L739.1 88.0 L736.5 86.9 L734.7 89.4 ZM741.7 89.3 L743.6 89.8 L741.0 87.4 L739.1 88.0 Z" fill="#5f7" stroke="#5f7" stroke-width="0.4"/><path d="M746.2 93.8 L748.1 90.2 L745.4 87.1 L743.6 89.8 Z" fill="#6f7" stroke="#6f7" stroke-width="0.4"/><path d="M750.6 94.8 L752.5 90.4 L750.0 87.1 L748.1 90.2 Z" fill="#6f8" stroke="#6f8" stroke-width="0.4"/><path d="M755.0 91.1 L757.0 89.7 L754.5 85.6 L752.5 90.4 ZM759.5 89.2 L761.5 90.3 L759.0 85.7 L757.0 89.7 ZM764.0 90.1 L766.0 90.1 L763.6 86.8 L761.5 90.3 ZM768.4 93.6 L770.6 89.2 L768.2 85.7 L766.0 90.1 ZM772.9 92.4 L775.2 89.1 L772.8 86.4 L770.6 89.2 ZM777.5 90.8 L779.7 89.6 L777.5 86.3 L775.2 89.1 ZM782.1 89.6 L784.3 90.0 L782.0 88.2 L779.7 89.6 ZM786.7 89.3 L789.0 89.7 L786.6 89.9 L784.3 90.0 Z" fill="#5f7" stroke="#5f7" stroke-width="0.4"/><path d="M730.3 88.3 L732.0 87.9 L729.4 87.7 L727.6 87.2 Z" fill="#5f6" stroke="#5f6" stroke-width="0.4"/><path d="M734.7 89.4 L736.5 86.9 L733.8 86.0 L732.0 87.9 ZM743.6 89.8 L745.4 87.1 L742.8 86.3 L741.0 87.4 ZM748.1 90.2 L750.0 87.1 L747.4 86.4 L745.4 87.1 Z" fill="#4f5" stroke="#4f5" stroke-width="0.4"/><path d="M752.5 90.4 L754.5 85.6 L751.9 84.5 L750.0 87.1 Z" fill="#2f3" stroke="#2f3" stroke-width="0.4"/><path d="M757.0 89.7 L759.0 85.7 L756.5 83.8 L754.5 85.6 Z" fill="#1f2" stroke="#1f2" stroke-width="0.4"/><path d="M761.5 90.3 L763.6 86.8 L761.1 84.7 L759.0 85.7 ZM766.0 90.1 L768.2 85.7 L765.7 85.7 L763.6 86.8 Z" fill="#2f3" stroke="#2f3" stroke-width="0.4"/><path d="M770.6 89.2 L772.8 86.4 L770.4 86.0 L768.2 85.7 Z" fill="#2f2" stroke="#2f2" stroke-width="0.4"/><path d="M775.2 89.1 L777.5 86.3 L775.1 84.1 L772.8 86.4 Z" fill="#1f2" stroke="#1f2" stroke-width="0.4"/><path d="M784.3 90.0 L786.6 89.9 L784.4 86.8 L782.0 88.2 Z" fill="#4f5" stroke="#4f5" stroke-width="0.4"/><path d="M789.0 89.7 L791.3 90.0 L789.0 88.9 L786.6 89.9 Z" fill="#5f7" stroke="#5f7" stroke-width="0.4"/><path d="M739.1 88.0 L741.0 87.4 L738.3 86.1 L736.5 86.9 Z" fill="#3f4" stroke="#3f4" stroke-width="0.4"/><path d="M779.7 89.6 L782.0 88.2 L779.7 85.8 L777.5 86.3 ZM732.0 87.9 L733.8 86.0 L731.1 85.6 L729.4 87.7 Z" fill="#2f3" stroke="#2f3" stroke-width="0.4"/><path d="M750.0 87.1 L751.9 84.5 L749.3 85.5 L747.4 86.4 Z" fill="#1f1" stroke="#1f1" stroke-width="0.4"/><path d="M768.2 85.7 L770.4 86.0 L767.9 85.8 L765.7 85.7 Z" fill="#1e1" stroke="#1e1" stroke-width="0.4"/><path d="M786.6 89.9 L789.0 88.9 L786.7 85.9 L784.4 86.8 Z" fill="#2f3" stroke="#2f3" stroke-width="0.4"/><path d="M727.6 87.2 L729.4 87.7 L726.6 87.7 L724.9 87.3 Z" fill="#4f5" stroke="#4f5" stroke-width="0.4"/><path d="M736.5 86.9 L738.3 86.1 L735.6 84.5 L733.8 86.0 Z" fill="#1f2" stroke="#1f2" stroke-width="0.4"/><path d="M745.4 87.1 L747.4 86.4 L744.7 86.3 L742.8 86.3 Z" fill="#2f2" stroke="#2f2" stroke-width="0.4"/><path d="M754.5 85.6 L756.5 83.8 L753.9 83.0 L751.9 84.5 Z" fill="#0d0" stroke="#0d0" stroke-width="0.4"/><path d="M759.0 85.7 L761.1 84.7 L758.6 84.1 L756.5 83.8 Z" fill="#0d1" stroke="#0d1" stroke-width="0.4"/><path d="M763.6 86.8 L765.7 85.7 L763.2 85.6 L761.1 84.7 Z" fill="#1f1" stroke="#1f1" stroke-width="0.4"/><path d="M772.8 86.4 L775.1 84.1 L772.6 83.6 L770.4 86.0 Z" fill="#0d1" stroke="#0d1" stroke-width="0.4"/><path d="M782.0 88.2 L784.4 86.8 L782.0 85.8 L779.7 85.8 Z" fill="#1f2" stroke="#1f2" stroke-width="0.4"/><path d="M791.3 90.0 L793.7 89.2 L791.4 88.2 L789.0 88.9 Z" fill="#4f5" stroke="#4f5" stroke-width="0.4"/><path d="M741.0 87.4 L742.8 86.3 L740.2 86.1 L738.3 86.1 Z" fill="#2f2" stroke="#2f2" stroke-width="0.4"/><path d="M777.5 86.3 L779.7 85.8 L777.3 84.2 L775.1 84.1 Z" fill="#0d1" stroke="#0d1" stroke-width="0.4"/><path d="M724.9 87.3 L726.6 87.7 L723.9 87.4 L722.2 88.5 Z" fill="#4f5" stroke="#4f5" stroke-width="0.4"/><path d="M729.4 87.7 L731.1 85.6 L728.3 85.3 L726.6 87.7 Z" fill="#2f2" stroke="#2f2" stroke-width="0.4"/><path d="M733.8 86.0 L735.6 84.5 L732.8 83.0 L731.1 85.6 Z" fill="#0e1" stroke="#0e1" stroke-width="0.4"/><path d="M738.3 86.1 L740.2 86.1 L737.4 84.4 L735.6 84.5 Z" fill="#1e1" stroke="#1e1" stroke-width="0.4"/><path d="M742.8 86.3 L744.7 86.3 L742.1 85.6 L740.2 86.1 Z" fill="#1f2" stroke="#1f2" stroke-width="0.4"/><path d="M747.4 86.4 L749.3 85.5 L746.7 86.3 L744.7 86.3 Z" fill="#1f1" stroke="#1f1" stroke-width="0.4"/><path d="M751.9 84.5 L753.9 83.0 L751.3 83.6 L749.3 85.5 ZM756.5 83.8 L758.6 84.1 L756.0 82.6 L753.9 83.0 Z" fill="#0c0" stroke="#0c0" stroke-width="0.4"/><path d="M761.1 84.7 L763.2 85.6 L760.7 84.7 L758.6 84.1 Z" fill="#0d0" stroke="#0d0" stroke-width="0.4"/><path d="M765.7 85.7 L767.9 85.8 L765.3 87.4 L763.2 85.6 Z" fill="#1d1" stroke="#1d1" stroke-width="0.4"/><path d="M770.4 86.0 L772.6 83.6 L770.1 85.1 L767.9 85.8 Z" fill="#0d0" stroke="#0d0" stroke-width="0.4"/><path d="M775.1 84.1 L777.3 84.2 L774.8 83.9 L772.6 83.6 Z" fill="#0c0" stroke="#0c0" stroke-width="0.4"/><path d="M779.7 85.8 L782.0 85.8 L779.6 84.7 L777.3 84.2 Z" fill="#0d0" stroke="#0d0" stroke-width="0.4"/><path d="M784.4 86.8 L786.7 85.9 L784.4 84.9 L782.0 85.8 Z" fill="#0e1" stroke="#0e1" stroke-width="0.4"/><path d="M789.0 88.9 L791.4 88.2 L789.1 85.7 L786.7 85.9 Z" fill="#1f2" stroke="#1f2" stroke-width="0.4"/><path d="M793.7 89.2 L796.1 88.8 L793.9 87.1 L791.4 88.2 Z" fill="#2f3" stroke="#2f3" stroke-width="0.4"/><path d="M722.2 88.5 L723.9 87.4 L721.1 87.4 L719.4 88.8 Z" fill="#4f5" stroke="#4f5" stroke-width="0.4"/><path d="M726.6 87.7 L728.3 85.3 L725.5 84.4 L723.9 87.4 Z" fill="#1f2" stroke="#1f2" stroke-width="0.4"/><path d="M731.1 85.6 L732.8 83.0 L730.0 82.5 L728.3 85.3 ZM735.6 84.5 L737.4 84.4 L734.6 82.6 L732.8 83.0 Z" fill="#0c0" stroke="#0c0" stroke-width="0.4"/><path d="M740.2 86.1 L742.1 85.6 L739.3 84.0 L737.4 84.4 Z" fill="#0e1" stroke="#0e1" stroke-width="0.4"/><path d="M744.7 86.3 L746.7 86.3 L744.0 85.5 L742.1 85.6 Z" fill="#1f1" stroke="#1f1" stroke-width="0.4"/><path d="M749.3 85.5 L751.3 83.6 L748.7 86.5 L746.7 86.3 Z" fill="#0d1" stroke="#0d1" stroke-width="0.4"/><path d="M753.9 83.0 L756.0 82.6 L753.3 83.4 L751.3 83.6 ZM758.6 84.1 L760.7 84.7 L758.1 82.0 L756.0 82.6 Z" fill="#0b0" stroke="#0b0" stroke-width="0.4"/><path d="M763.2 85.6 L765.3 87.4 L762.8 85.6 L760.7 84.7 ZM767.9 85.8 L770.1 85.1 L767.5 86.0 L765.3 87.4 Z" fill="#0d1" stroke="#0d1" stroke-width="0.4"/><path d="M772.6 83.6 L774.8 83.9 L772.3 83.8 L770.1 85.1 Z" fill="#0b0" stroke="#0b0" stroke-width="0.4"/><path d="M777.3 84.2 L779.6 84.7 L777.1 84.2 L774.8 83.9 Z" fill="#0c0" stroke="#0c0" stroke-width="0.4"/><path d="M782.0 85.8 L784.4 84.9 L781.9 85.4 L779.6 84.7 ZM786.7 85.9 L789.1 85.7 L786.7 85.1 L784.4 84.9 Z" fill="#0d0" stroke="#0d0" stroke-width="0.4"/><path d="M791.4 88.2 L793.9 87.1 L791.6 84.9 L789.1 85.7 Z" fill="#0e1" stroke="#0e1" stroke-width="0.4"/><path d="M796.1 88.8 L798.5 90.0 L796.3 86.7 L793.9 87.1 Z" fill="#1f2" stroke="#1f2" stroke-width="0.4"/><path d="M719.4 88.8 L721.1 87.4 L718.2 86.7 L716.6 89.6 Z" fill="#3f5" stroke="#3f5" stroke-width="0.4"/><path d="M723.9 87.4 L725.5 84.4 L722.6 83.1 L721.1 87.4 Z" fill="#1e1" stroke="#1e1" stroke-width="0.4"/><path d="M728.3 85.3 L730.0 82.5 L727.2 81.4 L725.5 84.4 Z" fill="#0b0" stroke="#0b0" stroke-width="0.4"/><path d="M732.8 83.0 L734.6 82.6 L731.8 80.9 L730.0 82.5 Z" fill="#0a0" stroke="#0a0" stroke-width="0.4"/><path d="M737.4 84.4 L739.3 84.0 L736.5 81.8 L734.6 82.6 Z" fill="#0b0" stroke="#0b0" stroke-width="0.4"/><path d="M742.1 85.6 L744.0 85.5 L741.2 83.6 L739.3 84.0 Z" fill="#0d0" stroke="#0d0" stroke-width="0.4"/><path d="M746.7 86.3 L748.7 86.5 L746.0 85.6 L744.0 85.5 Z" fill="#1e1" stroke="#1e1" stroke-width="0.4"/><path d="M751.3 83.6 L753.3 83.4 L750.7 84.6 L748.7 86.5 Z" fill="#0b0" stroke="#0b0" stroke-width="0.4"/><path d="M756.0 82.6 L758.1 82.0 L755.4 81.2 L753.3 83.4 Z" fill="#0a0" stroke="#0a0" stroke-width="0.4"/><path d="M760.7 84.7 L762.8 85.6 L760.2 82.8 L758.1 82.0 Z" fill="#0b0" stroke="#0b0" stroke-width="0.4"/><path d="M765.3 87.4 L767.5 86.0 L764.9 85.8 L762.8 85.6 Z" fill="#0e1" stroke="#0e1" stroke-width="0.4"/><path d="M770.1 85.1 L772.3 83.8 L769.8 84.1 L767.5 86.0 Z" fill="#0c0" stroke="#0c0" stroke-width="0.4"/><path d="M774.8 83.9 L777.1 84.2 L774.6 83.6 L772.3 83.8 Z" fill="#0b0" stroke="#0b0" stroke-width="0.4"/><path d="M779.6 84.7 L781.9 85.4 L779.4 85.0 L777.1 84.2 ZM784.4 84.9 L786.7 85.1 L784.2 85.9 L781.9 85.4 ZM789.1 85.7 L791.6 84.9 L789.1 85.0 L786.7 85.1 Z" fill="#0c0" stroke="#0c0" stroke-width="0.4"/><path d="M793.9 87.1 L796.3 86.7 L794.0 85.8 L791.6 84.9 Z" fill="#0d0" stroke="#0d0" stroke-width="0.4"/><path d="M798.5 90.0 L801.0 90.4 L798.8 87.7 L796.3 86.7 Z" fill="#1f2" stroke="#1f2" stroke-width="0.4"/><path d="M716.6 89.6 L718.2 86.7 L715.2 85.1 L713.7 88.2 Z" fill="#2f3" stroke="#2f3" stroke-width="0.4"/><path d="M721.1 87.4 L722.6 83.1 L719.7 82.1 L718.2 86.7 Z" fill="#0d0" stroke="#0d0" stroke-width="0.4"/><path d="M725.5 84.4 L727.2 81.4 L724.2 78.9 L722.6 83.1 Z" fill="#0a0" stroke="#0a0" stroke-width="0.4"/><path d="M734.6 82.6 L736.5 81.8 L733.7 80.1 L731.8 80.9 Z" fill="#090" stroke="#090" stroke-width="0.4"/><path d="M739.3 84.0 L741.2 83.6 L738.4 81.0 L736.5 81.8 Z" fill="#0a0" stroke="#0a0" stroke-width="0.4"/><path d="M744.0 85.5 L746.0 85.6 L743.2 82.9 L741.2 83.6 Z" fill="#0c0" stroke="#0c0" stroke-width="0.4"/><path d="M753.3 83.4 L755.4 81.2 L752.7 82.9 L750.7 84.6 Z" fill="#0a0" stroke="#0a0" stroke-width="0.4"/><path d="M758.1 82.0 L760.2 82.8 L757.5 81.6 L755.4 81.2 Z" fill="#090" stroke="#090" stroke-width="0.4"/><path d="M762.8 85.6 L764.9 85.8 L762.4 82.8 L760.2 82.8 ZM772.3 83.8 L774.6 83.6 L772.0 83.0 L769.8 84.1 ZM777.1 84.2 L779.4 85.0 L776.9 84.0 L774.6 83.6 Z" fill="#0b0" stroke="#0b0" stroke-width="0.4"/><path d="M781.9 85.4 L784.2 85.9 L781.8 84.3 L779.4 85.0 ZM791.6 84.9 L794.0 85.8 L791.6 85.1 L789.1 85.0 Z" fill="#0c0" stroke="#0c0" stroke-width="0.4"/><path d="M796.3 86.7 L798.8 87.7 L796.5 85.4 L794.0 85.8 Z" fill="#0d0" stroke="#0d0" stroke-width="0.4"/><path d="M801.0 90.4 L803.5 90.5 L801.3 88.2 L798.8 87.7 Z" fill="#2f2" stroke="#2f2" stroke-width="0.4"/><path d="M730.0 82.5 L731.8 80.9 L729.0 80.6 L727.2 81.4 Z" fill="#090" stroke="#090" stroke-width="0.4"/><path d="M748.7 86.5 L750.7 84.6 L748.0 84.3 L746.0 85.6 Z" fill="#0d0" stroke="#0d0" stroke-width="0.4"/><path d="M767.5 86.0 L769.8 84.1 L767.2 83.7 L764.9 85.8 ZM786.7 85.1 L789.1 85.0 L786.7 85.3 L784.2 85.9 ZM718.2 86.7 L719.7 82.1 L716.8 82.0 L715.2 85.1 Z" fill="#0c0" stroke="#0c0" stroke-width="0.4"/><path d="M722.6 83.1 L724.2 78.9 L721.3 79.1 L719.7 82.1 Z" fill="#080" stroke="#080" stroke-width="0.4"/><path d="M741.2 83.6 L743.2 82.9 L740.4 80.1 L738.4 81.0 Z" fill="#090" stroke="#090" stroke-width="0.4"/><path d="M755.4 81.2 L757.5 81.6 L754.8 82.8 L752.7 82.9 Z" fill="#080" stroke="#080" stroke-width="0.4"/><path d="M760.2 82.8 L762.4 82.8 L759.7 80.8 L757.5 81.6 Z" fill="#090" stroke="#090" stroke-width="0.4"/><path d="M774.6 83.6 L776.9 84.0 L774.4 81.8 L772.0 83.0 Z" fill="#0a0" stroke="#0a0" stroke-width="0.4"/><path d="M794.0 85.8 L796.5 85.4 L794.1 85.7 L791.6 85.1 Z" fill="#0c0" stroke="#0c0" stroke-width="0.4"/><path d="M798.8 87.7 L801.3 88.2 L799.0 86.8 L796.5 85.4 Z" fill="#0d1" stroke="#0d1" stroke-width="0.4"/><path d="M713.7 88.2 L715.2 85.1 L712.3 85.0 L710.8 87.5 Z" fill="#1e1" stroke="#1e1" stroke-width="0.4"/><path d="M727.2 81.4 L729.0 80.6 L726.1 79.2 L724.2 78.9 Z" fill="#070" stroke="#070" stroke-width="0.4"/><path d="M731.8 80.9 L733.7 80.1 L730.8 80.3 L729.0 80.6 ZM736.5 81.8 L738.4 81.0 L735.6 79.9 L733.7 80.1 Z" fill="#080" stroke="#080" stroke-width="0.4"/><path d="M746.0 85.6 L748.0 84.3 L745.2 82.6 L743.2 82.9 ZM750.7 84.6 L752.7 82.9 L750.0 84.1 L748.0 84.3 Z" fill="#0b0" stroke="#0b0" stroke-width="0.4"/><path d="M764.9 85.8 L767.2 83.7 L764.6 81.7 L762.4 82.8 ZM769.8 84.1 L772.0 83.0 L769.4 82.8 L767.2 83.7 Z" fill="#0a0" stroke="#0a0" stroke-width="0.4"/><path d="M779.4 85.0 L781.8 84.3 L779.3 82.7 L776.9 84.0 ZM784.2 85.9 L786.7 85.3 L784.2 83.5 L781.8 84.3 ZM789.1 85.0 L791.6 85.1 L789.1 84.4 L786.7 85.3 Z" fill="#0b0" stroke="#0b0" stroke-width="0.4"/><path d="M803.5 90.5 L806.2 90.1 L803.9 89.1 L801.3 88.2 Z" fill="#1f2" stroke="#1f2" stroke-width="0.4"/><path d="M719.7 82.1 L721.3 79.1 L718.4 79.5 L716.8 82.0 Z" fill="#080" stroke="#080" stroke-width="0.4"/><path d="M796.5 85.4 L799.0 86.8 L796.8 83.2 L794.1 85.7 Z" fill="#0b0" stroke="#0b0" stroke-width="0.4"/><path d="M710.8 87.5 L712.3 85.0 L709.4 86.3 L707.9 88.3 Z" fill="#1e1" stroke="#1e1" stroke-width="0.4"/><path d="M715.2 85.1 L716.8 82.0 L713.9 83.5 L712.3 85.0 Z" fill="#0b0" stroke="#0b0" stroke-width="0.4"/><path d="M724.2 78.9 L726.1 79.2 L723.2 79.4 L721.3 79.1 Z" fill="#060" stroke="#060" stroke-width="0.4"/><path d="M729.0 80.6 L730.8 80.3 L727.9 79.5 L726.1 79.2 ZM733.7 80.1 L735.6 79.9 L732.7 79.6 L730.8 80.3 ZM738.4 81.0 L740.4 80.1 L737.5 79.7 L735.6 79.9 Z" fill="#070" stroke="#070" stroke-width="0.4"/><path d="M743.2 82.9 L745.2 82.6 L742.4 79.8 L740.4 80.1 Z" fill="#080" stroke="#080" stroke-width="0.4"/><path d="M748.0 84.3 L750.0 84.1 L747.3 83.3 L745.2 82.6 Z" fill="#0a0" stroke="#0a0" stroke-width="0.4"/><path d="M752.7 82.9 L754.8 82.8 L752.1 84.5 L750.0 84.1 Z" fill="#090" stroke="#090" stroke-width="0.4"/><path d="M757.5 81.6 L759.7 80.8 L757.0 83.1 L754.8 82.8 ZM762.4 82.8 L764.6 81.7 L761.9 80.5 L759.7 80.8 Z" fill="#080" stroke="#080" stroke-width="0.4"/><path d="M767.2 83.7 L769.4 82.8 L766.8 81.0 L764.6 81.7 Z" fill="#090" stroke="#090" stroke-width="0.4"/><path d="M772.0 83.0 L774.4 81.8 L771.8 80.5 L769.4 82.8 Z" fill="#080" stroke="#080" stroke-width="0.4"/><path d="M776.9 84.0 L779.3 82.7 L776.8 81.3 L774.4 81.8 ZM781.8 84.3 L784.2 83.5 L781.7 81.8 L779.3 82.7 Z" fill="#090" stroke="#090" stroke-width="0.4"/><path d="M786.7 85.3 L789.1 84.4 L786.7 82.3 L784.2 83.5 ZM791.6 85.1 L794.1 85.7 L791.7 82.8 L789.1 84.4 Z" fill="#0a0" stroke="#0a0" stroke-width="0.4"/><path d="M801.3 88.2 L803.9 89.1 L801.6 86.5 L799.0 86.8 Z" fill="#0d1" stroke="#0d1" stroke-width="0.4"/><path d="M806.2 90.1 L808.8 90.9 L806.6 88.2 L803.9 89.1 Z" fill="#1f2" stroke="#1f2" stroke-width="0.4"/><path d="M707.9 88.3 L709.4 86.3 L706.7 90.4 L705.1 90.6 Z" fill="#3e3" stroke="#3e3" stroke-width="0.4"/><path d="M712.3 85.0 L713.9 83.5 L711.1 85.8 L709.4 86.3 Z" fill="#0c0" stroke="#0c0" stroke-width="0.4"/><path d="M721.3 79.1 L723.2 79.4 L720.2 79.7 L718.4 79.5 ZM726.1 79.2 L727.9 79.5 L725.0 79.8 L723.2 79.4 ZM730.8 80.3 L732.7 79.6 L729.8 79.9 L727.9 79.5 ZM740.4 80.1 L742.4 79.8 L739.5 80.1 L737.5 79.7 Z" fill="#060" stroke="#060" stroke-width="0.4"/><path d="M745.2 82.6 L747.3 83.3 L744.4 80.5 L742.4 79.8 Z" fill="#080" stroke="#080" stroke-width="0.4"/><path d="M750.0 84.1 L752.1 84.5 L749.4 85.3 L747.3 83.3 Z" fill="#0a0" stroke="#0a0" stroke-width="0.4"/><path d="M764.6 81.7 L766.8 81.0 L764.2 80.6 L761.9 80.5 ZM769.4 82.8 L771.8 80.5 L769.1 80.7 L766.8 81.0 ZM774.4 81.8 L776.8 81.3 L774.1 80.8 L771.8 80.5 Z" fill="#070" stroke="#070" stroke-width="0.4"/><path d="M784.2 83.5 L786.7 82.3 L784.2 81.7 L781.7 81.8 ZM789.1 84.4 L791.7 82.8 L789.3 81.3 L786.7 82.3 Z" fill="#080" stroke="#080" stroke-width="0.4"/><path d="M794.1 85.7 L796.8 83.2 L794.4 81.2 L791.7 82.8 Z" fill="#090" stroke="#090" stroke-width="0.4"/><path d="M803.9 89.1 L806.6 88.2 L804.3 86.0 L801.6 86.5 Z" fill="#0d0" stroke="#0d0" stroke-width="0.4"/><path d="M808.8 90.9 L811.3 92.5 L809.1 91.2 L806.6 88.2 Z" fill="#2f3" stroke="#2f3" stroke-width="0.4"/><path d="M716.8 82.0 L718.4 79.5 L715.6 82.8 L713.9 83.5 Z" fill="#080" stroke="#080" stroke-width="0.4"/><path d="M735.6 79.9 L737.5 79.7 L734.7 80.0 L732.7 79.6 Z" fill="#060" stroke="#060" stroke-width="0.4"/><path d="M754.8 82.8 L757.0 83.1 L754.3 86.0 L752.1 84.5 Z" fill="#090" stroke="#090" stroke-width="0.4"/><path d="M759.7 80.8 L761.9 80.5 L759.2 82.7 L757.0 83.1 Z" fill="#070" stroke="#070" stroke-width="0.4"/><path d="M779.3 82.7 L781.7 81.8 L779.2 80.9 L776.8 81.3 Z" fill="#080" stroke="#080" stroke-width="0.4"/><path d="M799.0 86.8 L801.6 86.5 L799.4 82.4 L796.8 83.2 Z" fill="#0a0" stroke="#0a0" stroke-width="0.4"/><path d="M709.4 86.3 L711.1 85.8 L708.3 89.4 L706.7 90.4 Z" fill="#1d2" stroke="#1d2" stroke-width="0.4"/><path d="M723.2 79.4 L725.0 79.8 L722.1 80.0 L720.2 79.7 ZM727.9 79.5 L729.8 79.9 L726.9 80.1 L725.0 79.8 Z" fill="#060" stroke="#060" stroke-width="0.4"/><path d="M747.3 83.3 L749.4 85.3 L746.5 82.9 L744.4 80.5 Z" fill="#090" stroke="#090" stroke-width="0.4"/><path d="M766.8 81.0 L769.1 80.7 L766.4 80.9 L764.2 80.6 Z" fill="#060" stroke="#060" stroke-width="0.4"/><path d="M786.7 82.3 L789.3 81.3 L786.7 81.3 L784.2 81.7 ZM791.7 82.8 L794.4 81.2 L791.8 81.4 L789.3 81.3 Z" fill="#070" stroke="#070" stroke-width="0.4"/><path d="M806.6 88.2 L809.1 91.2 L806.9 88.0 L804.3 86.0 Z" fill="#0c1" stroke="#0c1" stroke-width="0.4"/><path d="M705.1 90.6 L706.7 90.4 L703.9 93.8 L702.2 92.8 Z" fill="#5d6" stroke="#5d6" stroke-width="0.4"/><path d="M713.9 83.5 L715.6 82.8 L712.8 85.4 L711.1 85.8 Z" fill="#0a0" stroke="#0a0" stroke-width="0.4"/><path d="M718.4 79.5 L720.2 79.7 L717.3 80.4 L715.6 82.8 Z" fill="#070" stroke="#070" stroke-width="0.4"/><path d="M732.7 79.6 L734.7 80.0 L731.8 80.2 L729.8 79.9 ZM737.5 79.7 L739.5 80.1 L736.7 80.3 L734.7 80.0 ZM742.4 79.8 L744.4 80.5 L741.6 80.4 L739.5 80.1 Z" fill="#060" stroke="#060" stroke-width="0.4"/><path d="M752.1 84.5 L754.3 86.0 L751.5 85.9 L749.4 85.3 Z" fill="#0b0" stroke="#0b0" stroke-width="0.4"/><path d="M757.0 83.1 L759.2 82.7 L756.4 84.1 L754.3 86.0 Z" fill="#090" stroke="#090" stroke-width="0.4"/><path d="M761.9 80.5 L764.2 80.6 L761.4 81.4 L759.2 82.7 Z" fill="#070" stroke="#070" stroke-width="0.4"/><path d="M771.8 80.5 L774.1 80.8 L771.5 81.0 L769.1 80.7 ZM776.8 81.3 L779.2 80.9 L776.5 81.1 L774.1 80.8 Z" fill="#060" stroke="#060" stroke-width="0.4"/><path d="M781.7 81.8 L784.2 81.7 L781.6 81.9 L779.2 80.9 ZM796.8 83.2 L799.4 82.4 L797.0 81.5 L794.4 81.2 Z" fill="#070" stroke="#070" stroke-width="0.4"/><path d="M801.6 86.5 L804.3 86.0 L802.1 82.4 L799.4 82.4 Z" fill="#090" stroke="#090" stroke-width="0.4"/><path d="M811.3 92.5 L813.9 94.9 L811.5 94.6 L809.1 91.2 Z" fill="#5e6" stroke="#5e6" stroke-width="0.4"/><path d="M725.0 79.8 L726.9 80.1 L724.0 80.3 L722.1 80.0 ZM789.3 81.3 L791.8 81.4 L789.2 81.7 L786.7 81.3 Z" fill="#060" stroke="#060" stroke-width="0.4"/><path d="M702.2 92.8 L703.9 93.8 L700.8 93.3 L699.2 93.0 Z" fill="#6f8" stroke="#6f8" stroke-width="0.4"/><path d="M706.7 90.4 L708.3 89.4 L705.5 92.5 L703.9 93.8 Z" fill="#5e6" stroke="#5e6" stroke-width="0.4"/><path d="M711.1 85.8 L712.8 85.4 L709.9 87.7 L708.3 89.4 Z" fill="#0c1" stroke="#0c1" stroke-width="0.4"/><path d="M715.6 82.8 L717.3 80.4 L714.4 83.3 L712.8 85.4 Z" fill="#080" stroke="#080" stroke-width="0.4"/><path d="M720.2 79.7 L722.1 80.0 L719.1 80.2 L717.3 80.4 ZM729.8 79.9 L731.8 80.2 L728.9 80.4 L726.9 80.1 ZM734.7 80.0 L736.7 80.3 L733.8 80.5 L731.8 80.2 ZM739.5 80.1 L741.6 80.4 L738.7 80.6 L736.7 80.3 Z" fill="#060" stroke="#060" stroke-width="0.4"/><path d="M744.4 80.5 L746.5 82.9 L743.7 81.9 L741.6 80.4 Z" fill="#070" stroke="#070" stroke-width="0.4"/><path d="M749.4 85.3 L751.5 85.9 L748.7 83.7 L746.5 82.9 Z" fill="#0a0" stroke="#0a0" stroke-width="0.4"/><path d="M754.3 86.0 L756.4 84.1 L753.7 84.3 L751.5 85.9 Z" fill="#0b0" stroke="#0b0" stroke-width="0.4"/><path d="M759.2 82.7 L761.4 81.4 L758.7 82.4 L756.4 84.1 Z" fill="#080" stroke="#080" stroke-width="0.4"/><path d="M764.2 80.6 L766.4 80.9 L763.7 81.1 L761.4 81.4 ZM769.1 80.7 L771.5 81.0 L768.8 81.2 L766.4 80.9 ZM774.1 80.8 L776.5 81.1 L773.9 81.4 L771.5 81.0 ZM779.2 80.9 L781.6 81.9 L779.0 81.5 L776.5 81.1 ZM784.2 81.7 L786.7 81.3 L784.1 81.7 L781.6 81.9 ZM794.4 81.2 L797.0 81.5 L794.4 81.8 L791.8 81.4 Z" fill="#060" stroke="#060" stroke-width="0.4"/><path d="M799.4 82.4 L802.1 82.4 L799.6 81.9 L797.0 81.5 Z" fill="#070" stroke="#070" stroke-width="0.4"/><path d="M804.3 86.0 L806.9 88.0 L804.6 84.7 L802.1 82.4 Z" fill="#090" stroke="#090" stroke-width="0.4"/><path d="M809.1 91.2 L811.5 94.6 L809.4 90.7 L806.9 88.0 Z" fill="#1e2" stroke="#1e2" stroke-width="0.4"/><path d="M813.9 94.9 L816.6 96.2 L814.3 94.7 L811.5 94.6 ZM699.2 93.0 L700.8 93.3 L697.5 91.4 L696.1 92.8 ZM703.9 93.8 L705.5 92.5 L702.3 92.1 L700.8 93.3 Z" fill="#6f7" stroke="#6f7" stroke-width="0.4"/><path d="M708.3 89.4 L709.9 87.7 L707.0 90.4 L705.5 92.5 Z" fill="#3e4" stroke="#3e4" stroke-width="0.4"/><path d="M712.8 85.4 L714.4 83.3 L711.5 86.7 L709.9 87.7 Z" fill="#0b0" stroke="#0b0" stroke-width="0.4"/><path d="M717.3 80.4 L719.1 80.2 L716.1 81.9 L714.4 83.3 Z" fill="#070" stroke="#070" stroke-width="0.4"/><path d="M722.1 80.0 L724.0 80.3 L720.9 80.5 L719.1 80.2 ZM726.9 80.1 L728.9 80.4 L725.9 80.6 L724.0 80.3 ZM731.8 80.2 L733.8 80.5 L730.8 80.7 L728.9 80.4 ZM736.7 80.3 L738.7 80.6 L735.8 80.9 L733.8 80.5 ZM741.6 80.4 L743.7 81.9 L740.8 81.0 L738.7 80.6 Z" fill="#060" stroke="#060" stroke-width="0.4"/><path d="M746.5 82.9 L748.7 83.7 L745.8 82.6 L743.7 81.9 Z" fill="#080" stroke="#080" stroke-width="0.4"/><path d="M751.5 85.9 L753.7 84.3 L750.8 82.7 L748.7 83.7 Z" fill="#0a0" stroke="#0a0" stroke-width="0.4"/><path d="M756.4 84.1 L758.7 82.4 L755.9 82.9 L753.7 84.3 Z" fill="#090" stroke="#090" stroke-width="0.4"/><path d="M761.4 81.4 L763.7 81.1 L760.9 81.4 L758.7 82.4 ZM766.4 80.9 L768.8 81.2 L766.0 81.5 L763.7 81.1 ZM771.5 81.0 L773.9 81.4 L771.1 81.9 L768.8 81.2 ZM776.5 81.1 L779.0 81.5 L776.3 81.7 L773.9 81.4 ZM781.6 81.9 L784.1 81.7 L781.4 81.8 L779.0 81.5 ZM786.7 81.3 L789.2 81.7 L786.6 81.9 L784.1 81.7 ZM791.8 81.4 L794.4 81.8 L791.8 82.0 L789.2 81.7 ZM797.0 81.5 L799.6 81.9 L797.0 82.1 L794.4 81.8 Z" fill="#060" stroke="#060" stroke-width="0.4"/><path d="M802.1 82.4 L804.6 84.7 L802.2 84.0 L799.6 81.9 Z" fill="#070" stroke="#070" stroke-width="0.4"/><path d="M806.9 88.0 L809.4 90.7 L807.1 88.5 L804.6 84.7 Z" fill="#0b0" stroke="#0b0" stroke-width="0.4"/><path d="M811.5 94.6 L814.3 94.7 L812.1 92.5 L809.4 90.7 Z" fill="#4f5" stroke="#4f5" stroke-width="0.4"/><path d="M816.6 96.2 L819.4 96.0 L817.1 95.3 L814.3 94.7 Z" fill="#6f7" stroke="#6f7" stroke-width="0.4"/><path d="M696.1 92.8 L697.5 91.4 L694.4 91.8 L692.9 92.9 ZM700.8 93.3 L702.3 92.1 L699.1 90.6 L697.5 91.4 Z" fill="#5f7" stroke="#5f7" stroke-width="0.4"/><path d="M705.5 92.5 L707.0 90.4 L703.9 90.7 L702.3 92.1 Z" fill="#5f6" stroke="#5f6" stroke-width="0.4"/><path d="M714.4 83.3 L716.1 81.9 L713.3 85.7 L711.5 86.7 Z" fill="#090" stroke="#090" stroke-width="0.4"/><path d="M719.1 80.2 L720.9 80.5 L717.9 80.8 L716.1 81.9 ZM724.0 80.3 L725.9 80.6 L722.8 80.9 L720.9 80.5 ZM728.9 80.4 L730.8 80.7 L727.8 81.0 L725.9 80.6 ZM733.8 80.5 L735.8 80.9 L732.8 81.1 L730.8 80.7 ZM738.7 80.6 L740.8 81.0 L737.8 81.2 L735.8 80.9 Z" fill="#060" stroke="#060" stroke-width="0.4"/><path d="M743.7 81.9 L745.8 82.6 L742.9 82.1 L740.8 81.0 Z" fill="#070" stroke="#070" stroke-width="0.4"/><path d="M748.7 83.7 L750.8 82.7 L747.9 82.7 L745.8 82.6 ZM753.7 84.3 L755.9 82.9 L753.0 81.5 L750.8 82.7 Z" fill="#080" stroke="#080" stroke-width="0.4"/><path d="M758.7 82.4 L760.9 81.4 L758.1 81.6 L755.9 82.9 Z" fill="#070" stroke="#070" stroke-width="0.4"/><path d="M763.7 81.1 L766.0 81.5 L763.2 81.7 L760.9 81.4 ZM768.8 81.2 L771.1 81.9 L768.4 82.3 L766.0 81.5 ZM773.9 81.4 L776.3 81.7 L773.5 82.7 L771.1 81.9 ZM779.0 81.5 L781.4 81.8 L778.7 82.1 L776.3 81.7 ZM784.1 81.7 L786.6 81.9 L784.0 82.2 L781.4 81.8 ZM789.2 81.7 L791.8 82.0 L789.2 82.3 L786.6 81.9 ZM794.4 81.8 L797.0 82.1 L794.5 82.4 L791.8 82.0 ZM799.6 81.9 L802.2 84.0 L799.6 84.1 L797.0 82.1 Z" fill="#060" stroke="#060" stroke-width="0.4"/><path d="M809.4 90.7 L812.1 92.5 L809.7 91.3 L807.1 88.5 Z" fill="#1e1" stroke="#1e1" stroke-width="0.4"/><path d="M814.3 94.7 L817.1 95.3 L814.9 93.4 L812.1 92.5 Z" fill="#4f6" stroke="#4f6" stroke-width="0.4"/><path d="M819.4 96.0 L822.4 94.9 L819.9 96.3 L817.1 95.3 Z" fill="#5f7" stroke="#5f7" stroke-width="0.4"/><path d="M709.9 87.7 L711.5 86.7 L708.6 88.7 L707.0 90.4 Z" fill="#1d1" stroke="#1d1" stroke-width="0.4"/><path d="M804.6 84.7 L807.1 88.5 L804.7 87.3 L802.2 84.0 Z" fill="#090" stroke="#090" stroke-width="0.4"/><path d="M692.9 92.9 L694.4 91.8 L691.4 93.7 L689.7 92.2 Z" fill="#5f7" stroke="#5f7" stroke-width="0.4"/><path d="M697.5 91.4 L699.1 90.6 L695.9 89.9 L694.4 91.8 ZM702.3 92.1 L703.9 90.7 L700.7 90.7 L699.1 90.6 Z" fill="#4f5" stroke="#4f5" stroke-width="0.4"/><path d="M716.1 81.9 L717.9 80.8 L715.0 83.9 L713.3 85.7 Z" fill="#080" stroke="#080" stroke-width="0.4"/><path d="M720.9 80.5 L722.8 80.9 L719.8 81.1 L717.9 80.8 ZM730.8 80.7 L732.8 81.1 L729.8 81.3 L727.8 81.0 ZM735.8 80.9 L737.8 81.2 L734.9 81.4 L732.8 81.1 ZM740.8 81.0 L742.9 82.1 L740.0 82.8 L737.8 81.2 Z" fill="#060" stroke="#060" stroke-width="0.4"/><path d="M750.8 82.7 L753.0 81.5 L750.1 82.1 L747.9 82.7 ZM755.9 82.9 L758.1 81.6 L755.3 81.9 L753.0 81.5 Z" fill="#070" stroke="#070" stroke-width="0.4"/><path d="M760.9 81.4 L763.2 81.7 L760.4 82.0 L758.1 81.6 ZM771.1 81.9 L773.5 82.7 L770.8 82.4 L768.4 82.3 ZM776.3 81.7 L778.7 82.1 L776.0 82.7 L773.5 82.7 ZM781.4 81.8 L784.0 82.2 L781.3 82.4 L778.7 82.1 ZM791.8 82.0 L794.5 82.4 L791.8 82.6 L789.2 82.3 ZM797.0 82.1 L799.6 84.1 L797.1 82.8 L794.5 82.4 Z" fill="#060" stroke="#060" stroke-width="0.4"/><path d="M812.1 92.5 L814.9 93.4 L812.5 92.6 L809.7 91.3 Z" fill="#2f2" stroke="#2f2" stroke-width="0.4"/><path d="M817.1 95.3 L819.9 96.3 L817.7 93.7 L814.9 93.4 Z" fill="#5f6" stroke="#5f6" stroke-width="0.4"/><path d="M822.4 94.9 L825.3 95.2 L822.8 96.7 L819.9 96.3 Z" fill="#5e6" stroke="#5e6" stroke-width="0.4"/><path d="M707.0 90.4 L708.6 88.7 L705.4 88.7 L703.9 90.7 Z" fill="#1f2" stroke="#1f2" stroke-width="0.4"/><path d="M711.5 86.7 L713.3 85.7 L710.2 87.2 L708.6 88.7 Z" fill="#0c0" stroke="#0c0" stroke-width="0.4"/><path d="M725.9 80.6 L727.8 81.0 L724.8 81.2 L722.8 80.9 Z" fill="#060" stroke="#060" stroke-width="0.4"/><path d="M745.8 82.6 L747.9 82.7 L745.1 84.6 L742.9 82.1 Z" fill="#070" stroke="#070" stroke-width="0.4"/><path d="M766.0 81.5 L768.4 82.3 L765.6 82.1 L763.2 81.7 ZM786.6 81.9 L789.2 82.3 L786.5 82.5 L784.0 82.2 Z" fill="#060" stroke="#060" stroke-width="0.4"/><path d="M802.2 84.0 L804.7 87.3 L802.3 86.2 L799.6 84.1 Z" fill="#080" stroke="#080" stroke-width="0.4"/><path d="M807.1 88.5 L809.7 91.3 L807.4 89.4 L804.7 87.3 Z" fill="#0c0" stroke="#0c0" stroke-width="0.4"/><path d="M694.4 91.8 L695.9 89.9 L692.8 92.2 L691.4 93.7 Z" fill="#4e6" stroke="#4e6" stroke-width="0.4"/><path d="M699.1 90.6 L700.7 90.7 L697.4 89.4 L695.9 89.9 Z" fill="#2f3" stroke="#2f3" stroke-width="0.4"/><path d="M717.9 80.8 L719.8 81.1 L716.8 82.9 L715.0 83.9 Z" fill="#070" stroke="#070" stroke-width="0.4"/><path d="M732.8 81.1 L734.9 81.4 L731.8 81.7 L729.8 81.3 ZM737.8 81.2 L740.0 82.8 L737.0 82.5 L734.9 81.4 ZM753.0 81.5 L755.3 81.9 L752.4 83.3 L750.1 82.1 ZM758.1 81.6 L760.4 82.0 L757.5 82.2 L755.3 81.9 Z" fill="#060" stroke="#060" stroke-width="0.4"/><path d="M773.5 82.7 L776.0 82.7 L773.2 83.7 L770.8 82.4 Z" fill="#070" stroke="#070" stroke-width="0.4"/><path d="M778.7 82.1 L781.3 82.4 L778.5 82.7 L776.0 82.7 ZM794.5 82.4 L797.1 82.8 L794.5 83.0 L791.8 82.6 Z" fill="#060" stroke="#060" stroke-width="0.4"/><path d="M814.9 93.4 L817.7 93.7 L815.5 91.8 L812.5 92.6 Z" fill="#2f2" stroke="#2f2" stroke-width="0.4"/><path d="M819.9 96.3 L822.8 96.7 L820.4 96.6 L817.7 93.7 Z" fill="#5f6" stroke="#5f6" stroke-width="0.4"/><path d="M689.7 92.2 L691.4 93.7 L688.2 93.9 L686.5 92.6 Z" fill="#5f7" stroke="#5f7" stroke-width="0.4"/><path d="M703.9 90.7 L705.4 88.7 L702.3 88.5 L700.7 90.7 Z" fill="#1f2" stroke="#1f2" stroke-width="0.4"/><path d="M708.6 88.7 L710.2 87.2 L707.1 87.9 L705.4 88.7 Z" fill="#0e1" stroke="#0e1" stroke-width="0.4"/><path d="M713.3 85.7 L715.0 83.9 L711.9 85.3 L710.2 87.2 Z" fill="#0a0" stroke="#0a0" stroke-width="0.4"/><path d="M722.8 80.9 L724.8 81.2 L721.7 81.5 L719.8 81.1 ZM727.8 81.0 L729.8 81.3 L726.8 81.6 L724.8 81.2 Z" fill="#060" stroke="#060" stroke-width="0.4"/><path d="M742.9 82.1 L745.1 84.6 L742.1 85.6 L740.0 82.8 ZM747.9 82.7 L750.1 82.1 L747.2 86.0 L745.1 84.6 Z" fill="#070" stroke="#070" stroke-width="0.4"/><path d="M763.2 81.7 L765.6 82.1 L762.8 82.3 L760.4 82.0 ZM768.4 82.3 L770.8 82.4 L768.0 83.2 L765.6 82.1 ZM784.0 82.2 L786.5 82.5 L783.8 82.8 L781.3 82.4 ZM789.2 82.3 L791.8 82.6 L789.1 82.9 L786.5 82.5 Z" fill="#060" stroke="#060" stroke-width="0.4"/><path d="M799.6 84.1 L802.3 86.2 L799.8 83.4 L797.1 82.8 Z" fill="#070" stroke="#070" stroke-width="0.4"/><path d="M804.7 87.3 L807.4 89.4 L804.9 88.1 L802.3 86.2 Z" fill="#0a0" stroke="#0a0" stroke-width="0.4"/><path d="M809.7 91.3 L812.5 92.6 L810.1 91.0 L807.4 89.4 Z" fill="#1e1" stroke="#1e1" stroke-width="0.4"/><path d="M825.3 95.2 L828.0 98.8 L825.5 99.7 L822.8 96.7 Z" fill="#5d6" stroke="#5d6" stroke-width="0.4"/><path d="M695.9 89.9 L697.4 89.4 L694.3 90.6 L692.8 92.2 Z" fill="#2e3" stroke="#2e3" stroke-width="0.4"/><path d="M734.9 81.4 L737.0 82.5 L734.0 83.7 L731.8 81.7 ZM776.0 82.7 L778.5 82.7 L775.7 83.2 L773.2 83.7 Z" fill="#060" stroke="#060" stroke-width="0.4"/><path d="M817.7 93.7 L820.4 96.6 L818.2 94.1 L815.5 91.8 Z" fill="#2f3" stroke="#2f3" stroke-width="0.4"/><path d="M686.5 92.6 L688.2 93.9 L685.4 99.2 L684.5 104.8 Z" fill="#8b2" stroke="#8b2" stroke-width="0.4"/><path d="M691.4 93.7 L692.8 92.2 L689.7 94.3 L688.2 93.9 Z" fill="#5f7" stroke="#5f7" stroke-width="0.4"/><path d="M700.7 90.7 L702.3 88.5 L699.0 88.6 L697.4 89.4 Z" fill="#1f1" stroke="#1f1" stroke-width="0.4"/><path d="M705.4 88.7 L707.1 87.9 L703.9 87.3 L702.3 88.5 Z" fill="#0d1" stroke="#0d1" stroke-width="0.4"/><path d="M710.2 87.2 L711.9 85.3 L708.8 86.3 L707.1 87.9 Z" fill="#0b0" stroke="#0b0" stroke-width="0.4"/><path d="M719.8 81.1 L721.7 81.5 L718.6 82.7 L716.8 82.9 ZM724.8 81.2 L726.8 81.6 L723.7 83.3 L721.7 81.5 ZM729.8 81.3 L731.8 81.7 L728.8 82.8 L726.8 81.6 Z" fill="#060" stroke="#060" stroke-width="0.4"/><path d="M740.0 82.8 L742.1 85.6 L739.1 84.6 L737.0 82.5 Z" fill="#080" stroke="#080" stroke-width="0.4"/><path d="M745.1 84.6 L747.2 86.0 L744.3 86.8 L742.1 85.6 Z" fill="#090" stroke="#090" stroke-width="0.4"/><path d="M750.1 82.1 L752.4 83.3 L749.5 86.3 L747.2 86.0 Z" fill="#070" stroke="#070" stroke-width="0.4"/><path d="M755.3 81.9 L757.5 82.2 L754.6 83.9 L752.4 83.3 ZM760.4 82.0 L762.8 82.3 L759.9 82.7 L757.5 82.2 ZM765.6 82.1 L768.0 83.2 L765.1 82.7 L762.8 82.3 Z" fill="#060" stroke="#060" stroke-width="0.4"/><path d="M770.8 82.4 L773.2 83.7 L770.4 82.9 L768.0 83.2 Z" fill="#070" stroke="#070" stroke-width="0.4"/><path d="M781.3 82.4 L783.8 82.8 L781.1 83.1 L778.5 82.7 ZM786.5 82.5 L789.1 82.9 L786.4 83.2 L783.8 82.8 ZM791.8 82.6 L794.5 83.0 L791.8 83.3 L789.1 82.9 Z" fill="#060" stroke="#060" stroke-width="0.4"/><path d="M802.3 86.2 L804.9 88.1 L802.6 84.5 L799.8 83.4 Z" fill="#080" stroke="#080" stroke-width="0.4"/><path d="M807.4 89.4 L810.1 91.0 L807.7 89.6 L804.9 88.1 Z" fill="#0c0" stroke="#0c0" stroke-width="0.4"/><path d="M812.5 92.6 L815.5 91.8 L813.0 91.6 L810.1 91.0 Z" fill="#1f1" stroke="#1f1" stroke-width="0.4"/><path d="M822.8 96.7 L825.5 99.7 L823.2 98.7 L820.4 96.6 Z" fill="#5e7" stroke="#5e7" stroke-width="0.4"/><path d="M828.0 98.8 L829.9 109.4 L827.8 107.5 L825.5 99.7 Z" fill="#9c2" stroke="#9c2" stroke-width="0.4"/><path d="M715.0 83.9 L716.8 82.9 L713.7 84.1 L711.9 85.3 Z" fill="#090" stroke="#090" stroke-width="0.4"/><path d="M797.1 82.8 L799.8 83.4 L797.2 83.4 L794.5 83.0 Z" fill="#060" stroke="#060" stroke-width="0.4"/><path d="M684.5 104.8 L685.4 99.2 L681.6 94.2 L680.1 94.1 Z" fill="#9d2" stroke="#9d2" stroke-width="0.4"/><path d="M688.2 93.9 L689.7 94.3 L687.0 99.7 L685.4 99.2 Z" fill="#6c6" stroke="#6c6" stroke-width="0.4"/><path d="M697.4 89.4 L699.0 88.6 L695.9 89.7 L694.3 90.6 Z" fill="#1e1" stroke="#1e1" stroke-width="0.4"/><path d="M702.3 88.5 L703.9 87.3 L700.8 89.1 L699.0 88.6 Z" fill="#0d1" stroke="#0d1" stroke-width="0.4"/><path d="M707.1 87.9 L708.8 86.3 L705.6 86.1 L703.9 87.3 Z" fill="#0c0" stroke="#0c0" stroke-width="0.4"/><path d="M721.7 81.5 L723.7 83.3 L720.7 84.7 L718.6 82.7 ZM726.8 81.6 L728.8 82.8 L725.8 84.7 L723.7 83.3 ZM737.0 82.5 L739.1 84.6 L736.1 84.8 L734.0 83.7 Z" fill="#070" stroke="#070" stroke-width="0.4"/><path d="M742.1 85.6 L744.3 86.8 L741.3 86.6 L739.1 84.6 Z" fill="#090" stroke="#090" stroke-width="0.4"/><path d="M747.2 86.0 L749.5 86.3 L746.5 88.6 L744.3 86.8 Z" fill="#0a0" stroke="#0a0" stroke-width="0.4"/><path d="M762.8 82.3 L765.1 82.7 L762.3 83.0 L759.9 82.7 ZM768.0 83.2 L770.4 82.9 L767.6 83.1 L765.1 82.7 ZM773.2 83.7 L775.7 83.2 L772.9 83.2 L770.4 82.9 ZM783.8 82.8 L786.4 83.2 L783.7 83.4 L781.1 83.1 ZM789.1 82.9 L791.8 83.3 L789.1 83.6 L786.4 83.2 Z" fill="#060" stroke="#060" stroke-width="0.4"/><path d="M804.9 88.1 L807.7 89.6 L805.3 87.0 L802.6 84.5 Z" fill="#090" stroke="#090" stroke-width="0.4"/><path d="M810.1 91.0 L813.0 91.6 L810.5 90.8 L807.7 89.6 Z" fill="#0d0" stroke="#0d0" stroke-width="0.4"/><path d="M815.5 91.8 L818.2 94.1 L815.7 94.1 L813.0 91.6 Z" fill="#1e1" stroke="#1e1" stroke-width="0.4"/><path d="M825.5 99.7 L827.8 107.5 L825.6 106.3 L823.2 98.7 Z" fill="#8c2" stroke="#8c2" stroke-width="0.4"/><path d="M829.9 109.4 L833.9 100.9 L831.5 101.6 L827.8 107.5 Z" fill="#be2" stroke="#be2" stroke-width="0.4"/><path d="M692.8 92.2 L694.3 90.6 L691.2 92.5 L689.7 94.3 Z" fill="#4e5" stroke="#4e5" stroke-width="0.4"/><path d="M711.9 85.3 L713.7 84.1 L710.5 85.1 L708.8 86.3 Z" fill="#0a0" stroke="#0a0" stroke-width="0.4"/><path d="M716.8 82.9 L718.6 82.7 L715.5 83.6 L713.7 84.1 Z" fill="#080" stroke="#080" stroke-width="0.4"/><path d="M731.8 81.7 L734.0 83.7 L730.9 85.3 L728.8 82.8 Z" fill="#070" stroke="#070" stroke-width="0.4"/><path d="M752.4 83.3 L754.6 83.9 L751.7 85.8 L749.5 86.3 Z" fill="#080" stroke="#080" stroke-width="0.4"/><path d="M757.5 82.2 L759.9 82.7 L757.0 84.9 L754.6 83.9 ZM778.5 82.7 L781.1 83.1 L778.3 83.3 L775.7 83.2 ZM794.5 83.0 L797.2 83.4 L794.5 83.7 L791.8 83.3 ZM799.8 83.4 L802.6 84.5 L799.9 84.8 L797.2 83.4 Z" fill="#060" stroke="#060" stroke-width="0.4"/><path d="M820.4 96.6 L823.2 98.7 L820.8 98.9 L818.2 94.1 Z" fill="#5e6" stroke="#5e6" stroke-width="0.4"/><path d="M680.1 94.1 L681.6 94.2 L678.2 94.7 L676.7 93.8 Z" fill="#5f7" stroke="#5f7" stroke-width="0.4"/><path d="M685.4 99.2 L687.0 99.7 L683.2 95.1 L681.6 94.2 Z" fill="#6e7" stroke="#6e7" stroke-width="0.4"/><path d="M689.7 94.3 L691.2 92.5 L688.3 97.6 L687.0 99.7 Z" fill="#5d7" stroke="#5d7" stroke-width="0.4"/><path d="M694.3 90.6 L695.9 89.7 L692.7 91.8 L691.2 92.5 Z" fill="#2e2" stroke="#2e2" stroke-width="0.4"/><path d="M699.0 88.6 L700.8 89.1 L697.6 90.4 L695.9 89.7 Z" fill="#1d1" stroke="#1d1" stroke-width="0.4"/><path d="M703.9 87.3 L705.6 86.1 L702.4 88.0 L700.8 89.1 Z" fill="#0b0" stroke="#0b0" stroke-width="0.4"/><path d="M708.8 86.3 L710.5 85.1 L707.3 85.1 L705.6 86.1 Z" fill="#0a0" stroke="#0a0" stroke-width="0.4"/><path d="M713.7 84.1 L715.5 83.6 L712.2 83.1 L710.5 85.1 ZM718.6 82.7 L720.7 84.7 L717.5 84.7 L715.5 83.6 ZM723.7 83.3 L725.8 84.7 L722.7 86.9 L720.7 84.7 ZM728.8 82.8 L730.9 85.3 L727.9 86.5 L725.8 84.7 ZM734.0 83.7 L736.1 84.8 L733.0 85.0 L730.9 85.3 Z" fill="#080" stroke="#080" stroke-width="0.4"/><path d="M739.1 84.6 L741.3 86.6 L738.2 86.8 L736.1 84.8 Z" fill="#090" stroke="#090" stroke-width="0.4"/><path d="M744.3 86.8 L746.5 88.6 L743.5 88.3 L741.3 86.6 ZM749.5 86.3 L751.7 85.8 L748.7 87.9 L746.5 88.6 Z" fill="#0a0" stroke="#0a0" stroke-width="0.4"/><path d="M754.6 83.9 L757.0 84.9 L754.0 87.1 L751.7 85.8 Z" fill="#080" stroke="#080" stroke-width="0.4"/><path d="M759.9 82.7 L762.3 83.0 L759.3 85.8 L757.0 84.9 ZM765.1 82.7 L767.6 83.1 L764.7 83.6 L762.3 83.0 ZM770.4 82.9 L772.9 83.2 L770.1 83.5 L767.6 83.1 ZM775.7 83.2 L778.3 83.3 L775.5 83.6 L772.9 83.2 ZM781.1 83.1 L783.7 83.4 L780.9 84.1 L778.3 83.3 ZM786.4 83.2 L789.1 83.6 L786.3 83.8 L783.7 83.4 ZM791.8 83.3 L794.5 83.7 L791.8 83.9 L789.1 83.6 ZM797.2 83.4 L799.9 84.8 L797.2 85.7 L794.5 83.7 Z" fill="#060" stroke="#060" stroke-width="0.4"/><path d="M802.6 84.5 L805.3 87.0 L802.6 87.7 L799.9 84.8 Z" fill="#070" stroke="#070" stroke-width="0.4"/><path d="M807.7 89.6 L810.5 90.8 L808.0 90.2 L805.3 87.0 Z" fill="#0b0" stroke="#0b0" stroke-width="0.4"/><path d="M813.0 91.6 L815.7 94.1 L813.2 93.9 L810.5 90.8 Z" fill="#1d1" stroke="#1d1" stroke-width="0.4"/><path d="M818.2 94.1 L820.8 98.9 L818.5 97.1 L815.7 94.1 Z" fill="#4e5" stroke="#4e5" stroke-width="0.4"/><path d="M823.2 98.7 L825.6 106.3 L823.4 104.0 L820.8 98.9 Z" fill="#7c3" stroke="#7c3" stroke-width="0.4"/><path d="M827.8 107.5 L831.5 101.6 L829.1 102.4 L825.6 106.3 Z" fill="#be2" stroke="#be2" stroke-width="0.4"/><path d="M833.9 100.9 L837.3 99.6 L834.9 99.8 L831.5 101.6 Z" fill="#6f8" stroke="#6f8" stroke-width="0.4"/><path d="M741.3 86.6 L743.5 88.3 L740.4 87.1 L738.2 86.8 Z" fill="#0a0" stroke="#0a0" stroke-width="0.4"/><path d="M767.6 83.1 L770.1 83.5 L767.2 83.7 L764.7 83.6 Z" fill="#060" stroke="#060" stroke-width="0.4"/><path d="M676.7 93.8 L678.2 94.7 L674.8 94.4 L673.3 94.1 ZM681.6 94.2 L683.2 95.1 L679.7 94.4 L678.2 94.7 Z" fill="#5f7" stroke="#5f7" stroke-width="0.4"/><path d="M687.0 99.7 L688.3 97.6 L685.1 99.0 L683.2 95.1 Z" fill="#7e6" stroke="#7e6" stroke-width="0.4"/><path d="M691.2 92.5 L692.7 91.8 L689.6 95.0 L688.3 97.6 Z" fill="#5d6" stroke="#5d6" stroke-width="0.4"/><path d="M695.9 89.7 L697.6 90.4 L694.3 90.9 L692.7 91.8 Z" fill="#1e2" stroke="#1e2" stroke-width="0.4"/><path d="M700.8 89.1 L702.4 88.0 L699.2 89.4 L697.6 90.4 Z" fill="#0d1" stroke="#0d1" stroke-width="0.4"/><path d="M705.6 86.1 L707.3 85.1 L704.1 86.5 L702.4 88.0 Z" fill="#0a0" stroke="#0a0" stroke-width="0.4"/><path d="M710.5 85.1 L712.2 83.1 L709.0 83.7 L707.3 85.1 ZM715.5 83.6 L717.5 84.7 L714.2 84.0 L712.2 83.1 Z" fill="#080" stroke="#080" stroke-width="0.4"/><path d="M720.7 84.7 L722.7 86.9 L719.5 86.9 L717.5 84.7 ZM725.8 84.7 L727.9 86.5 L724.7 87.3 L722.7 86.9 ZM730.9 85.3 L733.0 85.0 L729.9 87.3 L727.9 86.5 ZM736.1 84.8 L738.2 86.8 L735.2 87.0 L733.0 85.0 Z" fill="#090" stroke="#090" stroke-width="0.4"/><path d="M746.5 88.6 L748.7 87.9 L745.7 88.9 L743.5 88.3 Z" fill="#0b0" stroke="#0b0" stroke-width="0.4"/><path d="M751.7 85.8 L754.0 87.1 L751.0 88.8 L748.7 87.9 Z" fill="#090" stroke="#090" stroke-width="0.4"/><path d="M757.0 84.9 L759.3 85.8 L756.4 88.7 L754.0 87.1 Z" fill="#080" stroke="#080" stroke-width="0.4"/><path d="M762.3 83.0 L764.7 83.6 L761.7 84.6 L759.3 85.8 Z" fill="#070" stroke="#070" stroke-width="0.4"/><path d="M772.9 83.2 L775.5 83.6 L772.6 83.9 L770.1 83.5 ZM778.3 83.3 L780.9 84.1 L778.1 84.0 L775.5 83.6 ZM783.7 83.4 L786.3 83.8 L783.5 85.3 L780.9 84.1 ZM789.1 83.6 L791.8 83.9 L789.0 84.5 L786.3 83.8 ZM794.5 83.7 L797.2 85.7 L794.6 85.0 L791.8 83.9 Z" fill="#060" stroke="#060" stroke-width="0.4"/><path d="M799.9 84.8 L802.6 87.7 L800.0 87.2 L797.2 85.7 Z" fill="#080" stroke="#080" stroke-width="0.4"/><path d="M805.3 87.0 L808.0 90.2 L805.5 88.2 L802.6 87.7 Z" fill="#090" stroke="#090" stroke-width="0.4"/><path d="M810.5 90.8 L813.2 93.9 L810.7 93.7 L808.0 90.2 Z" fill="#0c1" stroke="#0c1" stroke-width="0.4"/><path d="M815.7 94.1 L818.5 97.1 L816.0 96.7 L813.2 93.9 Z" fill="#3e4" stroke="#3e4" stroke-width="0.4"/><path d="M820.8 98.9 L823.4 104.0 L821.3 99.7 L818.5 97.1 Z" fill="#5e7" stroke="#5e7" stroke-width="0.4"/><path d="M825.6 106.3 L829.1 102.4 L826.5 104.2 L823.4 104.0 Z" fill="#ae2" stroke="#ae2" stroke-width="0.4"/><path d="M831.5 101.6 L834.9 99.8 L832.7 98.2 L829.1 102.4 Z" fill="#6f8" stroke="#6f8" stroke-width="0.4"/><path d="M837.3 99.6 L840.6 99.2 L838.2 99.2 L834.9 99.8 Z" fill="#6f7" stroke="#6f7" stroke-width="0.4"/><path d="M673.3 94.1 L674.8 94.4 L671.2 93.5 L670.0 95.7 ZM678.2 94.7 L679.7 94.4 L676.4 95.8 L674.8 94.4 Z" fill="#5f7" stroke="#5f7" stroke-width="0.4"/><path d="M683.2 95.1 L685.1 99.0 L681.4 96.1 L679.7 94.4 Z" fill="#5e7" stroke="#5e7" stroke-width="0.4"/><path d="M688.3 97.6 L689.6 95.0 L687.0 102.4 L685.1 99.0 Z" fill="#6c5" stroke="#6c5" stroke-width="0.4"/><path d="M692.7 91.8 L694.3 90.9 L691.1 93.2 L689.6 95.0 Z" fill="#3e4" stroke="#3e4" stroke-width="0.4"/><path d="M697.6 90.4 L699.2 89.4 L695.9 89.9 L694.3 90.9 Z" fill="#1e1" stroke="#1e1" stroke-width="0.4"/><path d="M702.4 88.0 L704.1 86.5 L700.9 89.0 L699.2 89.4 Z" fill="#0b0" stroke="#0b0" stroke-width="0.4"/><path d="M707.3 85.1 L709.0 83.7 L705.8 85.9 L704.1 86.5 Z" fill="#080" stroke="#080" stroke-width="0.4"/><path d="M712.2 83.1 L714.2 84.0 L710.8 83.1 L709.0 83.7 Z" fill="#070" stroke="#070" stroke-width="0.4"/><path d="M717.5 84.7 L719.5 86.9 L716.2 85.1 L714.2 84.0 Z" fill="#080" stroke="#080" stroke-width="0.4"/><path d="M722.7 86.9 L724.7 87.3 L721.5 86.2 L719.5 86.9 ZM727.9 86.5 L729.9 87.3 L726.7 86.8 L724.7 87.3 Z" fill="#0a0" stroke="#0a0" stroke-width="0.4"/><path d="M733.0 85.0 L735.2 87.0 L732.0 87.6 L729.9 87.3 Z" fill="#090" stroke="#090" stroke-width="0.4"/><path d="M738.2 86.8 L740.4 87.1 L737.3 87.1 L735.2 87.0 Z" fill="#0a0" stroke="#0a0" stroke-width="0.4"/><path d="M743.5 88.3 L745.7 88.9 L742.6 87.5 L740.4 87.1 ZM748.7 87.9 L751.0 88.8 L748.0 88.9 L745.7 88.9 Z" fill="#0b0" stroke="#0b0" stroke-width="0.4"/><path d="M754.0 87.1 L756.4 88.7 L753.4 92.3 L751.0 88.8 Z" fill="#0a0" stroke="#0a0" stroke-width="0.4"/><path d="M759.3 85.8 L761.7 84.6 L758.7 90.5 L756.4 88.7 Z" fill="#080" stroke="#080" stroke-width="0.4"/><path d="M764.7 83.6 L767.2 83.7 L764.2 85.3 L761.7 84.6 ZM770.1 83.5 L772.6 83.9 L769.7 84.1 L767.2 83.7 ZM775.5 83.6 L778.1 84.0 L775.2 84.3 L772.6 83.9 ZM780.9 84.1 L783.5 85.3 L780.7 85.6 L778.1 84.0 ZM786.3 83.8 L789.0 84.5 L786.2 85.8 L783.5 85.3 ZM791.8 83.9 L794.6 85.0 L791.8 84.6 L789.0 84.5 Z" fill="#060" stroke="#060" stroke-width="0.4"/><path d="M797.2 85.7 L800.0 87.2 L797.3 86.3 L794.6 85.0 Z" fill="#080" stroke="#080" stroke-width="0.4"/><path d="M802.6 87.7 L805.5 88.2 L802.9 87.8 L800.0 87.2 Z" fill="#090" stroke="#090" stroke-width="0.4"/><path d="M808.0 90.2 L810.7 93.7 L808.2 91.4 L805.5 88.2 Z" fill="#0b0" stroke="#0b0" stroke-width="0.4"/><path d="M813.2 93.9 L816.0 96.7 L813.5 95.7 L810.7 93.7 Z" fill="#2e2" stroke="#2e2" stroke-width="0.4"/><path d="M818.5 97.1 L821.3 99.7 L819.1 96.5 L816.0 96.7 Z" fill="#5f6" stroke="#5f6" stroke-width="0.4"/><path d="M823.4 104.0 L826.5 104.2 L824.0 103.9 L821.3 99.7 Z" fill="#8d4" stroke="#8d4" stroke-width="0.4"/><path d="M829.1 102.4 L832.7 98.2 L830.2 99.0 L826.5 104.2 Z" fill="#6e7" stroke="#6e7" stroke-width="0.4"/><path d="M834.9 99.8 L838.2 99.2 L835.8 99.3 L832.7 98.2 ZM840.6 99.2 L843.9 99.2 L841.4 100.7 L838.2 99.2 ZM670.0 95.7 L671.2 93.5 L667.7 94.7 L666.3 93.8 ZM674.8 94.4 L676.4 95.8 L672.8 95.5 L671.2 93.5 Z" fill="#5f7" stroke="#5f7" stroke-width="0.4"/><path d="M679.7 94.4 L681.4 96.1 L678.1 97.8 L676.4 95.8 Z" fill="#5e6" stroke="#5e6" stroke-width="0.4"/><path d="M685.1 99.0 L687.0 102.4 L683.1 97.8 L681.4 96.1 Z" fill="#7e6" stroke="#7e6" stroke-width="0.4"/><path d="M689.6 95.0 L691.1 93.2 L688.3 99.4 L687.0 102.4 Z" fill="#5d6" stroke="#5d6" stroke-width="0.4"/><path d="M694.3 90.9 L695.9 89.9 L692.7 92.2 L691.1 93.2 Z" fill="#1e2" stroke="#1e2" stroke-width="0.4"/><path d="M699.2 89.4 L700.9 89.0 L697.5 89.2 L695.9 89.9 Z" fill="#0d0" stroke="#0d0" stroke-width="0.4"/><path d="M704.1 86.5 L705.8 85.9 L702.7 88.7 L700.9 89.0 Z" fill="#0a0" stroke="#0a0" stroke-width="0.4"/><path d="M709.0 83.7 L710.8 83.1 L707.6 85.1 L705.8 85.9 ZM714.2 84.0 L716.2 85.1 L712.8 83.2 L710.8 83.1 Z" fill="#070" stroke="#070" stroke-width="0.4"/><path d="M719.5 86.9 L721.5 86.2 L718.1 84.6 L716.2 85.1 Z" fill="#090" stroke="#090" stroke-width="0.4"/><path d="M729.9 87.3 L732.0 87.6 L728.8 86.7 L726.7 86.8 ZM735.2 87.0 L737.3 87.1 L734.2 87.9 L732.0 87.6 ZM740.4 87.1 L742.6 87.5 L739.5 87.6 L737.3 87.1 Z" fill="#0a0" stroke="#0a0" stroke-width="0.4"/><path d="M745.7 88.9 L748.0 88.9 L744.9 89.0 L742.6 87.5 ZM751.0 88.8 L753.4 92.3 L750.3 92.1 L748.0 88.9 Z" fill="#0b0" stroke="#0b0" stroke-width="0.4"/><path d="M756.4 88.7 L758.7 90.5 L755.7 93.5 L753.4 92.3 Z" fill="#0b1" stroke="#0b1" stroke-width="0.4"/><path d="M761.7 84.6 L764.2 85.3 L761.2 91.8 L758.7 90.5 Z" fill="#080" stroke="#080" stroke-width="0.4"/><path d="M767.2 83.7 L769.7 84.1 L766.7 87.2 L764.2 85.3 ZM772.6 83.9 L775.2 84.3 L772.2 86.0 L769.7 84.1 ZM778.1 84.0 L780.7 85.6 L777.8 85.1 L775.2 84.3 ZM789.0 84.5 L791.8 84.6 L789.0 85.4 L786.2 85.8 Z" fill="#060" stroke="#060" stroke-width="0.4"/><path d="M794.6 85.0 L797.3 86.3 L794.5 87.2 L791.8 84.6 Z" fill="#070" stroke="#070" stroke-width="0.4"/><path d="M800.0 87.2 L802.9 87.8 L800.2 86.6 L797.3 86.3 Z" fill="#080" stroke="#080" stroke-width="0.4"/><path d="M805.5 88.2 L808.2 91.4 L805.8 88.2 L802.9 87.8 Z" fill="#090" stroke="#090" stroke-width="0.4"/><path d="M810.7 93.7 L813.5 95.7 L811.0 94.1 L808.2 91.4 Z" fill="#1e1" stroke="#1e1" stroke-width="0.4"/><path d="M816.0 96.7 L819.1 96.5 L816.5 96.3 L813.5 95.7 Z" fill="#3f4" stroke="#3f4" stroke-width="0.4"/><path d="M821.3 99.7 L824.0 103.9 L821.8 100.9 L819.1 96.5 Z" fill="#5e7" stroke="#5e7" stroke-width="0.4"/><path d="M826.5 104.2 L830.2 99.0 L827.5 101.1 L824.0 103.9 Z" fill="#6f8" stroke="#6f8" stroke-width="0.4"/><path d="M832.7 98.2 L835.8 99.3 L833.4 99.8 L830.2 99.0 ZM838.2 99.2 L841.4 100.7 L838.9 101.2 L835.8 99.3 Z" fill="#5f7" stroke="#5f7" stroke-width="0.4"/><path d="M843.9 99.2 L847.3 99.5 L844.7 101.4 L841.4 100.7 Z" fill="#5e7" stroke="#5e7" stroke-width="0.4"/><path d="M724.7 87.3 L726.7 86.8 L723.5 85.6 L721.5 86.2 Z" fill="#0a0" stroke="#0a0" stroke-width="0.4"/><path d="M783.5 85.3 L786.2 85.8 L783.3 86.8 L780.7 85.6 Z" fill="#070" stroke="#070" stroke-width="0.4"/><path d="M666.3 93.8 L667.7 94.7 L664.2 94.8 L662.8 94.4 Z" fill="#5f6" stroke="#5f6" stroke-width="0.4"/><path d="M671.2 93.5 L672.8 95.5 L669.1 94.2 L667.7 94.7 ZM676.4 95.8 L678.1 97.8 L674.4 96.9 L672.8 95.5 Z" fill="#5f7" stroke="#5f7" stroke-width="0.4"/><path d="M681.4 96.1 L683.1 97.8 L679.7 98.5 L678.1 97.8 Z" fill="#5e7" stroke="#5e7" stroke-width="0.4"/><path d="M687.0 102.4 L688.3 99.4 L685.1 102.5 L683.1 97.8 Z" fill="#9e2" stroke="#9e2" stroke-width="0.4"/><path d="M691.1 93.2 L692.7 92.2 L689.5 94.9 L688.3 99.4 Z" fill="#4e6" stroke="#4e6" stroke-width="0.4"/><path d="M695.9 89.9 L697.5 89.2 L694.2 90.1 L692.7 92.2 Z" fill="#0d1" stroke="#0d1" stroke-width="0.4"/><path d="M700.9 89.0 L702.7 88.7 L699.3 88.8 L697.5 89.2 Z" fill="#0c0" stroke="#0c0" stroke-width="0.4"/><path d="M705.8 85.9 L707.6 85.1 L704.4 87.9 L702.7 88.7 Z" fill="#090" stroke="#090" stroke-width="0.4"/><path d="M710.8 83.1 L712.8 83.2 L709.4 83.8 L707.6 85.1 Z" fill="#060" stroke="#060" stroke-width="0.4"/><path d="M716.2 85.1 L718.1 84.6 L714.7 83.6 L712.8 83.2 Z" fill="#070" stroke="#070" stroke-width="0.4"/><path d="M721.5 86.2 L723.5 85.6 L720.1 85.3 L718.1 84.6 Z" fill="#080" stroke="#080" stroke-width="0.4"/><path d="M726.7 86.8 L728.8 86.7 L725.5 85.9 L723.5 85.6 Z" fill="#090" stroke="#090" stroke-width="0.4"/><path d="M732.0 87.6 L734.2 87.9 L731.0 88.1 L728.8 86.7 ZM737.3 87.1 L739.5 87.6 L736.4 88.3 L734.2 87.9 ZM742.6 87.5 L744.9 89.0 L741.8 89.0 L739.5 87.6 Z" fill="#0a0" stroke="#0a0" stroke-width="0.4"/><path d="M748.0 88.9 L750.3 92.1 L747.2 91.3 L744.9 89.0 Z" fill="#0b0" stroke="#0b0" stroke-width="0.4"/><path d="M753.4 92.3 L755.7 93.5 L752.7 94.3 L750.3 92.1 Z" fill="#1e1" stroke="#1e1" stroke-width="0.4"/><path d="M758.7 90.5 L761.2 91.8 L758.1 94.4 L755.7 93.5 Z" fill="#1c1" stroke="#1c1" stroke-width="0.4"/><path d="M764.2 85.3 L766.7 87.2 L763.6 91.6 L761.2 91.8 Z" fill="#090" stroke="#090" stroke-width="0.4"/><path d="M769.7 84.1 L772.2 86.0 L769.2 88.5 L766.7 87.2 Z" fill="#070" stroke="#070" stroke-width="0.4"/><path d="M775.2 84.3 L777.8 85.1 L774.8 86.2 L772.2 86.0 Z" fill="#060" stroke="#060" stroke-width="0.4"/><path d="M780.7 85.6 L783.3 86.8 L780.4 88.5 L777.8 85.1 ZM786.2 85.8 L789.0 85.4 L786.1 87.2 L783.3 86.8 ZM791.8 84.6 L794.5 87.2 L791.7 88.0 L789.0 85.4 Z" fill="#070" stroke="#070" stroke-width="0.4"/><path d="M797.3 86.3 L800.2 86.6 L797.4 87.2 L794.5 87.2 ZM802.9 87.8 L805.8 88.2 L803.1 87.7 L800.2 86.6 Z" fill="#080" stroke="#080" stroke-width="0.4"/><path d="M808.2 91.4 L811.0 94.1 L808.6 90.6 L805.8 88.2 Z" fill="#0b0" stroke="#0b0" stroke-width="0.4"/><path d="M813.5 95.7 L816.5 96.3 L814.1 94.4 L811.0 94.1 Z" fill="#1f2" stroke="#1f2" stroke-width="0.4"/><path d="M819.1 96.5 L821.8 100.9 L819.7 95.7 L816.5 96.3 Z" fill="#3f4" stroke="#3f4" stroke-width="0.4"/><path d="M824.0 103.9 L827.5 101.1 L824.7 104.5 L821.8 100.9 Z" fill="#6f8" stroke="#6f8" stroke-width="0.4"/><path d="M830.2 99.0 L833.4 99.8 L830.8 100.6 L827.5 101.1 ZM835.8 99.3 L838.9 101.2 L836.6 100.5 L833.4 99.8 Z" fill="#5f7" stroke="#5f7" stroke-width="0.4"/><path d="M841.4 100.7 L844.7 101.4 L842.3 101.2 L838.9 101.2 Z" fill="#6f7" stroke="#6f7" stroke-width="0.4"/><path d="M847.3 99.5 L850.9 98.1 L848.3 100.7 L844.7 101.4 Z" fill="#5e6" stroke="#5e6" stroke-width="0.4"/><path d="M662.8 94.4 L664.2 94.8 L660.7 96.0 L659.1 94.6 ZM667.7 94.7 L669.1 94.2 L665.7 95.8 L664.2 94.8 Z" fill="#5f6" stroke="#5f6" stroke-width="0.4"/><path d="M672.8 95.5 L674.4 96.9 L670.8 96.2 L669.1 94.2 Z" fill="#5f7" stroke="#5f7" stroke-width="0.4"/><path d="M678.1 97.8 L679.7 98.5 L676.2 98.9 L674.4 96.9 Z" fill="#6f8" stroke="#6f8" stroke-width="0.4"/><path d="M692.7 92.2 L694.2 90.1 L690.8 91.2 L689.5 94.9 Z" fill="#1e1" stroke="#1e1" stroke-width="0.4"/><path d="M697.5 89.2 L699.3 88.8 L695.7 87.9 L694.2 90.1 Z" fill="#0c0" stroke="#0c0" stroke-width="0.4"/><path d="M707.6 85.1 L709.4 83.8 L706.2 87.3 L704.4 87.9 Z" fill="#080" stroke="#080" stroke-width="0.4"/><path d="M712.8 83.2 L714.7 83.6 L711.4 83.9 L709.4 83.8 Z" fill="#060" stroke="#060" stroke-width="0.4"/><path d="M734.2 87.9 L736.4 88.3 L733.1 87.6 L731.0 88.1 Z" fill="#0a0" stroke="#0a0" stroke-width="0.4"/><path d="M750.3 92.1 L752.7 94.3 L749.6 90.5 L747.2 91.3 Z" fill="#0d1" stroke="#0d1" stroke-width="0.4"/><path d="M755.7 93.5 L758.1 94.4 L755.1 91.4 L752.7 94.3 Z" fill="#1f1" stroke="#1f1" stroke-width="0.4"/><path d="M772.2 86.0 L774.8 86.2 L771.8 87.8 L769.2 88.5 ZM794.5 87.2 L797.4 87.2 L794.5 89.1 L791.7 88.0 Z" fill="#080" stroke="#080" stroke-width="0.4"/><path d="M800.2 86.6 L803.1 87.7 L800.2 89.4 L797.4 87.2 Z" fill="#070" stroke="#070" stroke-width="0.4"/><path d="M811.0 94.1 L814.1 94.4 L811.6 92.1 L808.6 90.6 Z" fill="#0c0" stroke="#0c0" stroke-width="0.4"/><path d="M816.5 96.3 L819.7 95.7 L817.0 96.7 L814.1 94.4 Z" fill="#1f2" stroke="#1f2" stroke-width="0.4"/><path d="M833.4 99.8 L836.6 100.5 L834.0 101.6 L830.8 100.6 Z" fill="#5f7" stroke="#5f7" stroke-width="0.4"/><path d="M838.9 101.2 L842.3 101.2 L839.9 101.4 L836.6 100.5 ZM844.7 101.4 L848.3 100.7 L845.8 101.3 L842.3 101.2 Z" fill="#6f7" stroke="#6f7" stroke-width="0.4"/><path d="M850.9 98.1 L854.3 99.4 L851.7 101.1 L848.3 100.7 Z" fill="#5e6" stroke="#5e6" stroke-width="0.4"/><path d="M683.1 97.8 L685.1 102.5 L681.2 98.3 L679.7 98.5 Z" fill="#6e7" stroke="#6e7" stroke-width="0.4"/><path d="M688.3 99.4 L689.5 94.9 L686.6 101.3 L685.1 102.5 Z" fill="#6d6" stroke="#6d6" stroke-width="0.4"/><path d="M702.7 88.7 L704.4 87.9 L701.0 88.2 L699.3 88.8 Z" fill="#0b0" stroke="#0b0" stroke-width="0.4"/><path d="M718.1 84.6 L720.1 85.3 L716.8 85.4 L714.7 83.6 Z" fill="#070" stroke="#070" stroke-width="0.4"/><path d="M723.5 85.6 L725.5 85.9 L722.3 86.8 L720.1 85.3 Z" fill="#080" stroke="#080" stroke-width="0.4"/><path d="M728.8 86.7 L731.0 88.1 L727.7 86.8 L725.5 85.9 Z" fill="#090" stroke="#090" stroke-width="0.4"/><path d="M739.5 87.6 L741.8 89.0 L738.6 89.0 L736.4 88.3 Z" fill="#0a0" stroke="#0a0" stroke-width="0.4"/><path d="M744.9 89.0 L747.2 91.3 L744.1 92.3 L741.8 89.0 Z" fill="#0b0" stroke="#0b0" stroke-width="0.4"/><path d="M761.2 91.8 L763.6 91.6 L760.6 94.2 L758.1 94.4 Z" fill="#1d1" stroke="#1d1" stroke-width="0.4"/><path d="M766.7 87.2 L769.2 88.5 L766.2 91.5 L763.6 91.6 Z" fill="#090" stroke="#090" stroke-width="0.4"/><path d="M777.8 85.1 L780.4 88.5 L777.4 89.0 L774.8 86.2 Z" fill="#070" stroke="#070" stroke-width="0.4"/><path d="M783.3 86.8 L786.1 87.2 L783.1 89.5 L780.4 88.5 Z" fill="#080" stroke="#080" stroke-width="0.4"/><path d="M789.0 85.4 L791.7 88.0 L788.8 89.5 L786.1 87.2 Z" fill="#070" stroke="#070" stroke-width="0.4"/><path d="M805.8 88.2 L808.6 90.6 L806.0 89.7 L803.1 87.7 Z" fill="#090" stroke="#090" stroke-width="0.4"/><path d="M821.8 100.9 L824.7 104.5 L822.0 106.0 L819.7 95.7 Z" fill="#5d6" stroke="#5d6" stroke-width="0.4"/><path d="M827.5 101.1 L830.8 100.6 L828.1 102.7 L824.7 104.5 Z" fill="#5e7" stroke="#5e7" stroke-width="0.4"/><path d="M659.1 94.6 L660.7 96.0 L657.2 97.5 L655.6 95.6 ZM664.2 94.8 L665.7 95.8 L662.3 98.3 L660.7 96.0 ZM669.1 94.2 L670.8 96.2 L667.3 98.0 L665.7 95.8 Z" fill="#5e6" stroke="#5e6" stroke-width="0.4"/><path d="M674.4 96.9 L676.2 98.9 L672.5 98.1 L670.8 96.2 Z" fill="#5f7" stroke="#5f7" stroke-width="0.4"/><path d="M679.7 98.5 L681.2 98.3 L677.6 98.3 L676.2 98.9 Z" fill="#6f8" stroke="#6f8" stroke-width="0.4"/><path d="M694.2 90.1 L695.7 87.9 L692.3 88.4 L690.8 91.2 ZM699.3 88.8 L701.0 88.2 L697.5 88.1 L695.7 87.9 Z" fill="#0b0" stroke="#0b0" stroke-width="0.4"/><path d="M704.4 87.9 L706.2 87.3 L702.9 89.4 L701.0 88.2 Z" fill="#0a0" stroke="#0a0" stroke-width="0.4"/><path d="M709.4 83.8 L711.4 83.9 L708.1 87.2 L706.2 87.3 Z" fill="#070" stroke="#070" stroke-width="0.4"/><path d="M714.7 83.6 L716.8 85.4 L713.5 86.1 L711.4 83.9 Z" fill="#060" stroke="#060" stroke-width="0.4"/><path d="M720.1 85.3 L722.3 86.8 L719.0 87.8 L716.8 85.4 ZM725.5 85.9 L727.7 86.8 L724.4 87.2 L722.3 86.8 Z" fill="#080" stroke="#080" stroke-width="0.4"/><path d="M736.4 88.3 L738.6 89.0 L735.4 89.6 L733.1 87.6 Z" fill="#0a0" stroke="#0a0" stroke-width="0.4"/><path d="M741.8 89.0 L744.1 92.3 L740.9 92.4 L738.6 89.0 Z" fill="#0b0" stroke="#0b0" stroke-width="0.4"/><path d="M747.2 91.3 L749.6 90.5 L746.5 93.6 L744.1 92.3 Z" fill="#0c0" stroke="#0c0" stroke-width="0.4"/><path d="M752.7 94.3 L755.1 91.4 L751.9 85.2 L749.6 90.5 Z" fill="#0b0" stroke="#0b0" stroke-width="0.4"/><path d="M758.1 94.4 L760.6 94.2 L757.5 93.4 L755.1 91.4 Z" fill="#1e1" stroke="#1e1" stroke-width="0.4"/><path d="M763.6 91.6 L766.2 91.5 L763.1 94.9 L760.6 94.2 Z" fill="#0c1" stroke="#0c1" stroke-width="0.4"/><path d="M769.2 88.5 L771.8 87.8 L768.8 91.3 L766.2 91.5 ZM780.4 88.5 L783.1 89.5 L780.2 88.8 L777.4 89.0 Z" fill="#090" stroke="#090" stroke-width="0.4"/><path d="M786.1 87.2 L788.8 89.5 L785.8 91.4 L783.1 89.5 Z" fill="#080" stroke="#080" stroke-width="0.4"/><path d="M791.7 88.0 L794.5 89.1 L791.6 90.4 L788.8 89.5 Z" fill="#090" stroke="#090" stroke-width="0.4"/><path d="M797.4 87.2 L800.2 89.4 L797.4 90.4 L794.5 89.1 Z" fill="#080" stroke="#080" stroke-width="0.4"/><path d="M803.1 87.7 L806.0 89.7 L803.2 89.6 L800.2 89.4 Z" fill="#090" stroke="#090" stroke-width="0.4"/><path d="M808.6 90.6 L811.6 92.1 L809.0 91.2 L806.0 89.7 Z" fill="#0a0" stroke="#0a0" stroke-width="0.4"/><path d="M814.1 94.4 L817.0 96.7 L814.4 96.4 L811.6 92.1 Z" fill="#1d1" stroke="#1d1" stroke-width="0.4"/><path d="M830.8 100.6 L834.0 101.6 L831.4 103.1 L828.1 102.7 Z" fill="#5e7" stroke="#5e7" stroke-width="0.4"/><path d="M836.6 100.5 L839.9 101.4 L837.4 101.8 L834.0 101.6 ZM842.3 101.2 L845.8 101.3 L843.2 102.7 L839.9 101.4 Z" fill="#5f7" stroke="#5f7" stroke-width="0.4"/><path d="M848.3 100.7 L851.7 101.1 L848.9 104.7 L845.8 101.3 Z" fill="#5e6" stroke="#5e6" stroke-width="0.4"/><path d="M854.3 99.4 L857.5 102.2 L855.0 104.1 L851.7 101.1 Z" fill="#5d6" stroke="#5d6" stroke-width="0.4"/><path d="M685.1 102.5 L686.6 101.3 L683.0 101.1 L681.2 98.3 Z" fill="#8e4" stroke="#8e4" stroke-width="0.4"/><path d="M689.5 94.9 L690.8 91.2 L687.6 95.1 L686.6 101.3 Z" fill="#4e5" stroke="#4e5" stroke-width="0.4"/><path d="M731.0 88.1 L733.1 87.6 L729.8 87.2 L727.7 86.8 Z" fill="#090" stroke="#090" stroke-width="0.4"/><path d="M774.8 86.2 L777.4 89.0 L774.5 89.5 L771.8 87.8 Z" fill="#080" stroke="#080" stroke-width="0.4"/><path d="M819.7 95.7 L822.0 106.0 L819.6 103.5 L817.0 96.7 Z" fill="#4d6" stroke="#4d6" stroke-width="0.4"/><path d="M824.7 104.5 L828.1 102.7 L825.1 107.0 L822.0 106.0 Z" fill="#7d3" stroke="#7d3" stroke-width="0.4"/><path d="M660.7 96.0 L662.3 98.3 L658.8 99.6 L657.2 97.5 Z" fill="#5e7" stroke="#5e7" stroke-width="0.4"/><path d="M665.7 95.8 L667.3 98.0 L663.9 99.7 L662.3 98.3 Z" fill="#5d6" stroke="#5d6" stroke-width="0.4"/><path d="M670.8 96.2 L672.5 98.1 L668.9 98.5 L667.3 98.0 Z" fill="#5e7" stroke="#5e7" stroke-width="0.4"/><path d="M839.9 101.4 L843.2 102.7 L840.8 102.6 L837.4 101.8 Z" fill="#5f7" stroke="#5f7" stroke-width="0.4"/><path d="M845.8 101.3 L848.9 104.7 L846.4 105.4 L843.2 102.7 ZM851.7 101.1 L855.0 104.1 L852.4 105.3 L848.9 104.7 Z" fill="#5d7" stroke="#5d7" stroke-width="0.4"/><path d="M655.6 95.6 L657.2 97.5 L653.5 98.3 L652.0 96.3 Z" fill="#5e7" stroke="#5e7" stroke-width="0.4"/><path d="M676.2 98.9 L677.6 98.3 L674.0 98.5 L672.5 98.1 Z" fill="#6f8" stroke="#6f8" stroke-width="0.4"/><path d="M681.2 98.3 L683.0 101.1 L679.3 99.8 L677.6 98.3 ZM686.6 101.3 L687.6 95.1 L684.7 101.9 L683.0 101.1 Z" fill="#6e7" stroke="#6e7" stroke-width="0.4"/><path d="M690.8 91.2 L692.3 88.4 L689.0 91.4 L687.6 95.1 Z" fill="#0c1" stroke="#0c1" stroke-width="0.4"/><path d="M695.7 87.9 L697.5 88.1 L694.0 87.8 L692.3 88.4 ZM701.0 88.2 L702.9 89.4 L699.4 88.4 L697.5 88.1 Z" fill="#0a0" stroke="#0a0" stroke-width="0.4"/><path d="M706.2 87.3 L708.1 87.2 L704.8 88.7 L702.9 89.4 Z" fill="#090" stroke="#090" stroke-width="0.4"/><path d="M711.4 83.9 L713.5 86.1 L710.1 87.4 L708.1 87.2 Z" fill="#070" stroke="#070" stroke-width="0.4"/><path d="M716.8 85.4 L719.0 87.8 L715.6 88.0 L713.5 86.1 Z" fill="#080" stroke="#080" stroke-width="0.4"/><path d="M722.3 86.8 L724.4 87.2 L721.0 87.2 L719.0 87.8 Z" fill="#090" stroke="#090" stroke-width="0.4"/><path d="M727.7 86.8 L729.8 87.2 L726.4 85.0 L724.4 87.2 Z" fill="#080" stroke="#080" stroke-width="0.4"/><path d="M733.1 87.6 L735.4 89.6 L732.0 87.5 L729.8 87.2 Z" fill="#090" stroke="#090" stroke-width="0.4"/><path d="M738.6 89.0 L740.9 92.4 L737.7 90.4 L735.4 89.6 Z" fill="#0b0" stroke="#0b0" stroke-width="0.4"/><path d="M744.1 92.3 L746.5 93.6 L743.3 93.1 L740.9 92.4 Z" fill="#0d1" stroke="#0d1" stroke-width="0.4"/><path d="M749.6 90.5 L751.9 85.2 L748.8 90.0 L746.5 93.6 Z" fill="#090" stroke="#090" stroke-width="0.4"/><path d="M755.1 91.4 L757.5 93.4 L754.4 89.0 L751.9 85.2 Z" fill="#0a0" stroke="#0a0" stroke-width="0.4"/><path d="M760.6 94.2 L763.1 94.9 L760.0 94.3 L757.5 93.4 Z" fill="#1e1" stroke="#1e1" stroke-width="0.4"/><path d="M766.2 91.5 L768.8 91.3 L765.7 92.8 L763.1 94.9 Z" fill="#0c0" stroke="#0c0" stroke-width="0.4"/><path d="M771.8 87.8 L774.5 89.5 L771.4 91.2 L768.8 91.3 ZM777.4 89.0 L780.2 88.8 L777.2 88.8 L774.5 89.5 Z" fill="#090" stroke="#090" stroke-width="0.4"/><path d="M783.1 89.5 L785.8 91.4 L782.9 90.0 L780.2 88.8 ZM788.8 89.5 L791.6 90.4 L788.7 90.2 L785.8 91.4 Z" fill="#0a0" stroke="#0a0" stroke-width="0.4"/><path d="M794.5 89.1 L797.4 90.4 L794.5 90.4 L791.6 90.4 ZM800.2 89.4 L803.2 89.6 L800.4 90.5 L797.4 90.4 ZM806.0 89.7 L809.0 91.2 L806.2 90.9 L803.2 89.6 Z" fill="#090" stroke="#090" stroke-width="0.4"/><path d="M811.6 92.1 L814.4 96.4 L811.9 94.0 L809.0 91.2 Z" fill="#0b0" stroke="#0b0" stroke-width="0.4"/><path d="M817.0 96.7 L819.6 103.5 L817.1 102.5 L814.4 96.4 Z" fill="#4d5" stroke="#4d5" stroke-width="0.4"/><path d="M822.0 106.0 L825.1 107.0 L822.2 110.7 L819.6 103.5 Z" fill="#9c2" stroke="#9c2" stroke-width="0.4"/><path d="M828.1 102.7 L831.4 103.1 L828.6 105.1 L825.1 107.0 Z" fill="#6d7" stroke="#6d7" stroke-width="0.4"/><path d="M834.0 101.6 L837.4 101.8 L834.8 102.5 L831.4 103.1 Z" fill="#5f7" stroke="#5f7" stroke-width="0.4"/><path d="M857.5 102.2 L860.9 104.8 L858.4 106.0 L855.0 104.1 Z" fill="#5e7" stroke="#5e7" stroke-width="0.4"/><path d="M662.3 98.3 L663.9 99.7 L660.1 99.7 L658.8 99.6 Z" fill="#6f8" stroke="#6f8" stroke-width="0.4"/><path d="M667.3 98.0 L668.9 98.5 L665.4 100.8 L663.9 99.7 Z" fill="#5e7" stroke="#5e7" stroke-width="0.4"/><path d="M672.5 98.1 L674.0 98.5 L670.4 99.3 L668.9 98.5 Z" fill="#6f7" stroke="#6f7" stroke-width="0.4"/><path d="M697.5 88.1 L699.4 88.4 L695.9 89.4 L694.0 87.8 Z" fill="#0a0" stroke="#0a0" stroke-width="0.4"/><path d="M713.5 86.1 L715.6 88.0 L712.1 88.4 L710.1 87.4 Z" fill="#080" stroke="#080" stroke-width="0.4"/><path d="M719.0 87.8 L721.0 87.2 L717.6 88.0 L715.6 88.0 Z" fill="#090" stroke="#090" stroke-width="0.4"/><path d="M740.9 92.4 L743.3 93.1 L740.0 91.8 L737.7 90.4 ZM746.5 93.6 L748.8 90.0 L745.6 92.4 L743.3 93.1 Z" fill="#0c0" stroke="#0c0" stroke-width="0.4"/><path d="M757.5 93.4 L760.0 94.3 L756.9 90.4 L754.4 89.0 Z" fill="#0b0" stroke="#0b0" stroke-width="0.4"/><path d="M763.1 94.9 L765.7 92.8 L762.6 92.6 L760.0 94.3 Z" fill="#0d1" stroke="#0d1" stroke-width="0.4"/><path d="M785.8 91.4 L788.7 90.2 L785.8 89.5 L782.9 90.0 ZM791.6 90.4 L794.5 90.4 L791.6 90.3 L788.7 90.2 ZM809.0 91.2 L811.9 94.0 L809.3 91.9 L806.2 90.9 Z" fill="#0a0" stroke="#0a0" stroke-width="0.4"/><path d="M837.4 101.8 L840.8 102.6 L838.4 101.9 L834.8 102.5 Z" fill="#5f7" stroke="#5f7" stroke-width="0.4"/><path d="M843.2 102.7 L846.4 105.4 L844.2 103.9 L840.8 102.6 Z" fill="#6f7" stroke="#6f7" stroke-width="0.4"/><path d="M848.9 104.7 L852.4 105.3 L849.8 107.2 L846.4 105.4 ZM657.2 97.5 L658.8 99.6 L655.0 99.4 L653.5 98.3 Z" fill="#6e7" stroke="#6e7" stroke-width="0.4"/><path d="M677.6 98.3 L679.3 99.8 L675.6 98.9 L674.0 98.5 Z" fill="#6f7" stroke="#6f7" stroke-width="0.4"/><path d="M683.0 101.1 L684.7 101.9 L681.3 104.0 L679.3 99.8 Z" fill="#7d4" stroke="#7d4" stroke-width="0.4"/><path d="M687.6 95.1 L689.0 91.4 L685.8 96.2 L684.7 101.9 Z" fill="#4d5" stroke="#4d5" stroke-width="0.4"/><path d="M692.3 88.4 L694.0 87.8 L690.7 91.6 L689.0 91.4 Z" fill="#0a0" stroke="#0a0" stroke-width="0.4"/><path d="M702.9 89.4 L704.8 88.7 L701.3 89.4 L699.4 88.4 Z" fill="#0b0" stroke="#0b0" stroke-width="0.4"/><path d="M708.1 87.2 L710.1 87.4 L706.7 89.7 L704.8 88.7 Z" fill="#090" stroke="#090" stroke-width="0.4"/><path d="M724.4 87.2 L726.4 85.0 L723.0 85.5 L721.0 87.2 Z" fill="#070" stroke="#070" stroke-width="0.4"/><path d="M729.8 87.2 L732.0 87.5 L728.6 85.9 L726.4 85.0 Z" fill="#080" stroke="#080" stroke-width="0.4"/><path d="M735.4 89.6 L737.7 90.4 L734.3 88.1 L732.0 87.5 Z" fill="#0a0" stroke="#0a0" stroke-width="0.4"/><path d="M751.9 85.2 L754.4 89.0 L751.2 92.1 L748.8 90.0 Z" fill="#080" stroke="#080" stroke-width="0.4"/><path d="M768.8 91.3 L771.4 91.2 L768.3 93.8 L765.7 92.8 Z" fill="#0b0" stroke="#0b0" stroke-width="0.4"/><path d="M774.5 89.5 L777.2 88.8 L774.1 90.9 L771.4 91.2 ZM780.2 88.8 L782.9 90.0 L780.0 88.8 L777.2 88.8 Z" fill="#090" stroke="#090" stroke-width="0.4"/><path d="M797.4 90.4 L800.4 90.5 L797.5 90.4 L794.5 90.4 Z" fill="#0a0" stroke="#0a0" stroke-width="0.4"/><path d="M803.2 89.6 L806.2 90.9 L803.5 89.5 L800.4 90.5 Z" fill="#090" stroke="#090" stroke-width="0.4"/><path d="M814.4 96.4 L817.1 102.5 L814.7 98.9 L811.9 94.0 Z" fill="#2e3" stroke="#2e3" stroke-width="0.4"/><path d="M819.6 103.5 L822.2 110.7 L820.0 105.8 L817.1 102.5 Z" fill="#7d5" stroke="#7d5" stroke-width="0.4"/><path d="M825.1 107.0 L828.6 105.1 L825.4 111.4 L822.2 110.7 Z" fill="#9c2" stroke="#9c2" stroke-width="0.4"/><path d="M831.4 103.1 L834.8 102.5 L832.0 104.9 L828.6 105.1 Z" fill="#5e7" stroke="#5e7" stroke-width="0.4"/><path d="M855.0 104.1 L858.4 106.0 L855.9 106.9 L852.4 105.3 Z" fill="#6e7" stroke="#6e7" stroke-width="0.4"/><path d="M663.9 99.7 L665.4 100.8 L661.6 100.6 L660.1 99.7 ZM846.4 105.4 L849.8 107.2 L847.5 106.5 L844.2 103.9 ZM658.8 99.6 L660.1 99.7 L656.3 99.8 L655.0 99.4 Z" fill="#6f8" stroke="#6f8" stroke-width="0.4"/><path d="M668.9 98.5 L670.4 99.3 L666.8 100.2 L665.4 100.8 Z" fill="#6e7" stroke="#6e7" stroke-width="0.4"/><path d="M674.0 98.5 L675.6 98.9 L672.1 100.7 L670.4 99.3 Z" fill="#5e7" stroke="#5e7" stroke-width="0.4"/><path d="M679.3 99.8 L681.3 104.0 L677.5 102.0 L675.6 98.9 Z" fill="#6e6" stroke="#6e6" stroke-width="0.4"/><path d="M684.7 101.9 L685.8 96.2 L683.0 104.2 L681.3 104.0 Z" fill="#6d5" stroke="#6d5" stroke-width="0.4"/><path d="M689.0 91.4 L690.7 91.6 L687.4 95.6 L685.8 96.2 Z" fill="#1d1" stroke="#1d1" stroke-width="0.4"/><path d="M694.0 87.8 L695.9 89.4 L692.6 92.8 L690.7 91.6 ZM699.4 88.4 L701.3 89.4 L697.8 90.6 L695.9 89.4 ZM704.8 88.7 L706.7 89.7 L703.2 90.4 L701.3 89.4 Z" fill="#0a0" stroke="#0a0" stroke-width="0.4"/><path d="M710.1 87.4 L712.1 88.4 L708.7 89.2 L706.7 89.7 ZM715.6 88.0 L717.6 88.0 L714.1 87.2 L712.1 88.4 Z" fill="#090" stroke="#090" stroke-width="0.4"/><path d="M721.0 87.2 L723.0 85.5 L719.6 86.3 L717.6 88.0 Z" fill="#080" stroke="#080" stroke-width="0.4"/><path d="M726.4 85.0 L728.6 85.9 L725.2 86.0 L723.0 85.5 Z" fill="#060" stroke="#060" stroke-width="0.4"/><path d="M732.0 87.5 L734.3 88.1 L730.9 87.2 L728.6 85.9 Z" fill="#080" stroke="#080" stroke-width="0.4"/><path d="M737.7 90.4 L740.0 91.8 L736.6 88.9 L734.3 88.1 Z" fill="#0a0" stroke="#0a0" stroke-width="0.4"/><path d="M743.3 93.1 L745.6 92.4 L742.3 91.9 L740.0 91.8 Z" fill="#0c0" stroke="#0c0" stroke-width="0.4"/><path d="M748.8 90.0 L751.2 92.1 L748.0 92.8 L745.6 92.4 Z" fill="#0b0" stroke="#0b0" stroke-width="0.4"/><path d="M754.4 89.0 L756.9 90.4 L753.7 93.0 L751.2 92.1 Z" fill="#090" stroke="#090" stroke-width="0.4"/><path d="M760.0 94.3 L762.6 92.6 L759.5 91.1 L756.9 90.4 ZM765.7 92.8 L768.3 93.8 L765.2 93.4 L762.6 92.6 Z" fill="#0c0" stroke="#0c0" stroke-width="0.4"/><path d="M771.4 91.2 L774.1 90.9 L771.0 92.4 L768.3 93.8 Z" fill="#0b0" stroke="#0b0" stroke-width="0.4"/><path d="M777.2 88.8 L780.0 88.8 L777.0 88.9 L774.1 90.9 Z" fill="#080" stroke="#080" stroke-width="0.4"/><path d="M782.9 90.0 L785.8 89.5 L782.9 87.9 L780.0 88.8 ZM788.7 90.2 L791.6 90.3 L788.8 89.1 L785.8 89.5 ZM794.5 90.4 L797.5 90.4 L794.6 90.7 L791.6 90.3 ZM800.4 90.5 L803.5 89.5 L800.6 90.2 L797.5 90.4 ZM806.2 90.9 L809.3 91.9 L806.5 92.0 L803.5 89.5 Z" fill="#090" stroke="#090" stroke-width="0.4"/><path d="M811.9 94.0 L814.7 98.9 L812.3 95.1 L809.3 91.9 Z" fill="#0c0" stroke="#0c0" stroke-width="0.4"/><path d="M817.1 102.5 L820.0 105.8 L817.8 101.3 L814.7 98.9 Z" fill="#5f7" stroke="#5f7" stroke-width="0.4"/><path d="M822.2 110.7 L825.4 111.4 L822.9 110.2 L820.0 105.8 Z" fill="#be2" stroke="#be2" stroke-width="0.4"/><path d="M828.6 105.1 L832.0 104.9 L829.1 107.8 L825.4 111.4 Z" fill="#8c2" stroke="#8c2" stroke-width="0.4"/><path d="M834.8 102.5 L838.4 101.9 L835.6 104.0 L832.0 104.9 Z" fill="#5e7" stroke="#5e7" stroke-width="0.4"/><path d="M840.8 102.6 L844.2 103.9 L841.8 102.9 L838.4 101.9 Z" fill="#5f7" stroke="#5f7" stroke-width="0.4"/><path d="M852.4 105.3 L855.9 106.9 L853.4 107.7 L849.8 107.2 Z" fill="#7e6" stroke="#7e6" stroke-width="0.4"/><path d="M665.4 100.8 L666.8 100.2 L663.1 101.0 L661.6 100.6 Z" fill="#6f8" stroke="#6f8" stroke-width="0.4"/><path d="M844.2 103.9 L847.5 106.5 L845.3 103.8 L841.8 102.9 Z" fill="#6f7" stroke="#6f7" stroke-width="0.4"/><path d="M660.1 99.7 L661.6 100.6 L657.7 100.0 L656.3 99.8 Z" fill="#6f8" stroke="#6f8" stroke-width="0.4"/><path d="M670.4 99.3 L672.1 100.7 L668.6 103.3 L666.8 100.2 Z" fill="#5d7" stroke="#5d7" stroke-width="0.4"/><path d="M675.6 98.9 L677.5 102.0 L673.7 101.8 L672.1 100.7 Z" fill="#6e7" stroke="#6e7" stroke-width="0.4"/><path d="M681.3 104.0 L683.0 104.2 L679.9 109.5 L677.5 102.0 Z" fill="#9c2" stroke="#9c2" stroke-width="0.4"/><path d="M685.8 96.2 L687.4 95.6 L684.1 98.9 L683.0 104.2 Z" fill="#5d6" stroke="#5d6" stroke-width="0.4"/><path d="M690.7 91.6 L692.6 92.8 L689.2 96.1 L687.4 95.6 Z" fill="#1c1" stroke="#1c1" stroke-width="0.4"/><path d="M695.9 89.4 L697.8 90.6 L694.4 93.2 L692.6 92.8 Z" fill="#0b0" stroke="#0b0" stroke-width="0.4"/><path d="M701.3 89.4 L703.2 90.4 L699.7 91.7 L697.8 90.6 ZM706.7 89.7 L708.7 89.2 L705.1 89.3 L703.2 90.4 Z" fill="#0a0" stroke="#0a0" stroke-width="0.4"/><path d="M712.1 88.4 L714.1 87.2 L710.7 89.6 L708.7 89.2 Z" fill="#090" stroke="#090" stroke-width="0.4"/><path d="M717.6 88.0 L719.6 86.3 L716.2 89.0 L714.1 87.2 Z" fill="#080" stroke="#080" stroke-width="0.4"/><path d="M723.0 85.5 L725.2 86.0 L721.8 87.2 L719.6 86.3 Z" fill="#060" stroke="#060" stroke-width="0.4"/><path d="M728.6 85.9 L730.9 87.2 L727.4 86.5 L725.2 86.0 Z" fill="#070" stroke="#070" stroke-width="0.4"/><path d="M734.3 88.1 L736.6 88.9 L733.2 87.7 L730.9 87.2 Z" fill="#080" stroke="#080" stroke-width="0.4"/><path d="M740.0 91.8 L742.3 91.9 L738.9 89.6 L736.6 88.9 Z" fill="#0a0" stroke="#0a0" stroke-width="0.4"/><path d="M745.6 92.4 L748.0 92.8 L744.7 92.3 L742.3 91.9 ZM751.2 92.1 L753.7 93.0 L750.5 94.0 L748.0 92.8 Z" fill="#0c0" stroke="#0c0" stroke-width="0.4"/><path d="M756.9 90.4 L759.5 91.1 L756.3 91.3 L753.7 93.0 Z" fill="#0a0" stroke="#0a0" stroke-width="0.4"/><path d="M762.6 92.6 L765.2 93.4 L762.1 92.3 L759.5 91.1 Z" fill="#0b0" stroke="#0b0" stroke-width="0.4"/><path d="M768.3 93.8 L771.0 92.4 L767.9 93.7 L765.2 93.4 Z" fill="#0c0" stroke="#0c0" stroke-width="0.4"/><path d="M774.1 90.9 L777.0 88.9 L773.8 90.5 L771.0 92.4 Z" fill="#090" stroke="#090" stroke-width="0.4"/><path d="M780.0 88.8 L782.9 87.9 L779.8 87.3 L777.0 88.9 Z" fill="#070" stroke="#070" stroke-width="0.4"/><path d="M785.8 89.5 L788.8 89.1 L785.8 87.5 L782.9 87.9 Z" fill="#080" stroke="#080" stroke-width="0.4"/><path d="M791.6 90.3 L794.6 90.7 L791.7 89.7 L788.8 89.1 ZM797.5 90.4 L800.6 90.2 L797.6 91.5 L794.6 90.7 Z" fill="#090" stroke="#090" stroke-width="0.4"/><path d="M803.5 89.5 L806.5 92.0 L803.5 93.7 L800.6 90.2 Z" fill="#080" stroke="#080" stroke-width="0.4"/><path d="M809.3 91.9 L812.3 95.1 L809.6 93.5 L806.5 92.0 Z" fill="#0a0" stroke="#0a0" stroke-width="0.4"/><path d="M814.7 98.9 L817.8 101.3 L815.3 97.8 L812.3 95.1 Z" fill="#1f2" stroke="#1f2" stroke-width="0.4"/><path d="M820.0 105.8 L822.9 110.2 L820.9 103.0 L817.8 101.3 Z" fill="#6e7" stroke="#6e7" stroke-width="0.4"/><path d="M825.4 111.4 L829.1 107.8 L825.9 114.3 L822.9 110.2 Z" fill="#bd2" stroke="#bd2" stroke-width="0.4"/><path d="M832.0 104.9 L835.6 104.0 L832.9 105.3 L829.1 107.8 Z" fill="#6e7" stroke="#6e7" stroke-width="0.4"/><path d="M838.4 101.9 L841.8 102.9 L839.1 104.4 L835.6 104.0 Z" fill="#5e6" stroke="#5e6" stroke-width="0.4"/><path d="M849.8 107.2 L853.4 107.7 L851.1 107.3 L847.5 106.5 Z" fill="#7f7" stroke="#7f7" stroke-width="0.4"/><path d="M661.6 100.6 L663.1 101.0 L659.2 100.6 L657.7 100.0 Z" fill="#6f8" stroke="#6f8" stroke-width="0.4"/><path d="M666.8 100.2 L668.6 103.3 L664.8 103.5 L663.1 101.0 Z" fill="#6d6" stroke="#6d6" stroke-width="0.4"/><path d="M672.1 100.7 L673.7 101.8 L670.2 104.0 L668.6 103.3 Z" fill="#7d5" stroke="#7d5" stroke-width="0.4"/><path d="M677.5 102.0 L679.9 109.5 L676.0 108.1 L673.7 101.8 Z" fill="#9c2" stroke="#9c2" stroke-width="0.4"/><path d="M683.0 104.2 L684.1 98.9 L680.9 104.3 L679.9 109.5 Z" fill="#8c2" stroke="#8c2" stroke-width="0.4"/><path d="M687.4 95.6 L689.2 96.1 L685.7 98.2 L684.1 98.9 Z" fill="#3e5" stroke="#3e5" stroke-width="0.4"/><path d="M692.6 92.8 L694.4 93.2 L690.9 95.6 L689.2 96.1 Z" fill="#1d1" stroke="#1d1" stroke-width="0.4"/><path d="M697.8 90.6 L699.7 91.7 L696.2 93.1 L694.4 93.2 Z" fill="#0b0" stroke="#0b0" stroke-width="0.4"/><path d="M703.2 90.4 L705.1 89.3 L701.5 90.3 L699.7 91.7 ZM708.7 89.2 L710.7 89.6 L707.1 89.2 L705.1 89.3 Z" fill="#0a0" stroke="#0a0" stroke-width="0.4"/><path d="M714.1 87.2 L716.2 89.0 L712.7 88.9 L710.7 89.6 Z" fill="#080" stroke="#080" stroke-width="0.4"/><path d="M719.6 86.3 L721.8 87.2 L718.3 88.1 L716.2 89.0 Z" fill="#070" stroke="#070" stroke-width="0.4"/><path d="M725.2 86.0 L727.4 86.5 L724.0 87.7 L721.8 87.2 Z" fill="#060" stroke="#060" stroke-width="0.4"/><path d="M730.9 87.2 L733.2 87.7 L729.7 88.0 L727.4 86.5 Z" fill="#070" stroke="#070" stroke-width="0.4"/><path d="M736.6 88.9 L738.9 89.6 L735.5 89.4 L733.2 87.7 Z" fill="#080" stroke="#080" stroke-width="0.4"/><path d="M742.3 91.9 L744.7 92.3 L741.4 91.6 L738.9 89.6 Z" fill="#0a0" stroke="#0a0" stroke-width="0.4"/><path d="M748.0 92.8 L750.5 94.0 L747.2 92.6 L744.7 92.3 Z" fill="#0c0" stroke="#0c0" stroke-width="0.4"/><path d="M753.7 93.0 L756.3 91.3 L753.0 91.5 L750.5 94.0 Z" fill="#0b0" stroke="#0b0" stroke-width="0.4"/><path d="M759.5 91.1 L762.1 92.3 L758.9 89.5 L756.3 91.3 Z" fill="#0a0" stroke="#0a0" stroke-width="0.4"/><path d="M765.2 93.4 L767.9 93.7 L764.7 91.8 L762.1 92.3 Z" fill="#0c0" stroke="#0c0" stroke-width="0.4"/><path d="M771.0 92.4 L773.8 90.5 L770.6 92.9 L767.9 93.7 Z" fill="#0a0" stroke="#0a0" stroke-width="0.4"/><path d="M777.0 88.9 L779.8 87.3 L776.7 87.7 L773.8 90.5 Z" fill="#070" stroke="#070" stroke-width="0.4"/><path d="M782.9 87.9 L785.8 87.5 L782.7 87.8 L779.8 87.3 Z" fill="#060" stroke="#060" stroke-width="0.4"/><path d="M788.8 89.1 L791.7 89.7 L788.8 87.9 L785.8 87.5 Z" fill="#070" stroke="#070" stroke-width="0.4"/><path d="M794.6 90.7 L797.6 91.5 L794.7 91.6 L791.7 89.7 ZM800.6 90.2 L803.5 93.7 L800.6 93.6 L797.6 91.5 Z" fill="#090" stroke="#090" stroke-width="0.4"/><path d="M806.5 92.0 L809.6 93.5 L806.6 94.9 L803.5 93.7 Z" fill="#0a0" stroke="#0a0" stroke-width="0.4"/><path d="M812.3 95.1 L815.3 97.8 L812.6 96.8 L809.6 93.5 Z" fill="#0c0" stroke="#0c0" stroke-width="0.4"/><path d="M817.8 101.3 L820.9 103.0 L818.4 100.2 L815.3 97.8 Z" fill="#3f4" stroke="#3f4" stroke-width="0.4"/><path d="M822.9 110.2 L825.9 114.3 L824.1 105.3 L820.9 103.0 Z" fill="#8d2" stroke="#8d2" stroke-width="0.4"/><path d="M829.1 107.8 L832.9 105.3 L829.6 111.9 L825.9 114.3 Z" fill="#9c2" stroke="#9c2" stroke-width="0.4"/><path d="M835.6 104.0 L839.1 104.4 L836.4 105.1 L832.9 105.3 Z" fill="#6f7" stroke="#6f7" stroke-width="0.4"/><path d="M841.8 102.9 L845.3 103.8 L842.7 104.3 L839.1 104.4 Z" fill="#5f7" stroke="#5f7" stroke-width="0.4"/><path d="M847.5 106.5 L851.1 107.3 L848.9 104.7 L845.3 103.8 Z" fill="#6f7" stroke="#6f7" stroke-width="0.4"/><path d="M668.6 103.3 L670.2 104.0 L666.4 104.5 L664.8 103.5 Z" fill="#9d2" stroke="#9d2" stroke-width="0.4"/><path d="M673.7 101.8 L676.0 108.1 L672.0 106.5 L670.2 104.0 Z" fill="#9c2" stroke="#9c2" stroke-width="0.4"/><path d="M679.9 109.5 L680.9 104.3 L677.4 106.8 L676.0 108.1 Z" fill="#ce2" stroke="#ce2" stroke-width="0.4"/><path d="M684.1 98.9 L685.7 98.2 L682.1 99.9 L680.9 104.3 Z" fill="#5e6" stroke="#5e6" stroke-width="0.4"/><path d="M689.2 96.1 L690.9 95.6 L687.4 97.7 L685.7 98.2 Z" fill="#3e3" stroke="#3e3" stroke-width="0.4"/><path d="M705.1 89.3 L707.1 89.2 L703.4 88.7 L701.5 90.3 ZM710.7 89.6 L712.7 88.9 L709.1 89.6 L707.1 89.2 Z" fill="#090" stroke="#090" stroke-width="0.4"/><path d="M721.8 87.2 L724.0 87.7 L720.4 87.4 L718.3 88.1 ZM727.4 86.5 L729.7 88.0 L726.3 88.9 L724.0 87.7 Z" fill="#070" stroke="#070" stroke-width="0.4"/><path d="M733.2 87.7 L735.5 89.4 L732.1 89.6 L729.7 88.0 Z" fill="#080" stroke="#080" stroke-width="0.4"/><path d="M750.5 94.0 L753.0 91.5 L749.7 90.0 L747.2 92.6 ZM767.9 93.7 L770.6 92.9 L767.5 91.8 L764.7 91.8 Z" fill="#0b0" stroke="#0b0" stroke-width="0.4"/><path d="M773.8 90.5 L776.7 87.7 L773.5 91.3 L770.6 92.9 Z" fill="#080" stroke="#080" stroke-width="0.4"/><path d="M779.8 87.3 L782.7 87.8 L779.6 88.1 L776.7 87.7 Z" fill="#060" stroke="#060" stroke-width="0.4"/><path d="M791.7 89.7 L794.7 91.6 L791.8 89.2 L788.8 87.9 Z" fill="#070" stroke="#070" stroke-width="0.4"/><path d="M797.6 91.5 L800.6 93.6 L797.7 93.7 L794.7 91.6 Z" fill="#090" stroke="#090" stroke-width="0.4"/><path d="M815.3 97.8 L818.4 100.2 L815.9 97.6 L812.6 96.8 Z" fill="#1e1" stroke="#1e1" stroke-width="0.4"/><path d="M820.9 103.0 L824.1 105.3 L821.7 101.6 L818.4 100.2 Z" fill="#5f6" stroke="#5f6" stroke-width="0.4"/><path d="M825.9 114.3 L829.6 111.9 L827.2 109.1 L824.1 105.3 Z" fill="#ae2" stroke="#ae2" stroke-width="0.4"/><path d="M832.9 105.3 L836.4 105.1 L833.4 108.7 L829.6 111.9 Z" fill="#6d6" stroke="#6d6" stroke-width="0.4"/><path d="M839.1 104.4 L842.7 104.3 L839.8 107.1 L836.4 105.1 Z" fill="#5e7" stroke="#5e7" stroke-width="0.4"/><path d="M663.1 101.0 L664.8 103.5 L661.0 103.5 L659.2 100.6 Z" fill="#6e7" stroke="#6e7" stroke-width="0.4"/><path d="M694.4 93.2 L696.2 93.1 L692.6 93.9 L690.9 95.6 Z" fill="#0d1" stroke="#0d1" stroke-width="0.4"/><path d="M699.7 91.7 L701.5 90.3 L697.9 90.7 L696.2 93.1 Z" fill="#0b0" stroke="#0b0" stroke-width="0.4"/><path d="M716.2 89.0 L718.3 88.1 L714.8 88.9 L712.7 88.9 Z" fill="#080" stroke="#080" stroke-width="0.4"/><path d="M738.9 89.6 L741.4 91.6 L738.0 92.0 L735.5 89.4 Z" fill="#090" stroke="#090" stroke-width="0.4"/><path d="M744.7 92.3 L747.2 92.6 L743.8 91.8 L741.4 91.6 Z" fill="#0b0" stroke="#0b0" stroke-width="0.4"/><path d="M756.3 91.3 L758.9 89.5 L755.6 88.6 L753.0 91.5 ZM762.1 92.3 L764.7 91.8 L761.5 88.0 L758.9 89.5 Z" fill="#090" stroke="#090" stroke-width="0.4"/><path d="M785.8 87.5 L788.8 87.9 L785.7 88.3 L782.7 87.8 Z" fill="#060" stroke="#060" stroke-width="0.4"/><path d="M803.5 93.7 L806.6 94.9 L803.7 95.4 L800.6 93.6 ZM809.6 93.5 L812.6 96.8 L809.8 96.4 L806.6 94.9 Z" fill="#0b0" stroke="#0b0" stroke-width="0.4"/><path d="M845.3 103.8 L848.9 104.7 L846.4 104.9 L842.7 104.3 Z" fill="#5f7" stroke="#5f7" stroke-width="0.4"/><path d="M670.2 104.0 L672.0 106.5 L668.0 104.9 L666.4 104.5 Z" fill="#9e2" stroke="#9e2" stroke-width="0.4"/><path d="M676.0 108.1 L677.4 106.8 L673.8 108.5 L672.0 106.5 Z" fill="#cf2" stroke="#cf2" stroke-width="0.4"/><path d="M680.9 104.3 L682.1 99.9 L678.6 102.7 L677.4 106.8 Z" fill="#6e6" stroke="#6e6" stroke-width="0.4"/><path d="M685.7 98.2 L687.4 97.7 L683.7 98.8 L682.1 99.9 Z" fill="#4f6" stroke="#4f6" stroke-width="0.4"/><path d="M690.9 95.6 L692.6 93.9 L688.8 93.6 L687.4 97.7 Z" fill="#1e1" stroke="#1e1" stroke-width="0.4"/><path d="M696.2 93.1 L697.9 90.7 L694.2 91.1 L692.6 93.9 Z" fill="#0b0" stroke="#0b0" stroke-width="0.4"/><path d="M701.5 90.3 L703.4 88.7 L699.6 87.8 L697.9 90.7 ZM707.1 89.2 L709.1 89.6 L705.3 88.2 L703.4 88.7 Z" fill="#090" stroke="#090" stroke-width="0.4"/><path d="M712.7 88.9 L714.8 88.9 L711.2 90.0 L709.1 89.6 Z" fill="#080" stroke="#080" stroke-width="0.4"/><path d="M718.3 88.1 L720.4 87.4 L716.9 88.1 L714.8 88.9 ZM724.0 87.7 L726.3 88.9 L722.6 87.2 L720.4 87.4 Z" fill="#070" stroke="#070" stroke-width="0.4"/><path d="M729.7 88.0 L732.1 89.6 L728.5 88.4 L726.3 88.9 Z" fill="#080" stroke="#080" stroke-width="0.4"/><path d="M735.5 89.4 L738.0 92.0 L734.5 92.2 L732.1 89.6 Z" fill="#090" stroke="#090" stroke-width="0.4"/><path d="M741.4 91.6 L743.8 91.8 L740.4 91.9 L738.0 92.0 Z" fill="#0a0" stroke="#0a0" stroke-width="0.4"/><path d="M747.2 92.6 L749.7 90.0 L746.3 89.2 L743.8 91.8 Z" fill="#090" stroke="#090" stroke-width="0.4"/><path d="M753.0 91.5 L755.6 88.6 L752.2 87.9 L749.7 90.0 Z" fill="#080" stroke="#080" stroke-width="0.4"/><path d="M758.9 89.5 L761.5 88.0 L758.2 88.1 L755.6 88.6 Z" fill="#070" stroke="#070" stroke-width="0.4"/><path d="M764.7 91.8 L767.5 91.8 L764.3 88.8 L761.5 88.0 Z" fill="#080" stroke="#080" stroke-width="0.4"/><path d="M770.6 92.9 L773.5 91.3 L770.3 91.2 L767.5 91.8 Z" fill="#0a0" stroke="#0a0" stroke-width="0.4"/><path d="M776.7 87.7 L779.6 88.1 L776.4 88.5 L773.5 91.3 ZM782.7 87.8 L785.7 88.3 L782.6 88.6 L779.6 88.1 ZM788.8 87.9 L791.8 89.2 L788.7 88.8 L785.7 88.3 Z" fill="#060" stroke="#060" stroke-width="0.4"/><path d="M794.7 91.6 L797.7 93.7 L794.9 89.7 L791.8 89.2 Z" fill="#080" stroke="#080" stroke-width="0.4"/><path d="M800.6 93.6 L803.7 95.4 L800.8 95.2 L797.7 93.7 Z" fill="#0b0" stroke="#0b0" stroke-width="0.4"/><path d="M806.6 94.9 L809.8 96.4 L806.8 97.3 L803.7 95.4 Z" fill="#0c0" stroke="#0c0" stroke-width="0.4"/><path d="M812.6 96.8 L815.9 97.6 L813.0 98.2 L809.8 96.4 Z" fill="#0d1" stroke="#0d1" stroke-width="0.4"/><path d="M818.4 100.2 L821.7 101.6 L819.3 97.9 L815.9 97.6 Z" fill="#1f2" stroke="#1f2" stroke-width="0.4"/><path d="M824.1 105.3 L827.2 109.1 L825.0 103.8 L821.7 101.6 Z" fill="#5f7" stroke="#5f7" stroke-width="0.4"/><path d="M829.6 111.9 L833.4 108.7 L830.5 111.4 L827.2 109.1 Z" fill="#ae2" stroke="#ae2" stroke-width="0.4"/><path d="M836.4 105.1 L839.8 107.1 L837.1 108.2 L833.4 108.7 Z" fill="#5e7" stroke="#5e7" stroke-width="0.4"/><path d="M664.8 103.5 L666.4 104.5 L662.1 101.5 L661.0 103.5 Z" fill="#7f6" stroke="#7f6" stroke-width="0.4"/><path d="M842.7 104.3 L846.4 104.9 L843.6 106.7 L839.8 107.1 Z" fill="#5e7" stroke="#5e7" stroke-width="0.4"/><path d="M672.0 106.5 L673.8 108.5 L669.9 108.7 L668.0 104.9 Z" fill="#ad2" stroke="#ad2" stroke-width="0.4"/><path d="M677.4 106.8 L678.6 102.7 L674.8 103.4 L673.8 108.5 Z" fill="#9d2" stroke="#9d2" stroke-width="0.4"/><path d="M682.1 99.9 L683.7 98.8 L680.0 100.1 L678.6 102.7 Z" fill="#5e6" stroke="#5e6" stroke-width="0.4"/><path d="M726.3 88.9 L728.5 88.4 L724.9 87.9 L722.6 87.2 Z" fill="#070" stroke="#070" stroke-width="0.4"/><path d="M773.5 91.3 L776.4 88.5 L773.2 90.0 L770.3 91.2 Z" fill="#080" stroke="#080" stroke-width="0.4"/><path d="M821.7 101.6 L825.0 103.8 L822.6 99.6 L819.3 97.9 Z" fill="#1f2" stroke="#1f2" stroke-width="0.4"/><path d="M827.2 109.1 L830.5 111.4 L828.2 107.5 L825.0 103.8 Z" fill="#6e8" stroke="#6e8" stroke-width="0.4"/><path d="M833.4 108.7 L837.1 108.2 L833.9 112.6 L830.5 111.4 Z" fill="#8c2" stroke="#8c2" stroke-width="0.4"/><path d="M666.4 104.5 L668.0 104.9 L663.5 101.2 L662.1 101.5 Z" fill="#6f8" stroke="#6f8" stroke-width="0.4"/><path d="M687.4 97.7 L688.8 93.6 L684.9 94.0 L683.7 98.8 Z" fill="#1e1" stroke="#1e1" stroke-width="0.4"/><path d="M692.6 93.9 L694.2 91.1 L690.3 90.9 L688.8 93.6 Z" fill="#0b0" stroke="#0b0" stroke-width="0.4"/><path d="M697.9 90.7 L699.6 87.8 L695.8 88.1 L694.2 91.1 Z" fill="#090" stroke="#090" stroke-width="0.4"/><path d="M703.4 88.7 L705.3 88.2 L701.5 87.5 L699.6 87.8 ZM709.1 89.6 L711.2 90.0 L707.4 88.9 L705.3 88.2 ZM714.8 88.9 L716.9 88.1 L713.3 89.8 L711.2 90.0 Z" fill="#080" stroke="#080" stroke-width="0.4"/><path d="M720.4 87.4 L722.6 87.2 L719.0 87.5 L716.9 88.1 Z" fill="#060" stroke="#060" stroke-width="0.4"/><path d="M732.1 89.6 L734.5 92.2 L731.0 91.2 L728.5 88.4 Z" fill="#080" stroke="#080" stroke-width="0.4"/><path d="M738.0 92.0 L740.4 91.9 L736.9 91.7 L734.5 92.2 Z" fill="#0a0" stroke="#0a0" stroke-width="0.4"/><path d="M743.8 91.8 L746.3 89.2 L742.8 89.9 L740.4 91.9 Z" fill="#090" stroke="#090" stroke-width="0.4"/><path d="M749.7 90.0 L752.2 87.9 L748.8 88.4 L746.3 89.2 Z" fill="#070" stroke="#070" stroke-width="0.4"/><path d="M755.6 88.6 L758.2 88.1 L754.9 88.4 L752.2 87.9 ZM761.5 88.0 L764.3 88.8 L760.9 88.5 L758.2 88.1 Z" fill="#060" stroke="#060" stroke-width="0.4"/><path d="M767.5 91.8 L770.3 91.2 L767.0 89.8 L764.3 88.8 Z" fill="#080" stroke="#080" stroke-width="0.4"/><path d="M779.6 88.1 L782.6 88.6 L779.4 89.0 L776.4 88.5 ZM785.7 88.3 L788.7 88.8 L785.6 89.1 L782.6 88.6 ZM791.8 89.2 L794.9 89.7 L791.8 89.3 L788.7 88.8 Z" fill="#060" stroke="#060" stroke-width="0.4"/><path d="M797.7 93.7 L800.8 95.2 L797.8 93.6 L794.9 89.7 Z" fill="#090" stroke="#090" stroke-width="0.4"/><path d="M803.7 95.4 L806.8 97.3 L803.9 96.9 L800.8 95.2 Z" fill="#0c0" stroke="#0c0" stroke-width="0.4"/><path d="M809.8 96.4 L813.0 98.2 L810.1 97.5 L806.8 97.3 Z" fill="#0d0" stroke="#0d0" stroke-width="0.4"/><path d="M815.9 97.6 L819.3 97.9 L816.3 99.2 L813.0 98.2 Z" fill="#0d1" stroke="#0d1" stroke-width="0.4"/><path d="M839.8 107.1 L843.6 106.7 L840.7 108.8 L837.1 108.2 Z" fill="#6f7" stroke="#6f7" stroke-width="0.4"/><path d="M673.8 108.5 L674.8 103.4 L670.9 103.4 L669.9 108.7 Z" fill="#9d2" stroke="#9d2" stroke-width="0.4"/><path d="M678.6 102.7 L680.0 100.1 L676.3 102.0 L674.8 103.4 Z" fill="#5f7" stroke="#5f7" stroke-width="0.4"/><path d="M683.7 98.8 L684.9 94.0 L681.4 97.6 L680.0 100.1 Z" fill="#2e3" stroke="#2e3" stroke-width="0.4"/><path d="M688.8 93.6 L690.3 90.9 L686.7 94.0 L684.9 94.0 Z" fill="#0b0" stroke="#0b0" stroke-width="0.4"/><path d="M694.2 91.1 L695.8 88.1 L692.1 89.3 L690.3 90.9 Z" fill="#090" stroke="#090" stroke-width="0.4"/><path d="M711.2 90.0 L713.3 89.8 L709.5 89.2 L707.4 88.9 Z" fill="#080" stroke="#080" stroke-width="0.4"/><path d="M716.9 88.1 L719.0 87.5 L715.4 88.2 L713.3 89.8 Z" fill="#070" stroke="#070" stroke-width="0.4"/><path d="M722.6 87.2 L724.9 87.9 L721.3 88.0 L719.0 87.5 Z" fill="#060" stroke="#060" stroke-width="0.4"/><path d="M728.5 88.4 L731.0 91.2 L727.3 89.8 L724.9 87.9 Z" fill="#070" stroke="#070" stroke-width="0.4"/><path d="M734.5 92.2 L736.9 91.7 L733.3 91.1 L731.0 91.2 ZM740.4 91.9 L742.8 89.9 L739.3 91.1 L736.9 91.7 Z" fill="#090" stroke="#090" stroke-width="0.4"/><path d="M758.2 88.1 L760.9 88.5 L757.6 89.0 L754.9 88.4 ZM764.3 88.8 L767.0 89.8 L763.7 89.0 L760.9 88.5 Z" fill="#060" stroke="#060" stroke-width="0.4"/><path d="M770.3 91.2 L773.2 90.0 L769.9 90.3 L767.0 89.8 Z" fill="#080" stroke="#080" stroke-width="0.4"/><path d="M776.4 88.5 L779.4 89.0 L776.1 89.3 L773.2 90.0 ZM782.6 88.6 L785.6 89.1 L782.4 89.5 L779.4 89.0 ZM788.7 88.8 L791.8 89.3 L788.7 89.7 L785.6 89.1 Z" fill="#060" stroke="#060" stroke-width="0.4"/><path d="M806.8 97.3 L810.1 97.5 L807.1 98.5 L803.9 96.9 Z" fill="#0d0" stroke="#0d0" stroke-width="0.4"/><path d="M813.0 98.2 L816.3 99.2 L813.4 99.1 L810.1 97.5 Z" fill="#0d1" stroke="#0d1" stroke-width="0.4"/><path d="M819.3 97.9 L822.6 99.6 L819.6 100.9 L816.3 99.2 Z" fill="#1d1" stroke="#1d1" stroke-width="0.4"/><path d="M825.0 103.8 L828.2 107.5 L825.6 105.5 L822.6 99.6 Z" fill="#4e6" stroke="#4e6" stroke-width="0.4"/><path d="M830.5 111.4 L833.9 112.6 L831.7 108.2 L828.2 107.5 Z" fill="#7e5" stroke="#7e5" stroke-width="0.4"/><path d="M668.0 104.9 L669.9 108.7 L666.7 114.5 L663.5 101.2 Z" fill="#9c2" stroke="#9c2" stroke-width="0.4"/><path d="M699.6 87.8 L701.5 87.5 L697.8 88.4 L695.8 88.1 ZM705.3 88.2 L707.4 88.9 L703.6 88.4 L701.5 87.5 ZM746.3 89.2 L748.8 88.4 L745.4 90.2 L742.8 89.9 Z" fill="#070" stroke="#070" stroke-width="0.4"/><path d="M752.2 87.9 L754.9 88.4 L751.4 89.0 L748.8 88.4 Z" fill="#060" stroke="#060" stroke-width="0.4"/><path d="M794.9 89.7 L797.8 93.6 L794.9 90.6 L791.8 89.3 Z" fill="#070" stroke="#070" stroke-width="0.4"/><path d="M800.8 95.2 L803.9 96.9 L801.0 95.4 L797.8 93.6 Z" fill="#0b0" stroke="#0b0" stroke-width="0.4"/><path d="M837.1 108.2 L840.7 108.8 L836.7 120.7 L833.9 112.6 Z" fill="#9c2" stroke="#9c2" stroke-width="0.4"/><path d="M674.8 103.4 L676.3 102.0 L672.4 102.5 L670.9 103.4 Z" fill="#6f7" stroke="#6f7" stroke-width="0.4"/><path d="M828.2 107.5 L831.7 108.2 L828.8 110.1 L825.6 105.5 Z" fill="#5e7" stroke="#5e7" stroke-width="0.4"/><path d="M669.9 108.7 L670.9 103.4 L666.6 101.5 L666.7 114.5 Z" fill="#9d2" stroke="#9d2" stroke-width="0.4"/><path d="M680.0 100.1 L681.4 97.6 L677.7 99.4 L676.3 102.0 Z" fill="#4f5" stroke="#4f5" stroke-width="0.4"/><path d="M684.9 94.0 L686.7 94.0 L682.8 94.4 L681.4 97.6 Z" fill="#0c0" stroke="#0c0" stroke-width="0.4"/><path d="M690.3 90.9 L692.1 89.3 L688.3 90.7 L686.7 94.0 Z" fill="#090" stroke="#090" stroke-width="0.4"/><path d="M695.8 88.1 L697.8 88.4 L693.9 88.8 L692.1 89.3 ZM701.5 87.5 L703.6 88.4 L699.8 88.4 L697.8 88.4 ZM707.4 88.9 L709.5 89.2 L705.7 88.1 L703.6 88.4 ZM713.3 89.8 L715.4 88.2 L711.6 88.2 L709.5 89.2 Z" fill="#070" stroke="#070" stroke-width="0.4"/><path d="M719.0 87.5 L721.3 88.0 L717.6 88.4 L715.4 88.2 ZM724.9 87.9 L727.3 89.8 L723.6 88.5 L721.3 88.0 Z" fill="#060" stroke="#060" stroke-width="0.4"/><path d="M731.0 91.2 L733.3 91.1 L729.7 90.1 L727.3 89.8 ZM736.9 91.7 L739.3 91.1 L735.7 89.3 L733.3 91.1 ZM742.8 89.9 L745.4 90.2 L741.8 90.3 L739.3 91.1 Z" fill="#080" stroke="#080" stroke-width="0.4"/><path d="M748.8 88.4 L751.4 89.0 L748.0 90.6 L745.4 90.2 ZM754.9 88.4 L757.6 89.0 L754.1 91.3 L751.4 89.0 ZM760.9 88.5 L763.7 89.0 L760.3 89.7 L757.6 89.0 Z" fill="#060" stroke="#060" stroke-width="0.4"/><path d="M767.0 89.8 L769.9 90.3 L766.5 90.1 L763.7 89.0 ZM773.2 90.0 L776.1 89.3 L772.8 90.1 L769.9 90.3 Z" fill="#070" stroke="#070" stroke-width="0.4"/><path d="M779.4 89.0 L782.4 89.5 L779.1 89.9 L776.1 89.3 ZM785.6 89.1 L788.7 89.7 L785.4 90.0 L782.4 89.5 ZM791.8 89.3 L794.9 90.6 L791.8 90.2 L788.7 89.7 Z" fill="#060" stroke="#060" stroke-width="0.4"/><path d="M797.8 93.6 L801.0 95.4 L798.1 92.4 L794.9 90.6 Z" fill="#090" stroke="#090" stroke-width="0.4"/><path d="M803.9 96.9 L807.1 98.5 L804.1 98.3 L801.0 95.4 Z" fill="#0c0" stroke="#0c0" stroke-width="0.4"/><path d="M810.1 97.5 L813.4 99.1 L810.5 98.7 L807.1 98.5 Z" fill="#0d1" stroke="#0d1" stroke-width="0.4"/><path d="M816.3 99.2 L819.6 100.9 L816.8 100.6 L813.4 99.1 Z" fill="#1e1" stroke="#1e1" stroke-width="0.4"/><path d="M822.6 99.6 L825.6 105.5 L822.8 105.6 L819.6 100.9 Z" fill="#2d3" stroke="#2d3" stroke-width="0.4"/><path d="M833.9 112.6 L836.7 120.7 L835.2 110.3 L831.7 108.2 Z" fill="#9d2" stroke="#9d2" stroke-width="0.4"/><path d="M676.3 102.0 L677.7 99.4 L673.9 102.1 L672.4 102.5 Z" fill="#5f6" stroke="#5f6" stroke-width="0.4"/><path d="M681.4 97.6 L682.8 94.4 L679.2 97.5 L677.7 99.4 Z" fill="#1e1" stroke="#1e1" stroke-width="0.4"/><path d="M686.7 94.0 L688.3 90.7 L684.5 92.9 L682.8 94.4 Z" fill="#0a0" stroke="#0a0" stroke-width="0.4"/><path d="M715.4 88.2 L717.6 88.4 L713.8 88.7 L711.6 88.2 Z" fill="#060" stroke="#060" stroke-width="0.4"/><path d="M733.3 91.1 L735.7 89.3 L732.1 90.3 L729.7 90.1 Z" fill="#080" stroke="#080" stroke-width="0.4"/><path d="M763.7 89.0 L766.5 90.1 L763.1 91.0 L760.3 89.7 ZM782.4 89.5 L785.4 90.0 L782.2 90.4 L779.1 89.9 Z" fill="#060" stroke="#060" stroke-width="0.4"/><path d="M813.4 99.1 L816.8 100.6 L813.9 100.3 L810.5 98.7 Z" fill="#0d1" stroke="#0d1" stroke-width="0.4"/><path d="M819.6 100.9 L822.8 105.6 L820.0 104.3 L816.8 100.6 Z" fill="#2e3" stroke="#2e3" stroke-width="0.4"/><path d="M825.6 105.5 L828.8 110.1 L826.0 110.2 L822.8 105.6 Z" fill="#5d6" stroke="#5d6" stroke-width="0.4"/><path d="M670.9 103.4 L672.4 102.5 L668.2 101.8 L666.6 101.5 Z" fill="#6f7" stroke="#6f7" stroke-width="0.4"/><path d="M692.1 89.3 L693.9 88.8 L690.2 91.2 L688.3 90.7 Z" fill="#080" stroke="#080" stroke-width="0.4"/><path d="M697.8 88.4 L699.8 88.4 L696.0 89.6 L693.9 88.8 Z" fill="#070" stroke="#070" stroke-width="0.4"/><path d="M703.6 88.4 L705.7 88.1 L701.8 88.4 L699.8 88.4 ZM709.5 89.2 L711.6 88.2 L707.8 88.6 L705.7 88.1 ZM721.3 88.0 L723.6 88.5 L719.9 88.9 L717.6 88.4 Z" fill="#060" stroke="#060" stroke-width="0.4"/><path d="M727.3 89.8 L729.7 90.1 L726.0 89.0 L723.6 88.5 ZM739.3 91.1 L741.8 90.3 L738.2 89.5 L735.7 89.3 ZM745.4 90.2 L748.0 90.6 L744.4 90.6 L741.8 90.3 ZM751.4 89.0 L754.1 91.3 L750.6 92.4 L748.0 90.6 Z" fill="#070" stroke="#070" stroke-width="0.4"/><path d="M757.6 89.0 L760.3 89.7 L756.9 92.8 L754.1 91.3 Z" fill="#060" stroke="#060" stroke-width="0.4"/><path d="M769.9 90.3 L772.8 90.1 L769.4 91.5 L766.5 90.1 Z" fill="#070" stroke="#070" stroke-width="0.4"/><path d="M776.1 89.3 L779.1 89.9 L775.8 90.2 L772.8 90.1 ZM788.7 89.7 L791.8 90.2 L788.6 90.6 L785.4 90.0 Z" fill="#060" stroke="#060" stroke-width="0.4"/><path d="M794.9 90.6 L798.1 92.4 L795.0 90.7 L791.8 90.2 Z" fill="#070" stroke="#070" stroke-width="0.4"/><path d="M801.0 95.4 L804.1 98.3 L801.3 95.0 L798.1 92.4 Z" fill="#0a0" stroke="#0a0" stroke-width="0.4"/><path d="M807.1 98.5 L810.5 98.7 L807.5 98.0 L804.1 98.3 Z" fill="#0d0" stroke="#0d0" stroke-width="0.4"/><path d="M831.7 108.2 L835.2 110.3 L832.4 111.1 L828.8 110.1 Z" fill="#6e7" stroke="#6e7" stroke-width="0.4"/><path d="M672.4 102.5 L673.9 102.1 L670.1 103.7 L668.2 101.8 Z" fill="#5f7" stroke="#5f7" stroke-width="0.4"/><path d="M677.7 99.4 L679.2 97.5 L675.6 101.7 L673.9 102.1 Z" fill="#3e4" stroke="#3e4" stroke-width="0.4"/><path d="M682.8 94.4 L684.5 92.9 L681.0 98.4 L679.2 97.5 Z" fill="#0b0" stroke="#0b0" stroke-width="0.4"/><path d="M688.3 90.7 L690.2 91.2 L686.4 93.5 L684.5 92.9 Z" fill="#090" stroke="#090" stroke-width="0.4"/><path d="M693.9 88.8 L696.0 89.6 L692.1 90.9 L690.2 91.2 Z" fill="#070" stroke="#070" stroke-width="0.4"/><path d="M699.8 88.4 L701.8 88.4 L697.9 88.9 L696.0 89.6 ZM705.7 88.1 L707.8 88.6 L703.9 88.9 L701.8 88.4 ZM711.6 88.2 L713.8 88.7 L710.0 89.1 L707.8 88.6 ZM717.6 88.4 L719.9 88.9 L716.1 89.2 L713.8 88.7 ZM723.6 88.5 L726.0 89.0 L722.2 89.4 L719.9 88.9 Z" fill="#060" stroke="#060" stroke-width="0.4"/><path d="M729.7 90.1 L732.1 90.3 L728.4 89.5 L726.0 89.0 Z" fill="#070" stroke="#070" stroke-width="0.4"/><path d="M735.7 89.3 L738.2 89.5 L734.6 90.3 L732.1 90.3 Z" fill="#060" stroke="#060" stroke-width="0.4"/><path d="M741.8 90.3 L744.4 90.6 L740.8 90.0 L738.2 89.5 ZM748.0 90.6 L750.6 92.4 L747.1 93.1 L744.4 90.6 Z" fill="#070" stroke="#070" stroke-width="0.4"/><path d="M754.1 91.3 L756.9 92.8 L753.4 94.5 L750.6 92.4 Z" fill="#080" stroke="#080" stroke-width="0.4"/><path d="M760.3 89.7 L763.1 91.0 L759.7 92.2 L756.9 92.8 ZM766.5 90.1 L769.4 91.5 L766.0 91.9 L763.1 91.0 Z" fill="#070" stroke="#070" stroke-width="0.4"/><path d="M772.8 90.1 L775.8 90.2 L772.4 91.3 L769.4 91.5 ZM779.1 89.9 L782.2 90.4 L778.9 90.8 L775.8 90.2 ZM785.4 90.0 L788.6 90.6 L785.3 90.9 L782.2 90.4 ZM791.8 90.2 L795.0 90.7 L791.8 91.1 L788.6 90.6 Z" fill="#060" stroke="#060" stroke-width="0.4"/><path d="M798.1 92.4 L801.3 95.0 L798.3 92.2 L795.0 90.7 Z" fill="#070" stroke="#070" stroke-width="0.4"/><path d="M804.1 98.3 L807.5 98.0 L804.5 97.9 L801.3 95.0 Z" fill="#0b0" stroke="#0b0" stroke-width="0.4"/><path d="M810.5 98.7 L813.9 100.3 L810.9 99.3 L807.5 98.0 Z" fill="#0d0" stroke="#0d0" stroke-width="0.4"/><path d="M816.8 100.6 L820.0 104.3 L817.0 104.6 L813.9 100.3 Z" fill="#1e2" stroke="#1e2" stroke-width="0.4"/><path d="M822.8 105.6 L826.0 110.2 L823.2 109.5 L820.0 104.3 Z" fill="#5e6" stroke="#5e6" stroke-width="0.4"/><path d="M828.8 110.1 L832.4 111.1 L829.5 111.9 L826.0 110.2 Z" fill="#6f8" stroke="#6f8" stroke-width="0.4"/><path d="M679.2 97.5 L681.0 98.4 L677.4 102.6 L675.6 101.7 Z" fill="#2d3" stroke="#2d3" stroke-width="0.4"/><path d="M820.0 104.3 L823.2 109.5 L820.3 109.3 L817.0 104.6 Z" fill="#4d6" stroke="#4d6" stroke-width="0.4"/><path d="M684.5 92.9 L686.4 93.5 L682.8 97.9 L681.0 98.4 Z" fill="#0a0" stroke="#0a0" stroke-width="0.4"/><path d="M690.2 91.2 L692.1 90.9 L688.2 92.9 L686.4 93.5 Z" fill="#090" stroke="#090" stroke-width="0.4"/><path d="M696.0 89.6 L697.9 88.9 L694.0 90.0 L692.1 90.9 Z" fill="#070" stroke="#070" stroke-width="0.4"/><path d="M701.8 88.4 L703.9 88.9 L700.0 89.3 L697.9 88.9 ZM707.8 88.6 L710.0 89.1 L706.1 89.4 L703.9 88.9 ZM719.9 88.9 L722.2 89.4 L718.4 89.7 L716.1 89.2 ZM726.0 89.0 L728.4 89.5 L724.6 90.6 L722.2 89.4 ZM738.2 89.5 L740.8 90.0 L737.2 92.3 L734.6 90.3 Z" fill="#060" stroke="#060" stroke-width="0.4"/><path d="M744.4 90.6 L747.1 93.1 L743.5 92.3 L740.8 90.0 Z" fill="#070" stroke="#070" stroke-width="0.4"/><path d="M750.6 92.4 L753.4 94.5 L749.8 95.7 L747.1 93.1 ZM756.9 92.8 L759.7 92.2 L756.1 93.5 L753.4 94.5 Z" fill="#080" stroke="#080" stroke-width="0.4"/><path d="M769.4 91.5 L772.4 91.3 L769.0 92.3 L766.0 91.9 Z" fill="#070" stroke="#070" stroke-width="0.4"/><path d="M775.8 90.2 L778.9 90.8 L775.4 92.0 L772.4 91.3 ZM788.6 90.6 L791.8 91.1 L788.5 92.8 L785.3 90.9 ZM795.0 90.7 L798.3 92.2 L795.1 91.7 L791.8 91.1 Z" fill="#060" stroke="#060" stroke-width="0.4"/><path d="M801.3 95.0 L804.5 97.9 L801.4 97.0 L798.3 92.2 Z" fill="#090" stroke="#090" stroke-width="0.4"/><path d="M807.5 98.0 L810.9 99.3 L807.7 100.8 L804.5 97.9 Z" fill="#0b0" stroke="#0b0" stroke-width="0.4"/><path d="M813.9 100.3 L817.0 104.6 L814.3 102.1 L810.9 99.3 Z" fill="#1d1" stroke="#1d1" stroke-width="0.4"/><path d="M673.9 102.1 L675.6 101.7 L671.9 105.2 L670.1 103.7 Z" fill="#5e6" stroke="#5e6" stroke-width="0.4"/><path d="M713.8 88.7 L716.1 89.2 L712.2 89.6 L710.0 89.1 Z" fill="#060" stroke="#060" stroke-width="0.4"/><path d="M732.1 90.3 L734.6 90.3 L730.9 91.6 L728.4 89.5 ZM763.1 91.0 L766.0 91.9 L762.5 91.4 L759.7 92.2 Z" fill="#070" stroke="#070" stroke-width="0.4"/><path d="M782.2 90.4 L785.3 90.9 L781.9 92.5 L778.9 90.8 Z" fill="#060" stroke="#060" stroke-width="0.4"/><path d="M826.0 110.2 L829.5 111.9 L826.6 112.3 L823.2 109.5 Z" fill="#6f8" stroke="#6f8" stroke-width="0.4"/><path d="M675.6 101.7 L677.4 102.6 L673.7 106.3 L671.9 105.2 Z" fill="#5d6" stroke="#5d6" stroke-width="0.4"/><path d="M681.0 98.4 L682.8 97.9 L679.1 101.7 L677.4 102.6 Z" fill="#2d2" stroke="#2d2" stroke-width="0.4"/><path d="M686.4 93.5 L688.2 92.9 L684.4 95.9 L682.8 97.9 Z" fill="#0a0" stroke="#0a0" stroke-width="0.4"/><path d="M692.1 90.9 L694.0 90.0 L690.1 92.5 L688.2 92.9 Z" fill="#080" stroke="#080" stroke-width="0.4"/><path d="M697.9 88.9 L700.0 89.3 L696.0 90.2 L694.0 90.0 ZM703.9 88.9 L706.1 89.4 L702.1 89.8 L700.0 89.3 ZM710.0 89.1 L712.2 89.6 L708.3 90.0 L706.1 89.4 ZM716.1 89.2 L718.4 89.7 L714.5 90.1 L712.2 89.6 ZM722.2 89.4 L724.6 90.6 L720.8 90.3 L718.4 89.7 ZM728.4 89.5 L730.9 91.6 L727.1 92.2 L724.6 90.6 Z" fill="#060" stroke="#060" stroke-width="0.4"/><path d="M734.6 90.3 L737.2 92.3 L733.5 93.8 L730.9 91.6 ZM740.8 90.0 L743.5 92.3 L739.8 94.1 L737.2 92.3 Z" fill="#070" stroke="#070" stroke-width="0.4"/><path d="M747.1 93.1 L749.8 95.7 L746.2 95.8 L743.5 92.3 Z" fill="#080" stroke="#080" stroke-width="0.4"/><path d="M753.4 94.5 L756.1 93.5 L752.6 95.5 L749.8 95.7 Z" fill="#090" stroke="#090" stroke-width="0.4"/><path d="M759.7 92.2 L762.5 91.4 L759.0 93.9 L756.1 93.5 ZM766.0 91.9 L769.0 92.3 L765.5 94.2 L762.5 91.4 ZM772.4 91.3 L775.4 92.0 L772.0 93.0 L769.0 92.3 Z" fill="#070" stroke="#070" stroke-width="0.4"/><path d="M778.9 90.8 L781.9 92.5 L778.5 93.4 L775.4 92.0 Z" fill="#060" stroke="#060" stroke-width="0.4"/><path d="M785.3 90.9 L788.5 92.8 L785.1 93.7 L781.9 92.5 Z" fill="#070" stroke="#070" stroke-width="0.4"/><path d="M791.8 91.1 L795.1 91.7 L791.7 93.8 L788.5 92.8 Z" fill="#060" stroke="#060" stroke-width="0.4"/><path d="M798.3 92.2 L801.4 97.0 L798.3 96.2 L795.1 91.7 Z" fill="#070" stroke="#070" stroke-width="0.4"/><path d="M804.5 97.9 L807.7 100.8 L804.6 101.5 L801.4 97.0 Z" fill="#0b0" stroke="#0b0" stroke-width="0.4"/><path d="M810.9 99.3 L814.3 102.1 L811.2 102.7 L807.7 100.8 Z" fill="#0c1" stroke="#0c1" stroke-width="0.4"/><path d="M817.0 104.6 L820.3 109.3 L817.4 108.0 L814.3 102.1 Z" fill="#3e4" stroke="#3e4" stroke-width="0.4"/><path d="M823.2 109.5 L826.6 112.3 L823.6 112.9 L820.3 109.3 Z" fill="#5e7" stroke="#5e7" stroke-width="0.4"/><path d="M682.8 97.9 L684.4 95.9 L680.8 101.3 L679.1 101.7 Z" fill="#1d1" stroke="#1d1" stroke-width="0.4"/><path d="M688.2 92.9 L690.1 92.5 L686.3 95.2 L684.4 95.9 Z" fill="#090" stroke="#090" stroke-width="0.4"/><path d="M694.0 90.0 L696.0 90.2 L692.2 93.2 L690.1 92.5 Z" fill="#070" stroke="#070" stroke-width="0.4"/><path d="M700.0 89.3 L702.1 89.8 L698.1 90.2 L696.0 90.2 Z" fill="#060" stroke="#060" stroke-width="0.4"/><path d="M743.5 92.3 L746.2 95.8 L742.5 94.8 L739.8 94.1 Z" fill="#080" stroke="#080" stroke-width="0.4"/><path d="M749.8 95.7 L752.6 95.5 L748.9 96.8 L746.2 95.8 Z" fill="#0a0" stroke="#0a0" stroke-width="0.4"/><path d="M795.1 91.7 L798.3 96.2 L794.9 97.6 L791.7 93.8 Z" fill="#070" stroke="#070" stroke-width="0.4"/><path d="M801.4 97.0 L804.6 101.5 L801.5 99.8 L798.3 96.2 Z" fill="#0a0" stroke="#0a0" stroke-width="0.4"/><path d="M807.7 100.8 L811.2 102.7 L808.1 102.2 L804.6 101.5 Z" fill="#0d1" stroke="#0d1" stroke-width="0.4"/><path d="M814.3 102.1 L817.4 108.0 L814.5 105.7 L811.2 102.7 Z" fill="#1e2" stroke="#1e2" stroke-width="0.4"/><path d="M677.4 102.6 L679.1 101.7 L675.3 105.1 L673.7 106.3 Z" fill="#5e6" stroke="#5e6" stroke-width="0.4"/><path d="M706.1 89.4 L708.3 90.0 L704.3 90.3 L702.1 89.8 ZM712.2 89.6 L714.5 90.1 L710.6 90.8 L708.3 90.0 ZM718.4 89.7 L720.8 90.3 L716.9 91.5 L714.5 90.1 Z" fill="#060" stroke="#060" stroke-width="0.4"/><path d="M724.6 90.6 L727.1 92.2 L723.3 92.8 L720.8 90.3 Z" fill="#070" stroke="#070" stroke-width="0.4"/><path d="M730.9 91.6 L733.5 93.8 L729.7 93.9 L727.1 92.2 ZM737.2 92.3 L739.8 94.1 L736.0 93.3 L733.5 93.8 ZM756.1 93.5 L759.0 93.9 L755.4 96.0 L752.6 95.5 Z" fill="#080" stroke="#080" stroke-width="0.4"/><path d="M762.5 91.4 L765.5 94.2 L761.9 94.8 L759.0 93.9 ZM769.0 92.3 L772.0 93.0 L768.5 94.7 L765.5 94.2 ZM775.4 92.0 L778.5 93.4 L775.1 92.1 L772.0 93.0 ZM781.9 92.5 L785.1 93.7 L781.7 94.4 L778.5 93.4 ZM788.5 92.8 L791.7 93.8 L788.4 94.5 L785.1 93.7 Z" fill="#070" stroke="#070" stroke-width="0.4"/><path d="M820.3 109.3 L823.6 112.9 L820.8 111.2 L817.4 108.0 Z" fill="#5e7" stroke="#5e7" stroke-width="0.4"/><path d="M684.4 95.9 L686.3 95.2 L682.6 100.2 L680.8 101.3 Z" fill="#0b0" stroke="#0b0" stroke-width="0.4"/><path d="M690.1 92.5 L692.2 93.2 L688.2 95.8 L686.3 95.2 Z" fill="#090" stroke="#090" stroke-width="0.4"/><path d="M696.0 90.2 L698.1 90.2 L694.1 92.4 L692.2 93.2 Z" fill="#070" stroke="#070" stroke-width="0.4"/><path d="M702.1 89.8 L704.3 90.3 L700.3 90.7 L698.1 90.2 ZM708.3 90.0 L710.6 90.8 L706.6 91.2 L704.3 90.3 ZM714.5 90.1 L716.9 91.5 L713.1 94.2 L710.6 90.8 Z" fill="#060" stroke="#060" stroke-width="0.4"/><path d="M727.1 92.2 L729.7 93.9 L725.9 95.5 L723.3 92.8 ZM733.5 93.8 L736.0 93.3 L732.3 96.7 L729.7 93.9 Z" fill="#080" stroke="#080" stroke-width="0.4"/><path d="M739.8 94.1 L742.5 94.8 L738.7 94.9 L736.0 93.3 Z" fill="#090" stroke="#090" stroke-width="0.4"/><path d="M746.2 95.8 L748.9 96.8 L745.2 95.1 L742.5 94.8 ZM752.6 95.5 L755.4 96.0 L751.7 97.6 L748.9 96.8 Z" fill="#0a0" stroke="#0a0" stroke-width="0.4"/><path d="M759.0 93.9 L761.9 94.8 L758.3 97.0 L755.4 96.0 ZM765.5 94.2 L768.5 94.7 L764.9 96.5 L761.9 94.8 Z" fill="#080" stroke="#080" stroke-width="0.4"/><path d="M778.5 93.4 L781.7 94.4 L778.2 94.4 L775.1 92.1 Z" fill="#070" stroke="#070" stroke-width="0.4"/><path d="M785.1 93.7 L788.4 94.5 L784.9 95.2 L781.7 94.4 ZM791.7 93.8 L794.9 97.6 L791.7 95.8 L788.4 94.5 Z" fill="#080" stroke="#080" stroke-width="0.4"/><path d="M798.3 96.2 L801.5 99.8 L798.2 100.3 L794.9 97.6 Z" fill="#090" stroke="#090" stroke-width="0.4"/><path d="M804.6 101.5 L808.1 102.2 L804.9 101.3 L801.5 99.8 Z" fill="#0d0" stroke="#0d0" stroke-width="0.4"/><path d="M811.2 102.7 L814.5 105.7 L811.6 103.0 L808.1 102.2 Z" fill="#1e1" stroke="#1e1" stroke-width="0.4"/><path d="M679.1 101.7 L680.8 101.3 L676.8 102.8 L675.3 105.1 Z" fill="#3e4" stroke="#3e4" stroke-width="0.4"/><path d="M720.8 90.3 L723.3 92.8 L719.5 95.7 L716.9 91.5 ZM772.0 93.0 L775.1 92.1 L771.5 95.5 L768.5 94.7 Z" fill="#070" stroke="#070" stroke-width="0.4"/><path d="M817.4 108.0 L820.8 111.2 L817.9 109.4 L814.5 105.7 Z" fill="#5f6" stroke="#5f6" stroke-width="0.4"/><path d="M686.3 95.2 L688.2 95.8 L684.6 101.3 L682.6 100.2 Z" fill="#0a0" stroke="#0a0" stroke-width="0.4"/><path d="M692.2 93.2 L694.1 92.4 L690.3 96.8 L688.2 95.8 Z" fill="#080" stroke="#080" stroke-width="0.4"/><path d="M801.5 99.8 L804.9 101.3 L801.7 101.6 L798.2 100.3 Z" fill="#0c0" stroke="#0c0" stroke-width="0.4"/><path d="M808.1 102.2 L811.6 103.0 L808.6 101.5 L804.9 101.3 Z" fill="#0d0" stroke="#0d0" stroke-width="0.4"/><path d="M680.8 101.3 L682.6 100.2 L678.8 104.6 L676.8 102.8 Z" fill="#2e3" stroke="#2e3" stroke-width="0.4"/><path d="M698.1 90.2 L700.3 90.7 L696.3 93.1 L694.1 92.4 ZM704.3 90.3 L706.6 91.2 L702.5 91.3 L700.3 90.7 Z" fill="#060" stroke="#060" stroke-width="0.4"/><path d="M710.6 90.8 L713.1 94.2 L709.0 92.7 L706.6 91.2 Z" fill="#070" stroke="#070" stroke-width="0.4"/><path d="M716.9 91.5 L719.5 95.7 L715.5 95.3 L713.1 94.2 ZM723.3 92.8 L725.9 95.5 L722.0 96.9 L719.5 95.7 Z" fill="#080" stroke="#080" stroke-width="0.4"/><path d="M729.7 93.9 L732.3 96.7 L728.5 97.9 L725.9 95.5 Z" fill="#090" stroke="#090" stroke-width="0.4"/><path d="M736.0 93.3 L738.7 94.9 L734.9 96.7 L732.3 96.7 Z" fill="#080" stroke="#080" stroke-width="0.4"/><path d="M742.5 94.8 L745.2 95.1 L741.4 94.1 L738.7 94.9 Z" fill="#090" stroke="#090" stroke-width="0.4"/><path d="M748.9 96.8 L751.7 97.6 L748.0 95.2 L745.2 95.1 ZM755.4 96.0 L758.3 97.0 L754.6 98.8 L751.7 97.6 Z" fill="#0a0" stroke="#0a0" stroke-width="0.4"/><path d="M761.9 94.8 L764.9 96.5 L761.3 97.6 L758.3 97.0 Z" fill="#090" stroke="#090" stroke-width="0.4"/><path d="M768.5 94.7 L771.5 95.5 L767.9 97.4 L764.9 96.5 Z" fill="#080" stroke="#080" stroke-width="0.4"/><path d="M775.1 92.1 L778.2 94.4 L774.7 96.9 L771.5 95.5 Z" fill="#070" stroke="#070" stroke-width="0.4"/><path d="M781.7 94.4 L784.9 95.2 L781.5 94.5 L778.2 94.4 ZM788.4 94.5 L791.7 95.8 L788.3 95.7 L784.9 95.2 Z" fill="#080" stroke="#080" stroke-width="0.4"/><path d="M794.9 97.6 L798.2 100.3 L794.9 99.9 L791.7 95.8 Z" fill="#090" stroke="#090" stroke-width="0.4"/><path d="M814.5 105.7 L817.9 109.4 L815.1 106.5 L811.6 103.0 Z" fill="#2e3" stroke="#2e3" stroke-width="0.4"/><path d="M688.2 95.8 L690.3 96.8 L686.6 102.5 L684.6 101.3 Z" fill="#0b0" stroke="#0b0" stroke-width="0.4"/><path d="M694.1 92.4 L696.3 93.1 L692.6 99.0 L690.3 96.8 Z" fill="#080" stroke="#080" stroke-width="0.4"/><path d="M700.3 90.7 L702.5 91.3 L698.5 94.0 L696.3 93.1 ZM706.6 91.2 L709.0 92.7 L704.9 93.3 L702.5 91.3 Z" fill="#060" stroke="#060" stroke-width="0.4"/><path d="M732.3 96.7 L734.9 96.7 L731.1 100.5 L728.5 97.9 Z" fill="#0a0" stroke="#0a0" stroke-width="0.4"/><path d="M738.7 94.9 L741.4 94.1 L737.6 95.5 L734.9 96.7 Z" fill="#080" stroke="#080" stroke-width="0.4"/><path d="M751.7 97.6 L754.6 98.8 L750.9 95.7 L748.0 95.2 Z" fill="#090" stroke="#090" stroke-width="0.4"/><path d="M758.3 97.0 L761.3 97.6 L757.6 98.4 L754.6 98.8 Z" fill="#0a0" stroke="#0a0" stroke-width="0.4"/><path d="M784.9 95.2 L788.3 95.7 L784.8 96.4 L781.5 94.5 ZM791.7 95.8 L794.9 99.9 L791.5 99.6 L788.3 95.7 Z" fill="#080" stroke="#080" stroke-width="0.4"/><path d="M798.2 100.3 L801.7 101.6 L798.2 103.9 L794.9 99.9 Z" fill="#0b0" stroke="#0b0" stroke-width="0.4"/><path d="M804.9 101.3 L808.6 101.5 L805.1 104.2 L801.7 101.6 Z" fill="#0c0" stroke="#0c0" stroke-width="0.4"/><path d="M682.6 100.2 L684.6 101.3 L680.9 107.6 L678.8 104.6 Z" fill="#2d3" stroke="#2d3" stroke-width="0.4"/><path d="M713.1 94.2 L715.5 95.3 L711.4 94.7 L709.0 92.7 Z" fill="#080" stroke="#080" stroke-width="0.4"/><path d="M719.5 95.7 L722.0 96.9 L717.9 96.1 L715.5 95.3 ZM725.9 95.5 L728.5 97.9 L724.5 98.3 L722.0 96.9 Z" fill="#0a0" stroke="#0a0" stroke-width="0.4"/><path d="M745.2 95.1 L748.0 95.2 L744.2 93.6 L741.4 94.1 Z" fill="#080" stroke="#080" stroke-width="0.4"/><path d="M764.9 96.5 L767.9 97.4 L764.3 100.2 L761.3 97.6 Z" fill="#090" stroke="#090" stroke-width="0.4"/><path d="M771.5 95.5 L774.7 96.9 L771.0 99.4 L767.9 97.4 Z" fill="#080" stroke="#080" stroke-width="0.4"/><path d="M778.2 94.4 L781.5 94.5 L777.9 98.4 L774.7 96.9 Z" fill="#070" stroke="#070" stroke-width="0.4"/><path d="M811.6 103.0 L815.1 106.5 L812.1 104.4 L808.6 101.5 Z" fill="#0d1" stroke="#0d1" stroke-width="0.4"/><path d="M684.6 101.3 L686.6 102.5 L682.9 108.6 L680.9 107.6 Z" fill="#3d4" stroke="#3d4" stroke-width="0.4"/><path d="M690.3 96.8 L692.6 99.0 L688.7 103.8 L686.6 102.5 Z" fill="#0b1" stroke="#0b1" stroke-width="0.4"/><path d="M696.3 93.1 L698.5 94.0 L694.7 99.3 L692.6 99.0 Z" fill="#080" stroke="#080" stroke-width="0.4"/><path d="M702.5 91.3 L704.9 93.3 L700.8 95.3 L698.5 94.0 ZM709.0 92.7 L711.4 94.7 L707.3 95.1 L704.9 93.3 Z" fill="#070" stroke="#070" stroke-width="0.4"/><path d="M715.5 95.3 L717.9 96.1 L713.9 96.5 L711.4 94.7 Z" fill="#090" stroke="#090" stroke-width="0.4"/><path d="M722.0 96.9 L724.5 98.3 L720.5 97.1 L717.9 96.1 Z" fill="#0a0" stroke="#0a0" stroke-width="0.4"/><path d="M728.5 97.9 L731.1 100.5 L727.1 99.7 L724.5 98.3 Z" fill="#0b0" stroke="#0b0" stroke-width="0.4"/><path d="M734.9 96.7 L737.6 95.5 L733.7 99.4 L731.1 100.5 Z" fill="#090" stroke="#090" stroke-width="0.4"/><path d="M741.4 94.1 L744.2 93.6 L740.3 93.9 L737.6 95.5 Z" fill="#070" stroke="#070" stroke-width="0.4"/><path d="M748.0 95.2 L750.9 95.7 L747.0 93.9 L744.2 93.6 Z" fill="#080" stroke="#080" stroke-width="0.4"/><path d="M754.6 98.8 L757.6 98.4 L753.8 96.3 L750.9 95.7 Z" fill="#090" stroke="#090" stroke-width="0.4"/><path d="M761.3 97.6 L764.3 100.2 L760.6 101.0 L757.6 98.4 ZM767.9 97.4 L771.0 99.4 L767.4 101.7 L764.3 100.2 Z" fill="#0a0" stroke="#0a0" stroke-width="0.4"/><path d="M774.7 96.9 L777.9 98.4 L774.2 101.4 L771.0 99.4 Z" fill="#090" stroke="#090" stroke-width="0.4"/><path d="M781.5 94.5 L784.8 96.4 L781.1 100.8 L777.9 98.4 ZM788.3 95.7 L791.5 99.6 L788.0 100.6 L784.8 96.4 Z" fill="#080" stroke="#080" stroke-width="0.4"/><path d="M794.9 99.9 L798.2 103.9 L794.7 106.1 L791.5 99.6 Z" fill="#0b0" stroke="#0b0" stroke-width="0.4"/><path d="M801.7 101.6 L805.1 104.2 L801.7 106.2 L798.2 103.9 ZM808.6 101.5 L812.1 104.4 L808.5 108.1 L805.1 104.2 Z" fill="#0c1" stroke="#0c1" stroke-width="0.4"/><path d="M692.6 99.0 L694.7 99.3 L691.1 107.0 L688.7 103.8 Z" fill="#1c1" stroke="#1c1" stroke-width="0.4"/><path d="M698.5 94.0 L700.8 95.3 L697.0 101.1 L694.7 99.3 Z" fill="#090" stroke="#090" stroke-width="0.4"/><path d="M791.5 99.6 L794.7 106.1 L791.2 107.2 L788.0 100.6 Z" fill="#0b0" stroke="#0b0" stroke-width="0.4"/><path d="M798.2 103.9 L801.7 106.2 L798.1 110.2 L794.7 106.1 Z" fill="#1d1" stroke="#1d1" stroke-width="0.4"/><path d="M704.9 93.3 L707.3 95.1 L703.3 98.5 L700.8 95.3 Z" fill="#070" stroke="#070" stroke-width="0.4"/><path d="M711.4 94.7 L713.9 96.5 L709.8 97.7 L707.3 95.1 Z" fill="#080" stroke="#080" stroke-width="0.4"/><path d="M717.9 96.1 L720.5 97.1 L716.4 97.6 L713.9 96.5 Z" fill="#090" stroke="#090" stroke-width="0.4"/><path d="M724.5 98.3 L727.1 99.7 L723.0 98.6 L720.5 97.1 Z" fill="#0a0" stroke="#0a0" stroke-width="0.4"/><path d="M731.1 100.5 L733.7 99.4 L729.8 101.7 L727.1 99.7 Z" fill="#0c0" stroke="#0c0" stroke-width="0.4"/><path d="M737.6 95.5 L740.3 93.9 L736.4 99.4 L733.7 99.4 Z" fill="#080" stroke="#080" stroke-width="0.4"/><path d="M744.2 93.6 L747.0 93.9 L743.1 93.9 L740.3 93.9 Z" fill="#060" stroke="#060" stroke-width="0.4"/><path d="M750.9 95.7 L753.8 96.3 L749.9 94.9 L747.0 93.9 Z" fill="#080" stroke="#080" stroke-width="0.4"/><path d="M757.6 98.4 L760.6 101.0 L756.8 98.6 L753.8 96.3 Z" fill="#090" stroke="#090" stroke-width="0.4"/><path d="M764.3 100.2 L767.4 101.7 L763.6 103.3 L760.6 101.0 ZM771.0 99.4 L774.2 101.4 L770.5 102.7 L767.4 101.7 Z" fill="#0b0" stroke="#0b0" stroke-width="0.4"/><path d="M777.9 98.4 L781.1 100.8 L777.4 103.9 L774.2 101.4 Z" fill="#0a0" stroke="#0a0" stroke-width="0.4"/><path d="M784.8 96.4 L788.0 100.6 L784.4 103.2 L781.1 100.8 Z" fill="#090" stroke="#090" stroke-width="0.4"/><path d="M686.6 102.5 L688.7 103.8 L685.1 110.9 L682.9 108.6 Z" fill="#4d5" stroke="#4d5" stroke-width="0.4"/><path d="M805.1 104.2 L808.5 108.1 L805.0 111.7 L801.7 106.2 Z" fill="#1d2" stroke="#1d2" stroke-width="0.4"/><path d="M688.7 103.8 L691.1 107.0 L687.2 111.6 L685.1 110.9 Z" fill="#4d6" stroke="#4d6" stroke-width="0.4"/><path d="M694.7 99.3 L697.0 101.1 L693.3 108.1 L691.1 107.0 Z" fill="#1c1" stroke="#1c1" stroke-width="0.4"/><path d="M700.8 95.3 L703.3 98.5 L699.5 104.8 L697.0 101.1 Z" fill="#0a0" stroke="#0a0" stroke-width="0.4"/><path d="M707.3 95.1 L709.8 97.7 L705.7 101.2 L703.3 98.5 ZM713.9 96.5 L716.4 97.6 L712.3 100.5 L709.8 97.7 ZM720.5 97.1 L723.0 98.6 L719.0 100.6 L716.4 97.6 Z" fill="#090" stroke="#090" stroke-width="0.4"/><path d="M727.1 99.7 L729.8 101.7 L725.8 101.9 L723.0 98.6 Z" fill="#0b0" stroke="#0b0" stroke-width="0.4"/><path d="M733.7 99.4 L736.4 99.4 L732.6 104.0 L729.8 101.7 Z" fill="#0a0" stroke="#0a0" stroke-width="0.4"/><path d="M740.3 93.9 L743.1 93.9 L739.2 99.4 L736.4 99.4 Z" fill="#070" stroke="#070" stroke-width="0.4"/><path d="M747.0 93.9 L749.9 94.9 L746.0 95.9 L743.1 93.9 Z" fill="#060" stroke="#060" stroke-width="0.4"/><path d="M753.8 96.3 L756.8 98.6 L752.9 98.6 L749.9 94.9 Z" fill="#080" stroke="#080" stroke-width="0.4"/><path d="M760.6 101.0 L763.6 103.3 L759.9 102.5 L756.8 98.6 Z" fill="#0b0" stroke="#0b0" stroke-width="0.4"/><path d="M767.4 101.7 L770.5 102.7 L766.8 105.3 L763.6 103.3 Z" fill="#0c0" stroke="#0c0" stroke-width="0.4"/><path d="M774.2 101.4 L777.4 103.9 L773.7 105.5 L770.5 102.7 ZM781.1 100.8 L784.4 103.2 L780.7 106.7 L777.4 103.9 Z" fill="#0b0" stroke="#0b0" stroke-width="0.4"/><path d="M788.0 100.6 L791.2 107.2 L787.6 108.9 L784.4 103.2 Z" fill="#0b1" stroke="#0b1" stroke-width="0.4"/><path d="M794.7 106.1 L798.1 110.2 L794.5 112.5 L791.2 107.2 Z" fill="#2d3" stroke="#2d3" stroke-width="0.4"/><path d="M801.7 106.2 L805.0 111.7 L801.6 112.3 L798.1 110.2 Z" fill="#3d4" stroke="#3d4" stroke-width="0.4"/><path d="M697.0 101.1 L699.5 104.8 L695.5 109.1 L693.3 108.1 Z" fill="#2d2" stroke="#2d2" stroke-width="0.4"/><path d="M703.3 98.5 L705.7 101.2 L701.9 107.0 L699.5 104.8 Z" fill="#0b1" stroke="#0b1" stroke-width="0.4"/><path d="M709.8 97.7 L712.3 100.5 L708.3 104.0 L705.7 101.2 ZM716.4 97.6 L719.0 100.6 L714.9 103.1 L712.3 100.5 ZM723.0 98.6 L725.8 101.9 L721.7 103.7 L719.0 100.6 Z" fill="#0a0" stroke="#0a0" stroke-width="0.4"/><path d="M743.1 93.9 L746.0 95.9 L742.1 101.7 L739.2 99.4 Z" fill="#070" stroke="#070" stroke-width="0.4"/><path d="M763.6 103.3 L766.8 105.3 L763.0 107.4 L759.9 102.5 ZM770.5 102.7 L773.7 105.5 L770.0 106.1 L766.8 105.3 Z" fill="#0c1" stroke="#0c1" stroke-width="0.4"/><path d="M777.4 103.9 L780.7 106.7 L777.0 107.6 L773.7 105.5 Z" fill="#1d1" stroke="#1d1" stroke-width="0.4"/><path d="M784.4 103.2 L787.6 108.9 L783.9 112.4 L780.7 106.7 Z" fill="#1d2" stroke="#1d2" stroke-width="0.4"/><path d="M791.2 107.2 L794.5 112.5 L791.0 113.2 L787.6 108.9 Z" fill="#3d4" stroke="#3d4" stroke-width="0.4"/><path d="M691.1 107.0 L693.3 108.1 L689.1 110.7 L687.2 111.6 Z" fill="#5e6" stroke="#5e6" stroke-width="0.4"/><path d="M729.8 101.7 L732.6 104.0 L728.6 106.9 L725.8 101.9 Z" fill="#0c1" stroke="#0c1" stroke-width="0.4"/><path d="M736.4 99.4 L739.2 99.4 L735.3 104.4 L732.6 104.0 Z" fill="#0a0" stroke="#0a0" stroke-width="0.4"/><path d="M749.9 94.9 L752.9 98.6 L749.0 100.3 L746.0 95.9 Z" fill="#070" stroke="#070" stroke-width="0.4"/><path d="M756.8 98.6 L759.9 102.5 L756.0 103.8 L752.9 98.6 Z" fill="#090" stroke="#090" stroke-width="0.4"/><path d="M798.1 110.2 L801.6 112.3 L798.1 113.5 L794.5 112.5 Z" fill="#5e6" stroke="#5e6" stroke-width="0.4"/><path d="M699.5 104.8 L701.9 107.0 L697.8 111.3 L695.5 109.1 Z" fill="#3d4" stroke="#3d4" stroke-width="0.4"/><path d="M705.7 101.2 L708.3 104.0 L704.2 107.1 L701.9 107.0 Z" fill="#1c1" stroke="#1c1" stroke-width="0.4"/><path d="M712.3 100.5 L714.9 103.1 L710.7 104.3 L708.3 104.0 Z" fill="#0c0" stroke="#0c0" stroke-width="0.4"/><path d="M719.0 100.6 L721.7 103.7 L717.6 106.0 L714.9 103.1 Z" fill="#0b0" stroke="#0b0" stroke-width="0.4"/><path d="M725.8 101.9 L728.6 106.9 L724.5 108.2 L721.7 103.7 Z" fill="#1c1" stroke="#1c1" stroke-width="0.4"/><path d="M732.6 104.0 L735.3 104.4 L731.3 108.2 L728.6 106.9 Z" fill="#1d1" stroke="#1d1" stroke-width="0.4"/><path d="M739.2 99.4 L742.1 101.7 L738.2 106.2 L735.3 104.4 Z" fill="#0a0" stroke="#0a0" stroke-width="0.4"/><path d="M746.0 95.9 L749.0 100.3 L745.1 104.0 L742.1 101.7 Z" fill="#080" stroke="#080" stroke-width="0.4"/><path d="M752.9 98.6 L756.0 103.8 L752.1 105.8 L749.0 100.3 Z" fill="#090" stroke="#090" stroke-width="0.4"/><path d="M759.9 102.5 L763.0 107.4 L759.1 108.7 L756.0 103.8 Z" fill="#0c1" stroke="#0c1" stroke-width="0.4"/><path d="M766.8 105.3 L770.0 106.1 L766.2 108.0 L763.0 107.4 ZM773.7 105.5 L777.0 107.6 L773.3 108.5 L770.0 106.1 Z" fill="#1d1" stroke="#1d1" stroke-width="0.4"/><path d="M780.7 106.7 L783.9 112.4 L780.2 113.7 L777.0 107.6 Z" fill="#2d3" stroke="#2d3" stroke-width="0.4"/><path d="M787.6 108.9 L791.0 113.2 L787.3 116.7 L783.9 112.4 Z" fill="#4d6" stroke="#4d6" stroke-width="0.4"/><path d="M693.3 108.1 L695.5 109.1 L691.2 111.3 L689.1 110.7 Z" fill="#5e6" stroke="#5e6" stroke-width="0.4"/><path d="M794.5 112.5 L798.1 113.5 L794.5 114.4 L791.0 113.2 Z" fill="#5f7" stroke="#5f7" stroke-width="0.4"/><path d="M695.5 109.1 L697.8 111.3 L693.5 112.0 L691.2 111.3 Z" fill="#5f6" stroke="#5f6" stroke-width="0.4"/><path d="M701.9 107.0 L704.2 107.1 L700.0 110.8 L697.8 111.3 Z" fill="#3e4" stroke="#3e4" stroke-width="0.4"/><path d="M708.3 104.0 L710.7 104.3 L706.5 107.1 L704.2 107.1 ZM714.9 103.1 L717.6 106.0 L713.4 107.4 L710.7 104.3 Z" fill="#1d1" stroke="#1d1" stroke-width="0.4"/><path d="M721.7 103.7 L724.5 108.2 L720.4 111.1 L717.6 106.0 Z" fill="#1d2" stroke="#1d2" stroke-width="0.4"/><path d="M728.6 106.9 L731.3 108.2 L727.2 109.6 L724.5 108.2 Z" fill="#2f3" stroke="#2f3" stroke-width="0.4"/><path d="M735.3 104.4 L738.2 106.2 L734.1 109.9 L731.3 108.2 Z" fill="#1d1" stroke="#1d1" stroke-width="0.4"/><path d="M742.1 101.7 L745.1 104.0 L741.1 109.7 L738.2 106.2 Z" fill="#0b1" stroke="#0b1" stroke-width="0.4"/><path d="M749.0 100.3 L752.1 105.8 L748.1 109.0 L745.1 104.0 Z" fill="#0b0" stroke="#0b0" stroke-width="0.4"/><path d="M756.0 103.8 L759.1 108.7 L755.2 111.4 L752.1 105.8 Z" fill="#1c1" stroke="#1c1" stroke-width="0.4"/><path d="M763.0 107.4 L766.2 108.0 L762.3 112.3 L759.1 108.7 Z" fill="#1e2" stroke="#1e2" stroke-width="0.4"/><path d="M770.0 106.1 L773.3 108.5 L769.4 110.7 L766.2 108.0 Z" fill="#1d1" stroke="#1d1" stroke-width="0.4"/><path d="M777.0 107.6 L780.2 113.7 L776.5 114.7 L773.3 108.5 Z" fill="#3d4" stroke="#3d4" stroke-width="0.4"/><path d="M783.9 112.4 L787.3 116.7 L783.6 116.9 L780.2 113.7 Z" fill="#5e6" stroke="#5e6" stroke-width="0.4"/><path d="M791.0 113.2 L794.5 114.4 L790.9 115.4 L787.3 116.7 ZM697.8 111.3 L700.0 110.8 L695.6 110.7 L693.5 112.0 Z" fill="#5f7" stroke="#5f7" stroke-width="0.4"/><path d="M704.2 107.1 L706.5 107.1 L702.4 111.0 L700.0 110.8 Z" fill="#3e3" stroke="#3e3" stroke-width="0.4"/><path d="M710.7 104.3 L713.4 107.4 L709.1 108.7 L706.5 107.1 Z" fill="#1d1" stroke="#1d1" stroke-width="0.4"/><path d="M717.6 106.0 L720.4 111.1 L716.2 112.4 L713.4 107.4 Z" fill="#2d3" stroke="#2d3" stroke-width="0.4"/><path d="M724.5 108.2 L727.2 109.6 L723.3 116.7 L720.4 111.1 ZM731.3 108.2 L734.1 109.9 L730.2 117.6 L727.2 109.6 Z" fill="#4d5" stroke="#4d5" stroke-width="0.4"/><path d="M738.2 106.2 L741.1 109.7 L737.2 118.2 L734.1 109.9 Z" fill="#3d4" stroke="#3d4" stroke-width="0.4"/><path d="M745.1 104.0 L748.1 109.0 L744.2 118.4 L741.1 109.7 Z" fill="#2d3" stroke="#2d3" stroke-width="0.4"/><path d="M752.1 105.8 L755.2 111.4 L751.2 119.6 L748.1 109.0 Z" fill="#3d4" stroke="#3d4" stroke-width="0.4"/><path d="M759.1 108.7 L762.3 112.3 L758.3 117.4 L755.2 111.4 Z" fill="#4d5" stroke="#4d5" stroke-width="0.4"/><path d="M766.2 108.0 L769.4 110.7 L765.5 115.6 L762.3 112.3 ZM773.3 108.5 L776.5 114.7 L772.7 115.9 L769.4 110.7 Z" fill="#3d4" stroke="#3d4" stroke-width="0.4"/><path d="M780.2 113.7 L783.6 116.9 L779.9 117.7 L776.5 114.7 Z" fill="#5e7" stroke="#5e7" stroke-width="0.4"/><path d="M787.3 116.7 L790.9 115.4 L787.2 116.4 L783.6 116.9 Z" fill="#6f7" stroke="#6f7" stroke-width="0.4"/><path d="M706.5 107.1 L709.1 108.7 L704.7 110.2 L702.4 111.0 Z" fill="#2e3" stroke="#2e3" stroke-width="0.4"/><path d="M776.5 114.7 L779.9 117.7 L776.1 116.8 L772.7 115.9 Z" fill="#5f7" stroke="#5f7" stroke-width="0.4"/><path d="M700.0 110.8 L702.4 111.0 L698.1 114.2 L695.6 110.7 Z" fill="#5e6" stroke="#5e6" stroke-width="0.4"/><path d="M713.4 107.4 L716.2 112.4 L711.7 111.3 L709.1 108.7 Z" fill="#2e3" stroke="#2e3" stroke-width="0.4"/><path d="M720.4 111.1 L723.3 116.7 L719.2 120.2 L716.2 112.4 Z" fill="#5d6" stroke="#5d6" stroke-width="0.4"/><path d="M727.2 109.6 L730.2 117.6 L726.3 124.2 L723.3 116.7 Z" fill="#5d7" stroke="#5d7" stroke-width="0.4"/><path d="M734.1 109.9 L737.2 118.2 L733.1 119.5 L730.2 117.6 ZM741.1 109.7 L744.2 118.4 L740.1 119.1 L737.2 118.2 ZM748.1 109.0 L751.2 119.6 L747.2 120.7 L744.2 118.4 ZM755.2 111.4 L758.3 117.4 L754.4 126.8 L751.2 119.6 ZM762.3 112.3 L765.5 115.6 L761.5 122.4 L758.3 117.4 Z" fill="#5d6" stroke="#5d6" stroke-width="0.4"/><path d="M769.4 110.7 L772.7 115.9 L768.8 118.8 L765.5 115.6 Z" fill="#4d6" stroke="#4d6" stroke-width="0.4"/><path d="M783.6 116.9 L787.2 116.4 L783.5 117.1 L779.9 117.7 Z" fill="#6f7" stroke="#6f7" stroke-width="0.4"/><path d="M709.1 108.7 L711.7 111.3 L707.3 112.9 L704.7 110.2 Z" fill="#3e4" stroke="#3e4" stroke-width="0.4"/><path d="M716.2 112.4 L719.2 120.2 L714.8 121.1 L711.7 111.3 Z" fill="#5d6" stroke="#5d6" stroke-width="0.4"/><path d="M723.3 116.7 L726.3 124.2 L721.8 121.2 L719.2 120.2 ZM758.3 117.4 L761.5 122.4 L757.5 122.1 L754.4 126.8 Z" fill="#8c2" stroke="#8c2" stroke-width="0.4"/><path d="M765.5 115.6 L768.8 118.8 L764.8 124.7 L761.5 122.4 Z" fill="#6c6" stroke="#6c6" stroke-width="0.4"/><path d="M772.7 115.9 L776.1 116.8 L772.2 118.7 L768.8 118.8 Z" fill="#5e7" stroke="#5e7" stroke-width="0.4"/><path d="M702.4 111.0 L704.7 110.2 L700.5 115.4 L698.1 114.2 Z" fill="#4e6" stroke="#4e6" stroke-width="0.4"/><path d="M730.2 117.6 L733.1 119.5 L728.7 117.8 L726.3 124.2 Z" fill="#7d5" stroke="#7d5" stroke-width="0.4"/><path d="M737.2 118.2 L740.1 119.1 L735.8 116.3 L733.1 119.5 ZM744.2 118.4 L747.2 120.7 L743.0 117.9 L740.1 119.1 Z" fill="#6f8" stroke="#6f8" stroke-width="0.4"/><path d="M751.2 119.6 L754.4 126.8 L750.3 119.0 L747.2 120.7 Z" fill="#9d2" stroke="#9d2" stroke-width="0.4"/><path d="M779.9 117.7 L783.5 117.1 L779.7 116.3 L776.1 116.8 Z" fill="#6f7" stroke="#6f7" stroke-width="0.4"/><path d="M704.7 110.2 L707.3 112.9 L703.1 117.4 L700.5 115.4 Z" fill="#4d6" stroke="#4d6" stroke-width="0.4"/><path d="M711.7 111.3 L714.8 121.1 L710.5 122.8 L707.3 112.9 Z" fill="#5d6" stroke="#5d6" stroke-width="0.4"/><path d="M719.2 120.2 L721.8 121.2 L717.3 118.4 L714.8 121.1 Z" fill="#8f5" stroke="#8f5" stroke-width="0.4"/><path d="M726.3 124.2 L728.7 117.8 L724.3 115.5 L721.8 121.2 Z" fill="#7f7" stroke="#7f7" stroke-width="0.4"/><path d="M733.1 119.5 L735.8 116.3 L731.6 117.4 L728.7 117.8 ZM740.1 119.1 L743.0 117.9 L738.8 117.5 L735.8 116.3 ZM747.2 120.7 L750.3 119.0 L746.1 116.8 L743.0 117.9 Z" fill="#6f8" stroke="#6f8" stroke-width="0.4"/><path d="M754.4 126.8 L757.5 122.1 L753.4 115.8 L750.3 119.0 Z" fill="#7e7" stroke="#7e7" stroke-width="0.4"/><path d="M761.5 122.4 L764.8 124.7 L760.8 117.7 L757.5 122.1 Z" fill="#8e5" stroke="#8e5" stroke-width="0.4"/><path d="M768.8 118.8 L772.2 118.7 L768.1 125.7 L764.8 124.7 Z" fill="#6c5" stroke="#6c5" stroke-width="0.4"/><path d="M776.1 116.8 L779.7 116.3 L775.8 118.7 L772.2 118.7 Z" fill="#5f7" stroke="#5f7" stroke-width="0.4"/><path d="M714.8 121.1 L717.3 118.4 L712.6 116.5 L710.5 122.8 Z" fill="#6f8" stroke="#6f8" stroke-width="0.4"/><path d="M721.8 121.2 L724.3 115.5 L719.8 114.9 L717.3 118.4 ZM728.7 117.8 L731.6 117.4 L727.2 118.1 L724.3 115.5 Z" fill="#6f7" stroke="#6f7" stroke-width="0.4"/><path d="M735.8 116.3 L738.8 117.5 L734.5 118.8 L731.6 117.4 ZM743.0 117.9 L746.1 116.8 L741.8 115.3 L738.8 117.5 ZM750.3 119.0 L753.4 115.8 L749.2 114.8 L746.1 116.8 ZM757.5 122.1 L760.8 117.7 L756.7 115.0 L753.4 115.8 Z" fill="#5f7" stroke="#5f7" stroke-width="0.4"/><path d="M764.8 124.7 L768.1 125.7 L764.2 118.2 L760.8 117.7 Z" fill="#6f8" stroke="#6f8" stroke-width="0.4"/><path d="M707.3 112.9 L710.5 122.8 L706.6 133.0 L703.1 117.4 Z" fill="#7b2" stroke="#7b2" stroke-width="0.4"/><path d="M772.2 118.7 L775.8 118.7 L771.4 135.8 L768.1 125.7 ZM710.5 122.8 L712.6 116.5 L708.2 119.7 L706.6 133.0 Z" fill="#8c2" stroke="#8c2" stroke-width="0.4"/><path d="M717.3 118.4 L719.8 114.9 L715.3 116.5 L712.6 116.5 Z" fill="#5f7" stroke="#5f7" stroke-width="0.4"/><path d="M724.3 115.5 L727.2 118.1 L722.7 118.3 L719.8 114.9 Z" fill="#5f6" stroke="#5f6" stroke-width="0.4"/><path d="M731.6 117.4 L734.5 118.8 L730.1 119.9 L727.2 118.1 ZM738.8 117.5 L741.8 115.3 L737.5 118.8 L734.5 118.8 Z" fill="#5f7" stroke="#5f7" stroke-width="0.4"/><path d="M746.1 116.8 L749.2 114.8 L744.9 113.3 L741.8 115.3 ZM753.4 115.8 L756.7 115.0 L752.5 115.7 L749.2 114.8 Z" fill="#4f5" stroke="#4f5" stroke-width="0.4"/><path d="M760.8 117.7 L764.2 118.2 L760.1 118.4 L756.7 115.0 Z" fill="#5f7" stroke="#5f7" stroke-width="0.4"/><path d="M768.1 125.7 L771.4 135.8 L767.7 121.2 L764.2 118.2 Z" fill="#8d2" stroke="#8d2" stroke-width="0.4"/><path d="M712.6 116.5 L715.3 116.5 L710.8 119.5 L708.2 119.7 Z" fill="#5e6" stroke="#5e6" stroke-width="0.4"/><path d="M719.8 114.9 L722.7 118.3 L718.0 117.5 L715.3 116.5 Z" fill="#5f6" stroke="#5f6" stroke-width="0.4"/><path d="M727.2 118.1 L730.1 119.9 L725.7 122.3 L722.7 118.3 ZM734.5 118.8 L737.5 118.8 L733.2 122.1 L730.1 119.9 Z" fill="#5e7" stroke="#5e7" stroke-width="0.4"/><path d="M741.8 115.3 L744.9 113.3 L740.6 117.3 L737.5 118.8 Z" fill="#4e5" stroke="#4e5" stroke-width="0.4"/><path d="M749.2 114.8 L752.5 115.7 L748.2 117.9 L744.9 113.3 Z" fill="#3f4" stroke="#3f4" stroke-width="0.4"/><path d="M756.7 115.0 L760.1 118.4 L755.8 119.6 L752.5 115.7 Z" fill="#4e5" stroke="#4e5" stroke-width="0.4"/><path d="M764.2 118.2 L767.7 121.2 L763.5 122.6 L760.1 118.4 ZM715.3 116.5 L718.0 117.5 L713.5 119.9 L710.8 119.5 Z" fill="#5e6" stroke="#5e6" stroke-width="0.4"/><path d="M722.7 118.3 L725.7 122.3 L721.1 121.5 L718.0 117.5 Z" fill="#5e7" stroke="#5e7" stroke-width="0.4"/><path d="M730.1 119.9 L733.2 122.1 L728.7 125.4 L725.7 122.3 Z" fill="#5d7" stroke="#5d7" stroke-width="0.4"/><path d="M737.5 118.8 L740.6 117.3 L736.2 121.9 L733.2 122.1 Z" fill="#5e6" stroke="#5e6" stroke-width="0.4"/><path d="M744.9 113.3 L748.2 117.9 L743.8 119.9 L740.6 117.3 Z" fill="#3d4" stroke="#3d4" stroke-width="0.4"/><path d="M752.5 115.7 L755.8 119.6 L751.5 119.6 L748.2 117.9 Z" fill="#4e6" stroke="#4e6" stroke-width="0.4"/><path d="M760.1 118.4 L763.5 122.6 L759.3 125.3 L755.8 119.6 Z" fill="#5d6" stroke="#5d6" stroke-width="0.4"/><path d="M725.7 122.3 L728.7 125.4 L724.1 126.2 L721.1 121.5 ZM733.2 122.1 L736.2 121.9 L731.8 126.0 L728.7 125.4 Z" fill="#6e7" stroke="#6e7" stroke-width="0.4"/><path d="M740.6 117.3 L743.8 119.9 L739.3 122.5 L736.2 121.9 ZM748.2 117.9 L751.5 119.6 L747.1 123.5 L743.8 119.9 ZM718.0 117.5 L721.1 121.5 L716.4 122.5 L713.5 119.9 Z" fill="#5e6" stroke="#5e6" stroke-width="0.4"/><path d="M755.8 119.6 L759.3 125.3 L754.9 126.2 L751.5 119.6 Z" fill="#5d6" stroke="#5d6" stroke-width="0.4"/><path d="M728.7 125.4 L731.8 126.0 L727.1 126.5 L724.1 126.2 Z" fill="#7f6" stroke="#7f6" stroke-width="0.4"/><path d="M736.2 121.9 L739.3 122.5 L734.8 123.9 L731.8 126.0 Z" fill="#5e7" stroke="#5e7" stroke-width="0.4"/><path d="M743.8 119.9 L747.1 123.5 L742.6 125.6 L739.3 122.5 Z" fill="#5e6" stroke="#5e6" stroke-width="0.4"/><path d="M721.1 121.5 L724.1 126.2 L719.4 125.9 L716.4 122.5 Z" fill="#6e7" stroke="#6e7" stroke-width="0.4"/><path d="M751.5 119.6 L754.9 126.2 L750.5 128.5 L747.1 123.5 Z" fill="#5d6" stroke="#5d6" stroke-width="0.4"/><path d="M724.1 126.2 L727.1 126.5 L722.3 126.7 L719.4 125.9 Z" fill="#7f7" stroke="#7f7" stroke-width="0.4"/><path d="M731.8 126.0 L734.8 123.9 L730.1 124.7 L727.1 126.5 Z" fill="#6f8" stroke="#6f8" stroke-width="0.4"/><path d="M739.3 122.5 L742.6 125.6 L738.0 126.0 L734.8 123.9 Z" fill="#5f7" stroke="#5f7" stroke-width="0.4"/><path d="M747.1 123.5 L750.5 128.5 L746.0 130.0 L742.6 125.6 Z" fill="#5d7" stroke="#5d7" stroke-width="0.4"/><path d="M727.1 126.5 L730.1 124.7 L725.4 126.9 L722.3 126.7 Z" fill="#6f8" stroke="#6f8" stroke-width="0.4"/><path d="M734.8 123.9 L738.0 126.0 L733.3 125.2 L730.1 124.7 Z" fill="#6f7" stroke="#6f7" stroke-width="0.4"/><path d="M742.6 125.6 L746.0 130.0 L741.4 128.2 L738.0 126.0 Z" fill="#6f8" stroke="#6f8" stroke-width="0.4"/><path d="M730.1 124.7 L733.3 125.2 L728.3 123.8 L725.4 126.9 ZM738.0 126.0 L741.4 128.2 L736.5 125.2 L733.3 125.2 Z" fill="#6f7" stroke="#6f7" stroke-width="0.4"/><path d="M733.3 125.2 L736.5 125.2 L731.5 122.1 L728.3 123.8 Z" fill="#5f7" stroke="#5f7" stroke-width="0.4"/></g></g>
<clipPath id="pc"><rect x="587.5" y="50.5" width="328.5" height="245"/></clipPath><g clip-path="url(#pc)" font-family="DejaVu Sans, Liberation Sans, sans-serif">
<text x="629.2" y="85.4" font-size="7.5" text-anchor="middle" fill="#444">25</text>
<text x="634.0" y="113.4" font-size="7.5" text-anchor="middle" fill="#444">20</text>
<text x="637.0" y="139.4" font-size="7.5" text-anchor="middle" fill="#444">15</text>
<text x="641.0" y="163.4" font-size="7.5" text-anchor="middle" fill="#444">10</text>
<text x="646.0" y="186.4" font-size="7.5" text-anchor="middle" fill="#444">5</text>
<text x="650.0" y="204.6" font-size="7.5" text-anchor="middle" fill="#444">0</text>
<text x="653.5" y="213.1" font-size="7.5" text-anchor="middle" fill="#444" transform="rotate(-28 653.5 213.1)">0</text>
<text x="665.0" y="229.2" font-size="7.5" text-anchor="middle" fill="#444" transform="rotate(-28 665.0 229.2)">1.3</text>
<text x="681.0" y="245.6" font-size="7.5" text-anchor="middle" fill="#444" transform="rotate(-28 681.0 245.6)">2.5</text>
<text x="698.0" y="267.0" font-size="7.5" text-anchor="middle" fill="#444" transform="rotate(-28 698.0 267.0)">3.8</text>
<text x="719.5" y="291.9" font-size="7.5" text-anchor="middle" fill="#444" transform="rotate(-28 719.5 291.9)">5</text>
<text x="858.0" y="229.6" font-size="7.5" text-anchor="middle" fill="#444" transform="rotate(33 858.0 229.6)">0</text>
<text x="837.0" y="243.6" font-size="7.5" text-anchor="middle" fill="#444" transform="rotate(33 837.0 243.6)">1.3</text>
<text x="812.0" y="257.6" font-size="7.5" text-anchor="middle" fill="#444" transform="rotate(33 812.0 257.6)">2.5</text>
<text x="783.0" y="275.6" font-size="7.5" text-anchor="middle" fill="#444" transform="rotate(33 783.0 275.6)">3.8</text>
<text x="748.5" y="298.6" font-size="7.5" text-anchor="middle" fill="#444" transform="rotate(33 748.5 298.6)">5</text>
</g>
<defs><linearGradient id="cb" x1="0" y1="0" x2="0" y2="1"><stop offset="0.000" stop-color="#005f00"/><stop offset="0.043" stop-color="#007600"/><stop offset="0.149" stop-color="#00a000"/><stop offset="0.255" stop-color="#00cd05"/><stop offset="0.362" stop-color="#14f81e"/><stop offset="0.468" stop-color="#52fa69"/><stop offset="0.564" stop-color="#64f582"/><stop offset="0.617" stop-color="#7ae85a"/><stop offset="0.681" stop-color="#94dc28"/><stop offset="0.787" stop-color="#beeb1e"/><stop offset="0.894" stop-color="#d8f019"/><stop offset="1.000" stop-color="#d4c828"/></linearGradient></defs>
<rect x="929.3" y="56.4" width="16.4" height="232.4" fill="url(#cb)" stroke="#5a6a4a" stroke-width="0.6"/>
<g font-family="DejaVu Sans, Liberation Sans, sans-serif">
<text x="948.3" y="69.0" font-size="6.9" fill="#444">25</text>
<text x="948.3" y="93.7" font-size="6.9" fill="#444">24.5</text>
<text x="948.3" y="118.3" font-size="6.9" fill="#444">24</text>
<text x="948.3" y="143.0" font-size="6.9" fill="#444">23.5</text>
<text x="948.3" y="167.7" font-size="6.9" fill="#444">23</text>
<text x="948.3" y="192.4" font-size="6.9" fill="#444">22.5</text>
<text x="948.3" y="217.0" font-size="6.9" fill="#444">22</text>
<text x="948.3" y="241.7" font-size="6.9" fill="#444">21.5</text>
<text x="948.3" y="266.4" font-size="6.9" fill="#444">21</text>
<text x="948.3" y="291.0" font-size="6.9" fill="#444">20.5</text>
</g></svg>
</div></div>
</body></html>
